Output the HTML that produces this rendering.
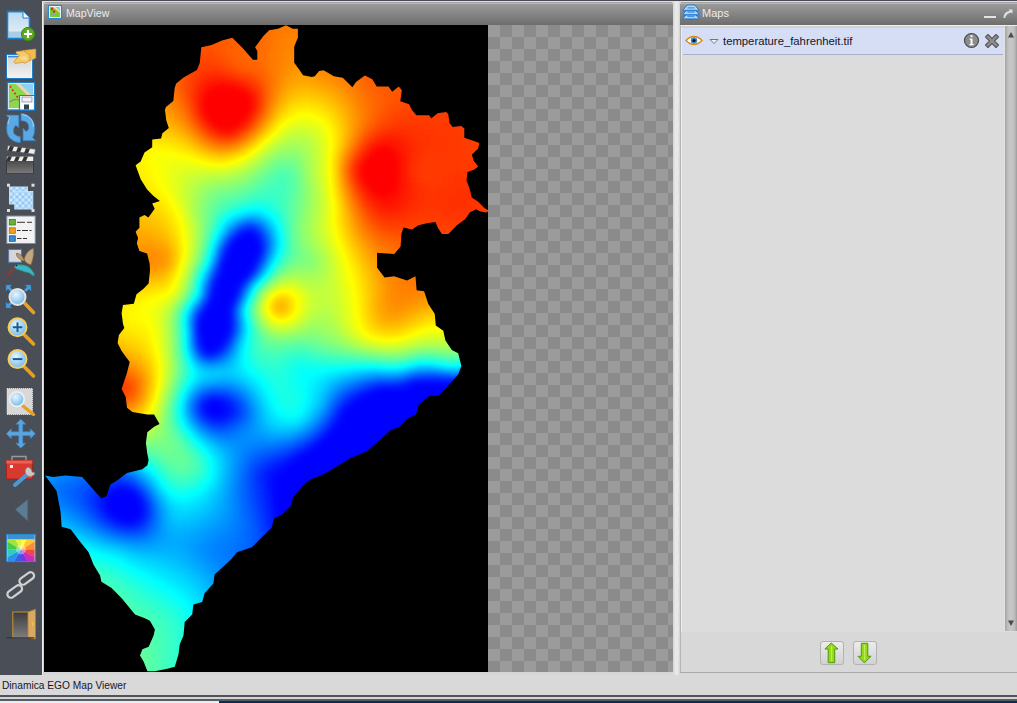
<!DOCTYPE html>
<html><head><meta charset="utf-8"><style>
*{margin:0;padding:0;box-sizing:border-box}
html,body{width:1017px;height:703px;overflow:hidden;background:#d9d9d9;font-family:"Liberation Sans",sans-serif}
body{position:relative}
.a{position:absolute}
.hdr{background:linear-gradient(#a2a2a2 0,#a2a2a2 1px,#b9b9b9 1px,#b9b9b9 2px,#9b9b9b 2px,#6d6d6d 100%)}
.chk{background-color:#8b8b8b;background-image:linear-gradient(45deg,#9b9b9b 25%,transparent 25%,transparent 75%,#9b9b9b 75%),linear-gradient(45deg,#9b9b9b 25%,transparent 25%,transparent 75%,#9b9b9b 75%);background-size:24px 24px;background-position:12px 0,0 12px}
.ttl{color:#ececec;font-size:11px;line-height:13px;white-space:nowrap}
</style></head><body>
<div class="a" style="left:0;top:0;width:1017px;height:1px;background:#474b53"></div>
<div class="a" style="left:0;top:0;width:42px;height:675px;background:#4a4f57"></div>
<div class="a" style="left:42px;top:1px;width:632px;height:674px;background:#d6d6d6;border-left:1px solid #ededed;border-top:1px solid #e2e2e2"></div>
<div class="a" style="left:43px;top:2px;width:1px;height:673px;background:#cfcfcf"></div>
<div class="a hdr" style="left:44px;top:2px;width:629px;height:23px;border-radius:2px 2px 0 0"></div>
<div class="a ttl" style="left:66px;top:7px;font-size:10.6px">MapView</div>
<div class="a chk" style="left:488px;top:25px;width:185px;height:647px"></div>
<svg id="map" width="444" height="647" viewBox="44 25 444 647" style="position:absolute;left:44px;top:25px">
<defs><clipPath id="cp"><path d="M164.4 111.4L165.9 107.0L173.3 101.1L174.7 87.8L176.2 83.4L183.6 77.5L196.9 70.1L199.8 62.8L201.3 47.3L211.6 45.1L222.0 40.6L232.3 37.7L242.6 48.0L252.9 59.8L257.3 59.8L257.3 51.0L255.1 47.3L263.2 36.2L269.1 30.3L278.0 28.8L286.1 25.2L292.7 28.8L297.9 28.8L297.9 37.7L294.2 46.5L294.2 62.8L298.6 68.7L303.1 75.3L311.8 77.0L314.7 76.2L319.2 71.1L323.6 70.3L333.9 76.2L342.8 77.7L352.4 87.3L356.0 82.1L364.9 75.5L372.3 79.2L376.7 86.5L388.5 86.5L392.2 91.7L398.8 86.5L401.8 90.2L400.3 101.3L409.1 104.2L412.0 110.0L416.3 115.3L429.1 115.3L431.2 118.5L437.7 113.2L446.2 112.1L448.3 114.3L449.4 122.8L452.6 127.1L461.1 126.0L464.3 128.2L464.3 137.8L474.0 141.0L479.3 143.1L478.2 148.4L471.8 154.8L474.0 161.2L478.2 166.6L474.0 169.8L467.5 171.9L466.5 180.5L469.7 189.0L471.8 197.5L478.2 201.8L484.6 208.2L488.9 210.4L486.8 212.5L480.4 211.4L476.1 209.3L469.7 212.5L465.4 218.9L456.9 225.3L448.3 233.9L441.9 233.9L437.7 227.4L435.5 222.1L427.0 223.2L418.4 225.3L412.0 229.6L403.5 227.4L401.4 233.9L400.6 246.4L394.2 253.9L377.1 252.8L377.1 267.8L384.6 277.4L394.2 276.3L407.0 280.6L415.5 276.3L416.6 290.2L424.1 291.2L428.3 304.1L434.7 313.7L435.8 325.4L443.3 330.8L445.4 340.4L451.8 350.0L458.2 353.2L461.4 366.0L458.2 374.5L443.0 391.6L438.9 395.7L429.5 395.7L418.6 405.1L415.9 414.6L407.8 418.6L399.7 426.8L391.6 429.5L378.1 441.6L367.3 451.1L351.1 457.8L337.6 465.9L324.1 474.1L310.5 479.5L305.1 483.5L293.0 497.0L291.6 505.1L282.2 514.6L274.1 518.6L271.8 527.4L261.9 537.3L251.9 547.3L237.0 552.3L230.8 559.7L214.6 574.6L213.4 583.4L204.6 593.3L202.2 602.0L193.4 604.5L192.2 614.5L184.7 621.9L183.5 635.6L179.8 644.3L178.5 654.3L174.8 666.7L167.3 668.7L154.9 671.2L147.4 671.2L143.7 661.7L140.0 655.5L142.4 649.3L148.7 646.8L153.6 635.6L154.9 629.4L149.9 620.7L144.9 618.2L135.0 614.5L133.4 612.4L121.9 598.4L111.6 588.1L101.4 581.7L100.1 575.4L93.7 565.1L88.6 552.3L78.4 539.5L70.7 529.3L61.7 526.7L60.5 511.4L56.6 490.9L45.1 475.6L52.8 476.9L65.6 475.6L82.2 476.9L101.4 498.6L106.5 496.0L110.4 484.5L116.7 480.7L127.0 473.0L142.3 469.2L147.4 465.3L148.6 460.0L147.3 453.8L145.9 443.0L147.3 432.2L154.1 426.8L159.5 424.1L154.1 414.6L147.3 414.6L132.4 411.9L127.0 407.8L125.7 397.0L121.6 388.9L127.0 372.7L129.7 361.9L121.6 351.1L117.6 343.0L118.9 334.9L124.3 328.1L123.0 324.1L121.6 313.2L123.0 305.1L133.8 303.8L136.5 294.3L143.2 288.9L148.6 283.5L150.0 270.0L149.6 263.6L147.1 253.4L139.4 250.9L136.8 243.2L138.1 238.1L135.6 231.7L139.4 227.8L139.4 217.6L144.5 215.1L148.4 217.6L154.7 208.7L152.2 203.6L159.9 201.0L153.5 195.9L147.1 189.5L140.7 179.3L135.6 165.2L140.7 161.4L144.5 152.4L152.2 147.3L152.2 139.6L161.1 138.4L162.4 133.2L168.8 128.1L166.3 120.5L165.0 110.2Z"/></clipPath>
<filter id="hf" filterUnits="userSpaceOnUse" x="24" y="5" width="484" height="687" color-interpolation-filters="sRGB">
<feGaussianBlur stdDeviation="3.5"/>
<feComponentTransfer><feFuncR type="table" tableValues="0 0 1 1"/><feFuncG type="table" tableValues="0 1 1 0"/><feFuncB type="table" tableValues="1 1 0 0"/><feFuncA type="discrete" tableValues="1"/></feComponentTransfer>
</filter></defs>
<rect x="44" y="25" width="444" height="647" fill="#000"/>
<g clip-path="url(#cp)"><g filter="url(#hf)"><path fill="#000000" d="M244 231h12v6h-12zM232 237h24v6h-24zM232 243h30v6h-30zM226 249h36v6h-36zM226 255h30v6h-30zM220 261h36v6h-36zM220 267h30v6h-30zM220 273h30v6h-30zM214 279h30v6h-30zM214 285h24v6h-24zM214 291h24v6h-24zM208 297h24v6h-24zM208 303h24v6h-24zM202 309h30v6h-30zM202 315h30v6h-30zM196 321h36v6h-36zM196 327h36v6h-36zM202 333h24v6h-24zM202 339h24v6h-24zM202 345h18v6h-18zM412 381h54v6h-54zM376 387h132v6h-132zM364 393h144v6h-144zM208 399h12v6h-12zM352 399h156v6h-156zM208 405h18v6h-18zM346 405h162v6h-162zM208 411h12v6h-12zM340 411h168v6h-168zM340 417h168v6h-168zM334 423h174v6h-174zM328 429h180v6h-180zM322 435h186v6h-186zM316 441h192v6h-192zM310 447h198v6h-198zM298 453h210v6h-210zM292 459h216v6h-216zM286 465h222v6h-222zM280 471h228v6h-228zM274 477h234v6h-234zM274 483h234v6h-234zM112 489h18v6h-18zM274 489h234v6h-234zM106 495h30v6h-30zM274 495h234v6h-234zM106 501h36v6h-36zM274 501h234v6h-234zM106 507h36v6h-36zM274 507h234v6h-234zM112 513h30v6h-30zM280 513h228v6h-228zM124 519h6v6h-6zM280 519h228v6h-228zM280 525h228v6h-228zM280 531h228v6h-228zM280 537h228v6h-228zM280 543h228v6h-228zM280 549h228v6h-228zM280 555h228v6h-228zM280 561h228v6h-228zM280 567h228v6h-228zM280 573h228v6h-228zM280 579h228v6h-228zM280 585h228v6h-228zM280 591h228v6h-228zM280 597h228v6h-228zM286 603h222v6h-222zM286 609h222v6h-222zM286 615h222v6h-222zM286 621h222v6h-222zM286 627h222v6h-222zM286 633h222v6h-222zM286 639h222v6h-222zM286 645h222v6h-222zM286 651h222v6h-222zM286 657h222v6h-222zM286 663h222v6h-222zM286 669h222v6h-222zM286 675h222v6h-222zM286 681h222v6h-222zM286 687h222v6h-222z"/><path fill="#010101" d="M220 411h6v6h-6zM280 603h6v6h-6zM280 609h6v6h-6z"/><path fill="#020202" d="M466 381h6v6h-6zM202 405h6v6h-6zM280 465h6v6h-6zM274 471h6v6h-6zM130 489h6v6h-6zM136 495h6v6h-6zM274 513h6v6h-6zM130 519h6v6h-6zM280 615h6v6h-6zM280 621h6v6h-6z"/><path fill="#030303" d="M238 231h6v6h-6zM256 237h6v6h-6zM226 243h6v6h-6zM196 333h6v6h-6zM406 381h6v6h-6zM118 519h6v6h-6zM274 519h6v6h-6zM280 627h6v6h-6zM280 633h6v6h-6z"/><path fill="#040404" d="M250 267h6v6h-6zM232 297h6v6h-6zM472 381h6v6h-6zM358 393h6v6h-6zM220 399h6v6h-6zM304 447h6v6h-6zM286 459h6v6h-6zM274 525h6v6h-6zM280 639h6v6h-6zM280 645h6v6h-6z"/><path fill="#050505" d="M256 255h6v6h-6zM226 333h6v6h-6zM208 351h6v6h-6zM370 387h6v6h-6zM226 405h6v6h-6zM334 417h6v6h-6zM268 477h6v6h-6zM268 483h6v6h-6zM106 489h6v6h-6zM268 489h6v6h-6zM100 501h6v6h-6zM274 531h6v6h-6zM274 537h6v6h-6zM274 543h6v6h-6zM274 549h6v6h-6zM274 555h6v6h-6zM274 561h6v6h-6zM274 567h6v6h-6zM280 651h6v6h-6zM280 657h6v6h-6zM280 663h6v6h-6z"/><path fill="#060606" d="M214 273h6v6h-6zM196 315h6v6h-6zM478 381h6v6h-6zM274 465h6v6h-6zM268 471h6v6h-6zM100 495h6v6h-6zM268 495h6v6h-6zM106 513h6v6h-6zM274 573h6v6h-6zM274 579h6v6h-6zM274 585h6v6h-6zM274 591h6v6h-6zM280 669h6v6h-6zM280 675h6v6h-6zM280 681h6v6h-6zM280 687h6v6h-6z"/><path fill="#070707" d="M220 255h6v6h-6zM208 291h6v6h-6zM196 339h6v6h-6zM202 399h6v6h-6zM202 411h6v6h-6zM226 411h6v6h-6zM292 453h6v6h-6zM118 483h6v6h-6zM268 501h6v6h-6zM136 519h6v6h-6zM274 597h6v6h-6zM274 603h6v6h-6z"/><path fill="#080808" d="M202 351h6v6h-6zM484 381h12v6h-12zM346 399h6v6h-6zM340 405h6v6h-6zM214 417h6v6h-6zM310 441h6v6h-6zM100 507h6v6h-6zM142 507h6v6h-6zM268 507h6v6h-6zM274 609h6v6h-6z"/><path fill="#090909" d="M202 303h6v6h-6zM220 345h6v6h-6zM496 381h12v6h-12zM220 417h6v6h-6zM328 423h6v6h-6zM280 459h6v6h-6zM262 477h6v6h-6zM112 483h6v6h-6zM124 483h6v6h-6zM268 513h6v6h-6zM112 519h6v6h-6zM274 615h6v6h-6zM274 621h6v6h-6z"/><path fill="#0a0a0a" d="M238 285h6v6h-6zM226 399h6v6h-6zM208 417h6v6h-6zM268 465h6v6h-6zM262 471h6v6h-6zM262 483h6v6h-6zM100 489h6v6h-6zM142 501h6v6h-6zM142 513h6v6h-6zM268 519h6v6h-6zM274 627h6v6h-6zM274 633h6v6h-6z"/><path fill="#0b0b0b" d="M400 381h6v6h-6zM364 387h6v6h-6zM352 393h6v6h-6zM322 429h6v6h-6zM316 435h6v6h-6zM262 489h6v6h-6zM268 525h6v6h-6zM274 639h6v6h-6zM274 645h6v6h-6zM274 651h6v6h-6z"/><path fill="#0c0c0c" d="M256 231h6v6h-6zM208 285h6v6h-6zM334 411h6v6h-6zM298 447h6v6h-6zM262 495h6v6h-6zM268 531h6v6h-6zM268 549h6v6h-6zM268 555h6v6h-6zM268 561h6v6h-6zM268 567h6v6h-6zM268 573h6v6h-6zM268 579h6v6h-6zM268 585h6v6h-6zM274 657h6v6h-6zM274 663h6v6h-6zM274 669h6v6h-6zM274 675h6v6h-6zM274 681h6v6h-6zM274 687h6v6h-6z"/><path fill="#0d0d0d" d="M244 225h6v6h-6zM196 345h6v6h-6zM214 351h6v6h-6zM232 405h6v6h-6zM286 453h6v6h-6zM274 459h6v6h-6zM106 483h6v6h-6zM136 489h6v6h-6zM94 495h6v6h-6zM94 501h6v6h-6zM262 501h6v6h-6zM268 537h6v6h-6zM268 543h6v6h-6zM268 591h6v6h-6zM268 597h6v6h-6z"/><path fill="#0e0e0e" d="M250 225h6v6h-6zM214 393h6v6h-6zM232 411h6v6h-6zM226 417h6v6h-6zM262 465h6v6h-6zM100 513h6v6h-6zM124 525h6v6h-6zM268 603h6v6h-6zM268 609h6v6h-6z"/><path fill="#0f0f0f" d="M424 375h24v6h-24zM394 381h6v6h-6zM208 393h6v6h-6zM256 477h6v6h-6zM262 507h6v6h-6zM106 519h6v6h-6zM130 525h6v6h-6zM268 615h6v6h-6z"/><path fill="#101010" d="M256 261h6v6h-6zM226 339h6v6h-6zM418 375h6v6h-6zM256 471h6v6h-6zM130 483h6v6h-6zM256 483h6v6h-6zM94 489h6v6h-6zM94 507h6v6h-6zM262 513h6v6h-6zM268 621h6v6h-6zM268 627h6v6h-6z"/><path fill="#111111" d="M220 249h6v6h-6zM214 267h6v6h-6zM232 303h6v6h-6zM196 309h6v6h-6zM448 375h6v6h-6zM382 381h12v6h-12zM220 393h6v6h-6zM340 399h6v6h-6zM196 405h6v6h-6zM304 441h6v6h-6zM268 459h6v6h-6zM100 483h6v6h-6zM256 489h6v6h-6zM142 495h6v6h-6zM142 519h6v6h-6zM262 519h6v6h-6zM118 525h6v6h-6zM268 633h6v6h-6zM268 639h6v6h-6zM268 645h6v6h-6z"/><path fill="#121212" d="M232 231h6v6h-6zM376 381h6v6h-6zM358 387h6v6h-6zM202 417h6v6h-6zM328 417h6v6h-6zM292 447h6v6h-6zM280 453h6v6h-6zM256 495h6v6h-6zM136 525h6v6h-6zM262 555h6v6h-6zM262 561h6v6h-6zM262 567h6v6h-6zM262 573h6v6h-6zM262 579h6v6h-6zM262 585h6v6h-6zM268 651h6v6h-6zM268 657h6v6h-6zM268 663h6v6h-6zM268 669h6v6h-6zM268 675h6v6h-6zM268 681h6v6h-6zM268 687h6v6h-6z"/><path fill="#131313" d="M232 321h6v6h-6zM412 375h6v6h-6zM346 393h6v6h-6zM232 399h6v6h-6zM334 405h6v6h-6zM256 465h6v6h-6zM118 477h6v6h-6zM88 495h6v6h-6zM262 525h6v6h-6zM262 531h6v6h-6zM262 543h6v6h-6zM262 549h6v6h-6zM262 591h6v6h-6zM262 597h6v6h-6z"/><path fill="#141414" d="M226 237h6v6h-6zM262 243h6v6h-6zM244 279h6v6h-6zM262 459h6v6h-6zM112 477h6v6h-6zM88 501h6v6h-6zM256 501h6v6h-6zM262 537h6v6h-6zM262 603h6v6h-6z"/><path fill="#151515" d="M196 399h6v6h-6zM196 411h6v6h-6zM232 417h6v6h-6zM214 423h12v6h-12zM310 435h6v6h-6zM88 489h6v6h-6zM256 507h6v6h-6zM112 525h6v6h-6zM262 609h6v6h-6zM262 615h6v6h-6z"/><path fill="#161616" d="M250 273h6v6h-6zM208 279h6v6h-6zM238 291h6v6h-6zM232 315h6v6h-6zM454 375h6v6h-6zM370 381h6v6h-6zM202 393h6v6h-6zM226 393h6v6h-6zM322 423h6v6h-6zM274 453h6v6h-6zM250 477h6v6h-6zM94 483h6v6h-6zM94 513h6v6h-6zM100 519h6v6h-6zM262 621h6v6h-6zM262 627h6v6h-6z"/><path fill="#171717" d="M238 225h6v6h-6zM262 237h6v6h-6zM262 249h6v6h-6zM232 327h6v6h-6zM238 411h6v6h-6zM316 429h6v6h-6zM250 471h6v6h-6zM106 477h6v6h-6zM124 477h6v6h-6zM250 483h6v6h-6zM88 507h6v6h-6zM256 513h6v6h-6zM256 567h6v6h-6zM256 573h6v6h-6zM262 633h6v6h-6zM262 639h6v6h-6z"/><path fill="#181818" d="M232 309h6v6h-6zM352 387h6v6h-6zM238 405h6v6h-6zM208 423h6v6h-6zM286 447h6v6h-6zM250 489h6v6h-6zM82 495h6v6h-6zM148 507h6v6h-6zM256 519h6v6h-6zM256 555h6v6h-6zM256 561h6v6h-6zM256 579h6v6h-6zM256 585h6v6h-6zM262 645h6v6h-6zM262 651h6v6h-6zM262 657h6v6h-6zM262 663h6v6h-6zM262 681h6v6h-6zM262 687h6v6h-6z"/><path fill="#191919" d="M460 375h6v6h-6zM502 375h6v6h-6zM226 423h6v6h-6zM298 441h6v6h-6zM268 453h6v6h-6zM256 459h6v6h-6zM88 483h6v6h-6zM82 489h6v6h-6zM250 495h6v6h-6zM148 513h6v6h-6zM142 525h6v6h-6zM256 525h6v6h-6zM256 543h6v6h-6zM256 549h6v6h-6zM256 591h6v6h-6zM256 597h6v6h-6zM262 669h6v6h-6zM262 675h6v6h-6z"/><path fill="#1a1a1a" d="M256 225h6v6h-6zM220 351h6v6h-6zM466 375h6v6h-6zM496 375h6v6h-6zM250 465h6v6h-6zM100 477h6v6h-6zM136 483h6v6h-6zM82 501h6v6h-6zM250 501h6v6h-6zM256 531h6v6h-6zM256 537h6v6h-6zM256 603h6v6h-6z"/><path fill="#1b1b1b" d="M406 375h6v6h-6zM472 375h24v6h-24zM328 411h6v6h-6zM250 507h6v6h-6zM106 525h6v6h-6zM256 609h6v6h-6zM256 615h6v6h-6z"/><path fill="#1c1c1c" d="M202 297h6v6h-6zM196 351h6v6h-6zM364 381h6v6h-6zM340 393h6v6h-6zM334 399h6v6h-6zM280 447h6v6h-6zM262 453h6v6h-6zM142 489h6v6h-6zM148 501h6v6h-6zM130 531h6v6h-6zM250 561h6v6h-6zM250 567h6v6h-6zM250 573h6v6h-6zM256 621h6v6h-6z"/><path fill="#1d1d1d" d="M214 261h6v6h-6zM226 345h6v6h-6zM208 357h6v6h-6zM232 393h6v6h-6zM238 399h6v6h-6zM238 417h6v6h-6zM94 477h6v6h-6zM82 483h6v6h-6zM76 489h6v6h-6zM76 495h6v6h-6zM88 513h6v6h-6zM250 513h6v6h-6zM148 519h6v6h-6zM124 531h6v6h-6zM250 549h6v6h-6zM250 555h6v6h-6zM250 579h6v6h-6zM250 585h6v6h-6zM256 627h6v6h-6zM256 633h6v6h-6z"/><path fill="#1e1e1e" d="M220 243h6v6h-6zM304 435h6v6h-6zM250 459h6v6h-6zM130 477h6v6h-6zM244 477h6v6h-6zM244 483h6v6h-6zM244 489h6v6h-6zM82 507h6v6h-6zM94 519h6v6h-6zM250 519h6v6h-6zM136 531h6v6h-6zM250 543h6v6h-6zM250 591h6v6h-6zM256 639h6v6h-6zM256 645h6v6h-6zM256 651h6v6h-6zM256 687h6v6h-6z"/><path fill="#1f1f1f" d="M262 231h6v6h-6zM256 267h6v6h-6zM232 333h6v6h-6zM346 387h6v6h-6zM232 423h6v6h-6zM292 441h6v6h-6zM274 447h6v6h-6zM256 453h6v6h-6zM244 471h6v6h-6zM76 483h6v6h-6zM244 495h6v6h-6zM76 501h6v6h-6zM250 525h6v6h-6zM118 531h6v6h-6zM250 531h6v6h-6zM250 537h6v6h-6zM250 597h6v6h-6zM256 657h6v6h-6zM256 663h6v6h-6zM256 669h6v6h-6zM256 675h6v6h-6zM256 681h6v6h-6z"/><path fill="#202020" d="M262 255h6v6h-6zM202 357h6v6h-6zM196 417h6v6h-6zM322 417h6v6h-6zM88 477h6v6h-6zM70 489h6v6h-6zM70 495h6v6h-6zM244 501h6v6h-6zM244 561h6v6h-6zM244 567h6v6h-6zM250 603h6v6h-6z"/><path fill="#212121" d="M358 381h6v6h-6zM214 387h6v6h-6zM196 393h6v6h-6zM202 423h6v6h-6zM220 429h6v6h-6zM244 465h6v6h-6zM112 471h12v6h-12zM244 507h6v6h-6zM100 525h6v6h-6zM244 549h6v6h-6zM244 555h6v6h-6zM244 573h6v6h-6zM250 609h6v6h-6zM250 615h6v6h-6z"/><path fill="#222222" d="M190 321h6v6h-6zM208 387h6v6h-6zM220 387h6v6h-6zM244 411h6v6h-6zM316 423h6v6h-6zM310 429h6v6h-6zM268 447h6v6h-6zM106 471h6v6h-6zM82 477h6v6h-6zM70 483h6v6h-6zM244 513h6v6h-6zM148 525h6v6h-6zM142 531h6v6h-6zM244 543h6v6h-6zM244 579h6v6h-6zM244 585h6v6h-6zM250 621h6v6h-6z"/><path fill="#232323" d="M208 273h6v6h-6zM214 357h6v6h-6zM400 375h6v6h-6zM328 405h6v6h-6zM214 429h6v6h-6zM226 429h6v6h-6zM250 453h6v6h-6zM64 489h6v6h-6zM148 495h6v6h-6zM70 501h6v6h-6zM76 507h6v6h-6zM244 519h6v6h-6zM244 525h6v6h-6zM112 531h6v6h-6zM244 531h6v6h-6zM244 537h6v6h-6zM244 591h6v6h-6zM250 627h6v6h-6zM250 633h6v6h-6z"/><path fill="#242424" d="M238 297h6v6h-6zM196 303h6v6h-6zM190 327h6v6h-6zM190 405h6v6h-6zM244 405h6v6h-6zM286 441h6v6h-6zM262 447h6v6h-6zM76 477h6v6h-6zM64 483h6v6h-6zM64 495h6v6h-6zM82 513h6v6h-6zM238 549h6v6h-6zM238 555h6v6h-6zM238 561h6v6h-6zM238 567h6v6h-6zM244 597h6v6h-6zM250 639h6v6h-6zM250 645h6v6h-6zM250 687h6v6h-6z"/><path fill="#252525" d="M226 387h6v6h-6zM244 417h6v6h-6zM244 459h6v6h-6zM100 471h6v6h-6zM124 471h6v6h-6zM238 483h6v6h-6zM58 489h6v6h-6zM238 489h6v6h-6zM88 519h6v6h-6zM238 543h6v6h-6zM238 573h6v6h-6zM244 603h6v6h-6zM250 651h6v6h-6zM250 657h6v6h-6zM250 663h6v6h-6zM250 669h6v6h-6zM250 675h6v6h-6zM250 681h6v6h-6z"/><path fill="#262626" d="M250 219h6v6h-6zM232 225h6v6h-6zM226 231h6v6h-6zM238 393h6v6h-6zM334 393h6v6h-6zM238 423h6v6h-6zM298 435h6v6h-6zM256 447h6v6h-6zM70 477h6v6h-6zM238 477h6v6h-6zM58 483h6v6h-6zM238 495h6v6h-6zM238 501h6v6h-6zM238 531h6v6h-6zM238 537h6v6h-6zM232 549h6v6h-6zM232 555h6v6h-6zM238 579h6v6h-6zM244 609h6v6h-6z"/><path fill="#272727" d="M244 219h6v6h-6zM190 315h6v6h-6zM352 381h6v6h-6zM340 387h6v6h-6zM190 399h6v6h-6zM208 429h6v6h-6zM232 429h6v6h-6zM280 441h6v6h-6zM94 471h6v6h-6zM238 471h6v6h-6zM58 495h6v6h-6zM64 501h6v6h-6zM238 507h6v6h-6zM238 513h6v6h-6zM238 519h6v6h-6zM238 525h6v6h-6zM232 543h6v6h-6zM232 561h6v6h-6zM232 567h6v6h-6zM238 585h6v6h-6zM244 615h6v6h-6z"/><path fill="#282828" d="M202 291h6v6h-6zM190 333h6v6h-6zM394 375h6v6h-6zM202 387h6v6h-6zM190 411h6v6h-6zM250 447h6v6h-6zM244 453h6v6h-6zM64 477h6v6h-6zM136 477h6v6h-6zM142 483h6v6h-6zM70 507h6v6h-6zM154 513h6v6h-6zM94 525h6v6h-6zM106 531h6v6h-6zM148 531h6v6h-6zM232 537h6v6h-6zM226 549h6v6h-6zM226 555h6v6h-6zM238 591h6v6h-6zM244 621h6v6h-6z"/><path fill="#292929" d="M214 255h6v6h-6zM244 285h6v6h-6zM190 339h6v6h-6zM376 375h18v6h-18zM244 399h6v6h-6zM322 411h6v6h-6zM238 465h6v6h-6zM88 471h6v6h-6zM58 477h6v6h-6zM52 483h6v6h-6zM52 489h6v6h-6zM154 507h6v6h-6zM76 513h6v6h-6zM154 519h6v6h-6zM232 531h6v6h-6zM130 537h6v6h-6zM226 543h6v6h-6zM226 561h6v6h-6zM232 573h6v6h-6zM244 627h6v6h-6zM244 633h6v6h-6z"/><path fill="#2a2a2a" d="M232 339h6v6h-6zM226 351h6v6h-6zM502 369h6v6h-6zM232 387h6v6h-6zM274 441h6v6h-6zM82 471h6v6h-6zM52 495h6v6h-6zM58 501h6v6h-6zM232 525h6v6h-6zM136 537h6v6h-6zM226 537h6v6h-6zM220 543h6v6h-6zM220 549h6v6h-6zM220 555h6v6h-6zM226 567h6v6h-6zM232 579h6v6h-6zM238 597h6v6h-6zM244 639h6v6h-6zM244 645h6v6h-6zM244 681h6v6h-6zM244 687h6v6h-6z"/><path fill="#2b2b2b" d="M262 225h6v6h-6zM424 369h6v6h-6zM496 369h6v6h-6zM328 399h6v6h-6zM244 423h6v6h-6zM238 429h6v6h-6zM226 435h6v6h-6zM262 441h12v6h-12zM244 447h6v6h-6zM238 459h6v6h-6zM76 471h6v6h-6zM82 519h6v6h-6zM232 519h6v6h-6zM154 525h6v6h-6zM226 531h6v6h-6zM124 537h6v6h-6zM220 537h6v6h-6zM214 543h6v6h-6zM214 549h6v6h-6zM220 561h6v6h-6zM232 585h6v6h-6zM238 603h6v6h-6zM244 651h6v6h-6zM244 657h6v6h-6zM244 663h6v6h-6zM244 669h6v6h-6zM244 675h6v6h-6z"/><path fill="#2c2c2c" d="M220 357h6v6h-6zM418 369h6v6h-6zM430 369h6v6h-6zM370 375h6v6h-6zM304 429h6v6h-6zM220 435h6v6h-6zM232 435h6v6h-6zM292 435h6v6h-6zM256 441h6v6h-6zM52 477h6v6h-6zM148 489h6v6h-6zM232 489h6v6h-6zM232 495h6v6h-6zM232 501h6v6h-6zM64 507h6v6h-6zM232 507h6v6h-6zM232 513h6v6h-6zM142 537h6v6h-6zM208 549h6v6h-6zM214 555h6v6h-6zM226 573h6v6h-6zM238 609h6v6h-6z"/><path fill="#2d2d2d" d="M262 261h6v6h-6zM490 369h6v6h-6zM346 381h6v6h-6zM316 417h6v6h-6zM196 423h6v6h-6zM250 441h6v6h-6zM238 453h6v6h-6zM70 471h6v6h-6zM130 471h6v6h-6zM46 483h6v6h-6zM232 483h6v6h-6zM46 489h6v6h-6zM154 501h6v6h-6zM226 525h6v6h-6zM100 531h6v6h-6zM220 531h6v6h-6zM214 537h6v6h-6zM208 543h6v6h-6zM220 567h6v6h-6zM232 591h6v6h-6zM238 615h6v6h-6z"/><path fill="#2e2e2e" d="M256 219h6v6h-6zM268 243h6v6h-6zM190 345h6v6h-6zM250 411h6v6h-6zM310 423h6v6h-6zM244 429h6v6h-6zM238 435h6v6h-6zM244 441h6v6h-6zM238 447h6v6h-6zM64 471h6v6h-6zM232 477h6v6h-6zM46 495h6v6h-6zM52 501h6v6h-6zM70 513h6v6h-6zM88 525h6v6h-6zM118 537h6v6h-6zM208 555h6v6h-6zM214 561h6v6h-6zM226 579h6v6h-6zM238 621h6v6h-6z"/><path fill="#2f2f2f" d="M220 237h6v6h-6zM268 237h6v6h-6zM202 285h6v6h-6zM196 357h6v6h-6zM436 369h6v6h-6zM484 369h6v6h-6zM364 375h6v6h-6zM250 417h6v6h-6zM214 435h6v6h-6zM244 435h6v6h-6zM238 441h6v6h-6zM58 471h6v6h-6zM58 507h6v6h-6zM226 519h6v6h-6zM154 531h6v6h-6zM214 531h6v6h-6zM148 537h6v6h-6zM208 537h6v6h-6zM202 543h6v6h-6zM202 549h6v6h-6zM220 573h6v6h-6zM232 597h6v6h-6zM238 627h6v6h-6zM238 633h6v6h-6z"/><path fill="#303030" d="M238 219h6v6h-6zM412 369h6v6h-6zM334 387h6v6h-6zM244 393h6v6h-6zM250 405h6v6h-6zM202 429h6v6h-6zM250 435h6v6h-6zM232 441h6v6h-6zM106 465h12v6h-12zM232 471h6v6h-6zM46 477h6v6h-6zM226 513h6v6h-6zM76 519h6v6h-6zM220 525h6v6h-6zM208 561h6v6h-6zM214 567h6v6h-6zM226 585h6v6h-6zM232 603h6v6h-6zM238 639h6v6h-6zM238 645h6v6h-6zM238 651h6v6h-6zM238 675h6v6h-6zM238 681h6v6h-6zM238 687h6v6h-6z"/><path fill="#313131" d="M208 267h6v6h-6zM190 309h6v6h-6zM478 369h6v6h-6zM196 387h6v6h-6zM238 387h6v6h-6zM190 417h6v6h-6zM250 423h6v6h-6zM250 429h6v6h-6zM256 435h6v6h-6zM286 435h6v6h-6zM100 465h6v6h-6zM118 465h6v6h-6zM232 465h6v6h-6zM40 483h6v6h-6zM40 489h6v6h-6zM46 501h6v6h-6zM208 531h6v6h-6zM112 537h6v6h-6zM202 537h6v6h-6zM202 555h6v6h-6zM232 609h6v6h-6zM238 657h6v6h-6zM238 663h6v6h-6zM238 669h6v6h-6z"/><path fill="#323232" d="M472 369h6v6h-6zM220 381h6v6h-6zM190 393h6v6h-6zM328 393h6v6h-6zM322 405h6v6h-6zM226 441h6v6h-6zM232 447h6v6h-6zM94 465h6v6h-6zM52 471h6v6h-6zM40 495h6v6h-6zM226 501h6v6h-6zM52 507h6v6h-6zM226 507h6v6h-6zM64 513h6v6h-6zM220 519h6v6h-6zM214 525h6v6h-6zM196 543h6v6h-6zM196 549h6v6h-6zM220 579h6v6h-6zM226 591h6v6h-6zM232 615h6v6h-6z"/><path fill="#333333" d="M214 249h6v6h-6zM268 249h6v6h-6zM250 279h6v6h-6zM238 321h6v6h-6zM442 369h6v6h-6zM358 375h6v6h-6zM214 381h6v6h-6zM340 381h6v6h-6zM262 435h6v6h-6zM280 435h6v6h-6zM232 453h6v6h-6zM232 459h6v6h-6zM88 465h6v6h-6zM226 495h6v6h-6zM82 525h6v6h-6zM94 531h6v6h-6zM202 531h6v6h-6zM154 537h6v6h-6zM196 537h6v6h-6zM202 561h6v6h-6zM208 567h6v6h-6zM214 573h6v6h-6zM226 597h6v6h-6zM232 621h6v6h-6z"/><path fill="#343434" d="M238 327h6v6h-6zM232 345h6v6h-6zM466 369h6v6h-6zM226 381h6v6h-6zM298 429h6v6h-6zM268 435h12v6h-12zM82 465h6v6h-6zM40 477h6v6h-6zM226 489h6v6h-6zM154 495h6v6h-6zM220 513h6v6h-6zM160 519h6v6h-6zM160 525h6v6h-6zM208 525h6v6h-6zM160 531h6v6h-6zM136 543h6v6h-6zM190 543h6v6h-6zM196 555h6v6h-6zM220 585h6v6h-6zM232 627h6v6h-6z"/><path fill="#353535" d="M268 231h6v6h-6zM256 273h6v6h-6zM208 363h6v6h-6zM460 369h6v6h-6zM208 381h6v6h-6zM250 399h6v6h-6zM256 429h6v6h-6zM208 435h6v6h-6zM220 441h6v6h-6zM70 465h12v6h-12zM124 465h6v6h-6zM46 471h6v6h-6zM142 477h6v6h-6zM226 483h6v6h-6zM34 489h6v6h-6zM40 501h6v6h-6zM46 507h6v6h-6zM58 513h6v6h-6zM160 513h6v6h-6zM70 519h6v6h-6zM214 519h6v6h-6zM106 537h6v6h-6zM190 537h6v6h-6zM142 543h6v6h-6zM190 549h6v6h-6zM214 579h6v6h-6zM226 603h6v6h-6zM232 633h6v6h-6zM232 687h6v6h-6z"/><path fill="#363636" d="M238 303h6v6h-6zM454 369h6v6h-6zM316 411h6v6h-6zM226 447h6v6h-6zM64 465h6v6h-6zM136 471h6v6h-6zM34 483h6v6h-6zM34 495h6v6h-6zM220 507h6v6h-6zM196 531h6v6h-6zM160 537h6v6h-6zM130 543h6v6h-6zM148 543h6v6h-6zM208 573h6v6h-6zM220 591h6v6h-6zM232 639h6v6h-6zM232 645h6v6h-6zM232 651h6v6h-6zM232 657h6v6h-6zM232 663h6v6h-6zM232 669h6v6h-6zM232 675h6v6h-6zM232 681h6v6h-6z"/><path fill="#373737" d="M202 279h6v6h-6zM226 357h6v6h-6zM406 369h6v6h-6zM448 369h6v6h-6zM352 375h6v6h-6zM232 381h6v6h-6zM256 423h6v6h-6zM58 465h6v6h-6zM226 477h6v6h-6zM148 483h6v6h-6zM160 507h6v6h-6zM52 513h6v6h-6zM208 519h6v6h-6zM202 525h6v6h-6zM184 537h6v6h-6zM154 543h6v6h-6zM184 543h6v6h-6zM190 555h6v6h-6zM196 561h6v6h-6zM202 567h6v6h-6zM226 609h6v6h-6z"/><path fill="#383838" d="M226 225h6v6h-6zM238 315h6v6h-6zM214 363h6v6h-6zM322 399h6v6h-6zM304 423h6v6h-6zM40 471h6v6h-6zM34 477h6v6h-6zM34 501h6v6h-6zM220 501h6v6h-6zM40 507h6v6h-6zM214 513h6v6h-6zM64 519h6v6h-6zM76 525h6v6h-6zM88 531h6v6h-6zM166 531h6v6h-6zM190 531h6v6h-6zM166 537h6v6h-6zM178 537h6v6h-6zM124 543h6v6h-6zM178 543h6v6h-6zM184 549h6v6h-6zM214 585h6v6h-6zM220 597h6v6h-6zM226 615h6v6h-6z"/><path fill="#393939" d="M244 291h6v6h-6zM190 351h6v6h-6zM202 363h6v6h-6zM202 381h6v6h-6zM328 387h6v6h-6zM256 417h6v6h-6zM310 417h6v6h-6zM262 429h6v6h-6zM226 453h6v6h-6zM52 465h6v6h-6zM226 471h6v6h-6zM28 489h6v6h-6zM220 495h6v6h-6zM196 525h6v6h-6zM184 531h6v6h-6zM100 537h6v6h-6zM172 537h6v6h-6zM160 543h18v6h-18zM208 579h6v6h-6zM226 621h6v6h-6z"/><path fill="#3a3a3a" d="M502 363h6v6h-6zM334 381h6v6h-6zM244 387h6v6h-6zM184 405h6v6h-6zM256 411h6v6h-6zM292 429h6v6h-6zM214 441h6v6h-6zM226 459h6v6h-6zM226 465h6v6h-6zM28 483h6v6h-6zM28 495h6v6h-6zM214 507h6v6h-6zM46 513h6v6h-6zM202 519h6v6h-6zM166 525h6v6h-6zM172 531h12v6h-12zM178 549h6v6h-6zM184 555h6v6h-6zM190 561h6v6h-6zM196 567h6v6h-6zM202 573h6v6h-6zM214 591h6v6h-6zM220 603h6v6h-6zM226 627h6v6h-6z"/><path fill="#3b3b3b" d="M262 219h6v6h-6zM238 333h6v6h-6zM220 363h6v6h-6zM250 393h6v6h-6zM46 465h6v6h-6zM220 489h6v6h-6zM160 501h6v6h-6zM208 513h6v6h-6zM58 519h6v6h-6zM190 525h6v6h-6zM172 549h6v6h-6zM226 633h6v6h-6zM226 639h6v6h-6zM226 681h6v6h-6zM226 687h6v6h-6z"/><path fill="#3c3c3c" d="M232 219h6v6h-6zM196 297h6v6h-6zM238 309h6v6h-6zM232 351h6v6h-6zM496 363h6v6h-6zM346 375h6v6h-6zM238 381h6v6h-6zM256 405h6v6h-6zM196 429h6v6h-6zM268 429h6v6h-6zM220 447h6v6h-6zM130 465h6v6h-6zM34 471h6v6h-6zM28 477h6v6h-6zM28 501h6v6h-6zM34 507h6v6h-6zM70 525h6v6h-6zM184 525h6v6h-6zM82 531h6v6h-6zM118 543h6v6h-6zM148 549h24v6h-24zM178 555h6v6h-6zM208 585h6v6h-6zM220 609h6v6h-6zM226 645h6v6h-6zM226 651h6v6h-6zM226 657h6v6h-6zM226 663h6v6h-6zM226 669h6v6h-6zM226 675h6v6h-6z"/><path fill="#3d3d3d" d="M268 255h6v6h-6zM262 267h6v6h-6zM322 393h6v6h-6zM184 411h6v6h-6zM190 423h6v6h-6zM286 429h6v6h-6zM220 483h6v6h-6zM154 489h6v6h-6zM214 501h6v6h-6zM40 513h6v6h-6zM52 519h6v6h-6zM166 519h6v6h-6zM196 519h6v6h-6zM172 525h12v6h-12zM142 549h6v6h-6zM184 561h6v6h-6zM190 567h6v6h-6zM202 579h6v6h-6zM214 597h6v6h-6zM220 615h6v6h-6z"/><path fill="#3e3e3e" d="M268 225h6v6h-6zM214 243h6v6h-6zM184 399h6v6h-6zM316 405h6v6h-6zM262 423h6v6h-6zM274 429h12v6h-12zM202 435h6v6h-6zM40 465h6v6h-6zM208 507h6v6h-6zM166 513h6v6h-6zM202 513h6v6h-6zM94 537h6v6h-6zM136 549h6v6h-6zM172 555h6v6h-6zM196 573h6v6h-6zM220 621h6v6h-6z"/><path fill="#3f3f3f" d="M250 213h6v6h-6zM220 231h6v6h-6zM490 363h6v6h-6zM400 369h6v6h-6zM220 375h12v6h-12zM190 387h6v6h-6zM70 459h42v6h-42zM28 471h6v6h-6zM214 495h6v6h-6zM28 507h6v6h-6zM46 519h6v6h-6zM190 519h6v6h-6zM64 525h6v6h-6zM112 543h6v6h-6zM166 555h6v6h-6zM178 561h6v6h-6zM208 591h6v6h-6zM214 603h6v6h-6zM220 627h6v6h-6z"/><path fill="#404040" d="M226 363h6v6h-6zM214 375h6v6h-6zM340 375h6v6h-6zM196 381h6v6h-6zM256 399h6v6h-6zM58 459h12v6h-12zM112 459h6v6h-6zM220 477h6v6h-6zM34 513h6v6h-6zM172 519h6v6h-6zM184 519h6v6h-6zM76 531h6v6h-6zM130 549h6v6h-6zM160 555h6v6h-6zM184 567h6v6h-6zM202 585h6v6h-6zM220 633h6v6h-6zM220 681h6v6h-6zM220 687h6v6h-6z"/><path fill="#414141" d="M208 261h6v6h-6zM232 375h6v6h-6zM328 381h6v6h-6zM310 411h6v6h-6zM262 417h6v6h-6zM298 423h6v6h-6zM220 453h6v6h-6zM52 459h6v6h-6zM34 465h6v6h-6zM208 501h6v6h-6zM166 507h6v6h-6zM196 513h6v6h-6zM178 519h6v6h-6zM58 525h6v6h-6zM172 561h6v6h-6zM190 573h6v6h-6zM196 579h6v6h-6zM208 597h6v6h-6zM214 609h6v6h-6zM220 639h6v6h-6zM220 645h6v6h-6zM220 651h6v6h-6zM220 657h6v6h-6zM220 663h6v6h-6zM220 669h6v6h-6zM220 675h6v6h-6z"/><path fill="#424242" d="M244 213h6v6h-6zM196 363h6v6h-6zM484 363h6v6h-6zM370 369h12v6h-12zM208 375h6v6h-6zM250 387h6v6h-6zM322 387h6v6h-6zM208 441h6v6h-6zM118 459h6v6h-6zM142 471h6v6h-6zM220 471h6v6h-6zM148 477h6v6h-6zM214 489h6v6h-6zM160 495h6v6h-6zM202 507h6v6h-6zM28 513h6v6h-6zM40 519h6v6h-6zM88 537h6v6h-6zM106 543h6v6h-6zM154 555h6v6h-6zM214 615h6v6h-6z"/><path fill="#434343" d="M256 213h6v6h-6zM202 273h6v6h-6zM190 303h6v6h-6zM232 357h6v6h-6zM208 369h6v6h-6zM220 369h6v6h-6zM382 369h6v6h-6zM244 381h6v6h-6zM316 399h6v6h-6zM304 417h6v6h-6zM268 423h6v6h-6zM214 447h6v6h-6zM46 459h6v6h-6zM220 459h6v6h-6zM220 465h6v6h-6zM190 513h6v6h-6zM52 525h6v6h-6zM124 549h6v6h-6zM148 555h6v6h-6zM166 561h6v6h-6zM178 567h6v6h-6zM202 591h6v6h-6z"/><path fill="#444444" d="M238 339h6v6h-6zM214 369h6v6h-6zM226 369h6v6h-6zM364 369h6v6h-6zM388 369h12v6h-12zM262 411h6v6h-6zM184 417h6v6h-6zM28 465h6v6h-6zM172 513h6v6h-6zM34 519h6v6h-6zM70 531h6v6h-6zM142 555h6v6h-6zM184 573h6v6h-6zM190 579h6v6h-6zM196 585h6v6h-6zM208 603h6v6h-6zM214 621h6v6h-6z"/><path fill="#454545" d="M478 363h6v6h-6zM202 375h6v6h-6zM334 375h6v6h-6zM256 393h6v6h-6zM40 459h6v6h-6zM136 465h6v6h-6zM208 495h6v6h-6zM196 507h6v6h-6zM178 513h12v6h-12zM46 525h6v6h-6zM100 543h6v6h-6zM160 561h6v6h-6zM172 567h6v6h-6zM214 627h6v6h-6zM214 687h6v6h-6z"/><path fill="#464646" d="M274 237h6v6h-6zM190 357h6v6h-6zM358 369h6v6h-6zM238 375h6v6h-6zM184 393h6v6h-6zM316 393h6v6h-6zM274 423h6v6h-6zM292 423h6v6h-6zM124 459h6v6h-6zM154 483h6v6h-6zM214 483h6v6h-6zM166 501h6v6h-6zM202 501h6v6h-6zM64 531h6v6h-6zM82 537h6v6h-6zM136 555h6v6h-6zM202 597h6v6h-6zM208 609h6v6h-6zM214 633h6v6h-6zM214 639h6v6h-6zM214 669h6v6h-6zM214 675h6v6h-6zM214 681h6v6h-6z"/><path fill="#474747" d="M274 243h6v6h-6zM232 363h6v6h-6zM424 363h6v6h-6zM202 369h6v6h-6zM232 369h6v6h-6zM322 381h6v6h-6zM262 405h6v6h-6zM34 459h6v6h-6zM172 507h6v6h-6zM190 507h6v6h-6zM28 519h6v6h-6zM40 525h6v6h-6zM118 549h6v6h-6zM154 561h6v6h-6zM166 567h6v6h-6zM178 573h6v6h-6zM196 591h6v6h-6zM208 615h6v6h-6zM214 645h6v6h-6zM214 651h6v6h-6zM214 657h6v6h-6zM214 663h6v6h-6z"/><path fill="#484848" d="M184 321h6v6h-6zM418 363h6v6h-6zM472 363h6v6h-6zM352 369h6v6h-6zM310 405h6v6h-6zM268 417h6v6h-6zM280 423h12v6h-12zM58 531h6v6h-6zM148 561h6v6h-6zM184 579h6v6h-6zM190 585h6v6h-6zM202 603h6v6h-6z"/><path fill="#494949" d="M238 213h6v6h-6zM226 219h6v6h-6zM268 219h6v6h-6zM244 297h6v6h-6zM184 315h6v6h-6zM502 357h6v6h-6zM430 363h6v6h-6zM328 375h6v6h-6zM316 387h6v6h-6zM196 435h6v6h-6zM214 453h6v6h-6zM28 459h6v6h-6zM214 477h6v6h-6zM208 489h6v6h-6zM196 501h6v6h-6zM178 507h12v6h-12zM34 525h6v6h-6zM76 537h6v6h-6zM94 543h6v6h-6zM130 555h6v6h-6zM160 567h6v6h-6zM172 573h6v6h-6zM208 621h6v6h-6z"/><path fill="#4a4a4a" d="M274 231h6v6h-6zM268 261h6v6h-6zM238 345h6v6h-6zM196 375h6v6h-6zM250 381h6v6h-6zM190 429h6v6h-6zM52 453h18v6h-18zM202 495h6v6h-6zM52 531h6v6h-6zM112 549h6v6h-6zM178 579h6v6h-6zM196 597h6v6h-6zM208 627h6v6h-6zM208 687h6v6h-6z"/><path fill="#4b4b4b" d="M262 213h6v6h-6zM214 237h6v6h-6zM250 285h6v6h-6zM346 369h6v6h-6zM244 375h6v6h-6zM190 381h6v6h-6zM256 387h6v6h-6zM262 399h6v6h-6zM304 411h6v6h-6zM202 441h6v6h-6zM208 447h6v6h-6zM46 453h6v6h-6zM70 453h12v6h-12zM160 489h6v6h-6zM28 525h6v6h-6zM46 531h6v6h-6zM70 537h6v6h-6zM142 561h6v6h-6zM154 567h6v6h-6zM166 573h6v6h-6zM184 585h6v6h-6zM190 591h6v6h-6zM202 609h6v6h-6zM208 633h6v6h-6zM208 639h6v6h-6zM208 669h6v6h-6zM208 675h6v6h-6zM208 681h6v6h-6z"/><path fill="#4c4c4c" d="M220 225h6v6h-6zM274 249h6v6h-6zM196 291h6v6h-6zM412 363h6v6h-6zM466 363h6v6h-6zM196 369h6v6h-6zM238 369h6v6h-6zM316 381h6v6h-6zM310 399h6v6h-6zM268 411h6v6h-6zM298 417h6v6h-6zM40 453h6v6h-6zM82 453h6v6h-6zM130 459h6v6h-6zM214 459h6v6h-6zM214 471h6v6h-6zM172 501h6v6h-6zM190 501h6v6h-6zM88 543h6v6h-6zM124 555h6v6h-6zM202 615h6v6h-6zM208 645h6v6h-6zM208 651h6v6h-6zM208 657h6v6h-6zM208 663h6v6h-6z"/><path fill="#4d4d4d" d="M208 255h6v6h-6zM184 327h6v6h-6zM184 339h6v6h-6zM238 351h6v6h-6zM496 357h6v6h-6zM436 363h6v6h-6zM340 369h6v6h-6zM322 375h6v6h-6zM274 417h6v6h-6zM184 423h6v6h-6zM88 453h6v6h-6zM214 465h6v6h-6zM166 495h6v6h-6zM40 531h6v6h-6zM64 537h6v6h-6zM106 549h6v6h-6zM136 561h6v6h-6zM172 579h6v6h-6zM196 603h6v6h-6z"/><path fill="#4e4e4e" d="M310 393h6v6h-6zM34 453h6v6h-6zM94 453h12v6h-12zM148 471h6v6h-6zM208 483h6v6h-6zM196 495h6v6h-6zM178 501h12v6h-12zM34 531h6v6h-6zM148 567h6v6h-6zM160 573h6v6h-6zM178 585h6v6h-6zM190 597h6v6h-6zM202 621h6v6h-6z"/><path fill="#4f4f4f" d="M244 327h6v6h-6zM184 333h6v6h-6zM184 345h6v6h-6zM238 357h6v6h-6zM238 363h6v6h-6zM310 387h6v6h-6zM262 393h6v6h-6zM106 453h6v6h-6zM142 465h6v6h-6zM202 489h6v6h-6zM58 537h6v6h-6zM82 543h6v6h-6zM100 549h6v6h-6zM166 579h6v6h-6zM184 591h6v6h-6zM196 609h6v6h-6zM202 627h6v6h-6zM202 681h6v6h-6zM202 687h6v6h-6z"/><path fill="#505050" d="M232 213h6v6h-6zM274 225h6v6h-6zM202 267h6v6h-6zM256 279h6v6h-6zM490 357h6v6h-6zM460 363h6v6h-6zM334 369h6v6h-6zM316 375h6v6h-6zM184 387h6v6h-6zM268 405h6v6h-6zM304 405h6v6h-6zM280 417h6v6h-6zM292 417h6v6h-6zM28 453h6v6h-6zM154 477h6v6h-6zM28 531h6v6h-6zM52 537h6v6h-6zM118 555h6v6h-6zM130 561h6v6h-6zM142 567h6v6h-6zM154 573h6v6h-6zM202 633h6v6h-6zM202 639h6v6h-6zM202 669h6v6h-6zM202 675h6v6h-6z"/><path fill="#515151" d="M262 273h6v6h-6zM244 321h6v6h-6zM190 363h6v6h-6zM250 375h6v6h-6zM256 381h6v6h-6zM310 381h6v6h-6zM178 405h6v6h-6zM286 417h6v6h-6zM112 453h6v6h-6zM190 495h6v6h-6zM46 537h6v6h-6zM76 543h6v6h-6zM172 585h6v6h-6zM190 603h6v6h-6zM196 615h6v6h-6zM202 645h6v6h-6zM202 651h6v6h-6zM202 657h6v6h-6zM202 663h6v6h-6z"/><path fill="#525252" d="M196 285h6v6h-6zM184 309h6v6h-6zM244 333h6v6h-6zM244 369h6v6h-6zM328 369h6v6h-6zM178 411h6v6h-6zM274 411h6v6h-6zM208 453h6v6h-6zM208 477h6v6h-6zM172 495h6v6h-6zM40 537h6v6h-6zM94 549h6v6h-6zM160 579h6v6h-6zM178 591h6v6h-6zM184 597h6v6h-6z"/><path fill="#535353" d="M250 207h12v6h-12zM406 363h6v6h-6zM442 363h6v6h-6zM310 375h6v6h-6zM262 387h6v6h-6zM268 399h6v6h-6zM304 399h6v6h-6zM298 411h6v6h-6zM118 453h6v6h-6zM34 537h6v6h-6zM70 543h6v6h-6zM112 555h6v6h-6zM124 561h6v6h-6zM136 567h6v6h-6zM148 573h6v6h-6zM196 621h6v6h-6zM196 687h6v6h-6z"/><path fill="#545454" d="M268 213h6v6h-6zM208 249h6v6h-6zM484 357h6v6h-6zM454 363h6v6h-6zM322 369h6v6h-6zM190 375h6v6h-6zM304 375h6v6h-6zM304 381h6v6h-6zM304 387h6v6h-6zM304 393h6v6h-6zM136 459h6v6h-6zM160 483h6v6h-6zM196 489h6v6h-6zM178 495h12v6h-12zM64 543h6v6h-6zM154 579h6v6h-6zM166 585h6v6h-6zM190 609h6v6h-6zM196 627h6v6h-6zM196 675h6v6h-6zM196 681h6v6h-6z"/><path fill="#555555" d="M274 255h6v6h-6zM316 369h6v6h-6zM178 399h6v6h-6zM196 441h6v6h-6zM40 447h24v6h-24zM202 447h6v6h-6zM202 483h6v6h-6zM166 489h6v6h-6zM28 537h6v6h-6zM58 543h6v6h-6zM88 549h6v6h-6zM106 555h6v6h-6zM142 573h6v6h-6zM172 591h6v6h-6zM184 603h6v6h-6zM196 633h6v6h-6zM196 639h6v6h-6zM196 657h6v6h-6zM196 663h6v6h-6zM196 669h6v6h-6z"/><path fill="#565656" d="M244 207h6v6h-6zM184 351h6v6h-6zM244 363h6v6h-6zM190 369h6v6h-6zM304 369h12v6h-12zM256 375h6v6h-6zM268 393h6v6h-6zM274 405h6v6h-6zM280 411h6v6h-6zM190 435h6v6h-6zM34 447h6v6h-6zM64 447h6v6h-6zM208 459h6v6h-6zM208 471h6v6h-6zM52 543h6v6h-6zM130 567h6v6h-6zM160 585h6v6h-6zM178 597h6v6h-6zM190 615h6v6h-6zM196 645h6v6h-6zM196 651h6v6h-6z"/><path fill="#575757" d="M220 219h6v6h-6zM274 219h6v6h-6zM214 231h6v6h-6zM268 267h6v6h-6zM244 303h6v6h-6zM244 315h6v6h-6zM244 339h6v6h-6zM448 363h6v6h-6zM250 369h6v6h-6zM298 369h6v6h-6zM298 375h6v6h-6zM262 381h6v6h-6zM298 381h6v6h-6zM298 405h6v6h-6zM292 411h6v6h-6zM178 417h6v6h-6zM28 447h6v6h-6zM70 447h6v6h-6zM124 453h6v6h-6zM208 465h6v6h-6zM190 489h6v6h-6zM46 543h6v6h-6zM82 549h6v6h-6zM100 555h6v6h-6zM118 561h6v6h-6zM148 579h6v6h-6zM190 621h6v6h-6z"/><path fill="#585858" d="M262 207h6v6h-6zM226 213h6v6h-6zM196 279h6v6h-6zM190 297h6v6h-6zM502 351h6v6h-6zM478 357h6v6h-6zM298 387h6v6h-6zM286 411h6v6h-6zM184 429h6v6h-6zM76 447h6v6h-6zM40 543h6v6h-6zM76 549h6v6h-6zM136 573h6v6h-6zM166 591h6v6h-6zM184 609h6v6h-6zM190 681h6v6h-6zM190 687h6v6h-6z"/><path fill="#595959" d="M244 357h6v6h-6zM298 363h6v6h-6zM352 363h24v6h-24zM292 369h6v6h-6zM292 375h6v6h-6zM268 387h6v6h-6zM298 393h6v6h-6zM274 399h6v6h-6zM298 399h6v6h-6zM148 465h6v6h-6zM154 471h6v6h-6zM34 543h6v6h-6zM112 561h6v6h-6zM124 567h6v6h-6zM154 585h6v6h-6zM172 597h6v6h-6zM178 603h6v6h-6zM190 627h6v6h-6zM190 633h6v6h-6zM190 669h6v6h-6zM190 675h6v6h-6z"/><path fill="#5a5a5a" d="M244 345h6v6h-6zM244 351h6v6h-6zM304 363h6v6h-6zM346 363h6v6h-6zM376 363h6v6h-6zM400 363h6v6h-6zM184 381h6v6h-6zM292 381h6v6h-6zM280 405h6v6h-6zM82 447h6v6h-6zM202 477h6v6h-6zM196 483h6v6h-6zM172 489h6v6h-6zM184 489h6v6h-6zM28 543h6v6h-6zM64 549h12v6h-12zM94 555h6v6h-6zM142 579h6v6h-6zM160 591h6v6h-6zM184 615h6v6h-6zM190 639h6v6h-6zM190 645h6v6h-6zM190 651h6v6h-6zM190 657h6v6h-6zM190 663h6v6h-6z"/><path fill="#5b5b5b" d="M238 207h6v6h-6zM280 237h6v6h-6zM208 243h6v6h-6zM280 243h6v6h-6zM292 363h6v6h-6zM310 363h6v6h-6zM340 363h6v6h-6zM382 363h6v6h-6zM262 375h6v6h-6zM268 381h6v6h-6zM292 387h6v6h-6zM178 393h6v6h-6zM274 393h6v6h-6zM292 405h6v6h-6zM88 447h6v6h-6zM160 477h6v6h-6zM178 489h6v6h-6zM58 549h6v6h-6zM130 573h6v6h-6zM148 585h6v6h-6z"/><path fill="#5c5c5c" d="M250 291h6v6h-6zM244 309h6v6h-6zM496 351h6v6h-6zM472 357h6v6h-6zM250 363h6v6h-6zM316 363h24v6h-24zM256 369h6v6h-6zM292 393h6v6h-6zM280 399h6v6h-6zM292 399h6v6h-6zM286 405h6v6h-6zM130 453h6v6h-6zM202 453h6v6h-6zM142 459h6v6h-6zM166 483h6v6h-6zM46 549h12v6h-12zM88 555h6v6h-6zM106 561h6v6h-6zM118 567h6v6h-6zM166 597h6v6h-6zM172 603h6v6h-6zM178 609h6v6h-6zM184 621h6v6h-6zM184 681h6v6h-6zM184 687h6v6h-6z"/><path fill="#5d5d5d" d="M268 207h6v6h-6zM274 213h6v6h-6zM280 231h6v6h-6zM184 357h6v6h-6zM388 363h12v6h-12zM286 369h6v6h-6zM286 375h6v6h-6zM286 381h6v6h-6zM274 387h6v6h-6zM286 387h6v6h-6zM280 393h12v6h-12zM286 399h6v6h-6zM94 447h6v6h-6zM40 549h6v6h-6zM136 579h6v6h-6zM154 591h6v6h-6zM184 627h6v6h-6zM184 669h6v6h-6zM184 675h6v6h-6z"/><path fill="#5e5e5e" d="M268 375h6v6h-6zM274 381h12v6h-12zM280 387h6v6h-6zM178 423h6v6h-6zM28 441h24v6h-24zM100 447h6v6h-6zM28 549h12v6h-12zM82 555h6v6h-6zM100 561h6v6h-6zM124 573h6v6h-6zM142 585h6v6h-6zM160 597h6v6h-6zM178 615h6v6h-6zM184 633h6v6h-6zM184 639h6v6h-6zM184 645h6v6h-6zM184 651h6v6h-6zM184 657h6v6h-6zM184 663h6v6h-6z"/><path fill="#5f5f5f" d="M256 201h6v6h-6zM214 225h6v6h-6zM280 249h6v6h-6zM202 261h6v6h-6zM298 357h6v6h-6zM286 363h6v6h-6zM262 369h6v6h-6zM274 375h12v6h-12zM52 441h6v6h-6zM196 447h6v6h-6zM202 471h6v6h-6zM190 483h6v6h-6zM76 555h6v6h-6zM112 567h6v6h-6zM130 579h6v6h-6zM148 591h6v6h-6zM166 603h6v6h-6z"/><path fill="#606060" d="M250 201h6v6h-6zM262 201h6v6h-6zM232 207h6v6h-6zM280 225h6v6h-6zM274 261h6v6h-6zM184 303h6v6h-6zM490 351h6v6h-6zM250 357h6v6h-6zM292 357h6v6h-6zM304 357h6v6h-6zM256 363h6v6h-6zM280 369h6v6h-6zM58 441h6v6h-6zM190 441h6v6h-6zM106 447h6v6h-6zM64 555h12v6h-12zM94 561h6v6h-6zM172 609h6v6h-6zM178 621h6v6h-6zM178 681h6v6h-6zM178 687h6v6h-6z"/><path fill="#616161" d="M196 273h6v6h-6zM424 357h6v6h-6zM466 357h6v6h-6zM268 369h12v6h-12zM184 375h6v6h-6zM202 459h6v6h-6zM202 465h6v6h-6zM196 477h6v6h-6zM172 483h6v6h-6zM52 555h12v6h-12zM106 567h6v6h-6zM118 573h6v6h-6zM136 585h6v6h-6zM154 597h6v6h-6zM178 627h6v6h-6zM178 669h6v6h-6zM178 675h6v6h-6z"/><path fill="#626262" d="M268 201h6v6h-6zM274 207h6v6h-6zM220 213h6v6h-6zM250 351h6v6h-6zM310 357h6v6h-6zM418 357h6v6h-6zM184 363h6v6h-6zM280 363h6v6h-6zM64 441h6v6h-6zM112 447h6v6h-6zM136 453h6v6h-6zM154 465h6v6h-6zM160 471h6v6h-6zM184 483h6v6h-6zM40 555h12v6h-12zM88 561h6v6h-6zM124 579h6v6h-6zM142 591h6v6h-6zM160 603h6v6h-6zM172 615h6v6h-6zM178 633h6v6h-6zM178 639h6v6h-6zM178 645h6v6h-6zM178 651h6v6h-6zM178 657h6v6h-6zM178 663h6v6h-6z"/><path fill="#636363" d="M244 201h6v6h-6zM280 219h6v6h-6zM250 333h6v6h-6zM286 357h6v6h-6zM430 357h6v6h-6zM262 363h6v6h-6zM178 387h6v6h-6zM184 435h6v6h-6zM166 477h6v6h-6zM178 483h6v6h-6zM28 555h12v6h-12zM82 561h6v6h-6zM100 567h6v6h-6zM112 573h6v6h-6zM130 585h6v6h-6zM148 597h6v6h-6zM166 609h6v6h-6z"/><path fill="#646464" d="M226 207h6v6h-6zM208 237h6v6h-6zM250 339h6v6h-6zM250 345h6v6h-6zM484 351h6v6h-6zM256 357h6v6h-6zM316 357h6v6h-6zM268 363h12v6h-12zM184 369h6v6h-6zM70 441h6v6h-6zM148 459h6v6h-6zM76 561h6v6h-6zM136 591h6v6h-6zM154 603h6v6h-6zM172 621h6v6h-6zM172 681h6v6h-6zM172 687h6v6h-6z"/><path fill="#656565" d="M280 255h6v6h-6zM250 327h6v6h-6zM280 357h6v6h-6zM322 357h6v6h-6zM118 447h6v6h-6zM70 561h6v6h-6zM94 567h6v6h-6zM118 579h6v6h-6zM142 597h6v6h-6zM160 609h6v6h-6zM166 615h6v6h-6zM172 627h6v6h-6zM172 663h6v6h-6zM172 669h6v6h-6zM172 675h6v6h-6z"/><path fill="#666666" d="M262 195h12v6h-12zM274 201h6v6h-6zM214 219h6v6h-6zM502 345h6v6h-6zM298 351h6v6h-6zM412 357h6v6h-6zM436 357h6v6h-6zM460 357h6v6h-6zM172 411h6v6h-6zM178 429h6v6h-6zM28 435h6v6h-6zM76 441h6v6h-6zM196 453h6v6h-6zM190 477h6v6h-6zM52 561h18v6h-18zM106 573h6v6h-6zM124 585h6v6h-6zM148 603h6v6h-6zM172 633h6v6h-6zM172 639h6v6h-6zM172 645h6v6h-6zM172 651h6v6h-6zM172 657h6v6h-6z"/><path fill="#676767" d="M256 195h6v6h-6zM238 201h6v6h-6zM280 213h6v6h-6zM190 291h6v6h-6zM178 321h6v6h-6zM292 351h6v6h-6zM262 357h6v6h-6zM274 357h6v6h-6zM328 357h12v6h-12zM172 405h6v6h-6zM34 435h12v6h-12zM196 471h6v6h-6zM34 561h18v6h-18zM88 567h6v6h-6zM112 579h6v6h-6zM130 591h6v6h-6zM136 597h6v6h-6zM154 609h6v6h-6zM166 621h6v6h-6zM166 687h6v6h-6z"/><path fill="#686868" d="M274 195h6v6h-6zM178 315h6v6h-6zM256 351h6v6h-6zM304 351h6v6h-6zM268 357h6v6h-6zM340 357h6v6h-6zM46 435h6v6h-6zM82 441h6v6h-6zM124 447h6v6h-6zM190 447h6v6h-6zM142 453h6v6h-6zM172 477h6v6h-6zM28 561h6v6h-6zM82 567h6v6h-6zM100 573h6v6h-6zM118 585h6v6h-6zM142 603h6v6h-6zM160 615h6v6h-6zM166 627h6v6h-6zM166 669h6v6h-6zM166 675h6v6h-6zM166 681h6v6h-6z"/><path fill="#696969" d="M268 189h6v6h-6zM250 195h6v6h-6zM280 207h6v6h-6zM202 255h6v6h-6zM268 273h6v6h-6zM262 279h6v6h-6zM256 285h6v6h-6zM178 327h6v6h-6zM286 351h6v6h-6zM478 351h6v6h-6zM346 357h6v6h-6zM172 417h6v6h-6zM184 477h6v6h-6zM76 567h6v6h-6zM124 591h6v6h-6zM148 609h6v6h-6zM166 633h6v6h-6zM166 639h6v6h-6zM166 645h6v6h-6zM166 651h6v6h-6zM166 657h6v6h-6zM166 663h6v6h-6z"/><path fill="#6a6a6a" d="M274 189h6v6h-6zM232 201h6v6h-6zM220 207h6v6h-6zM250 297h6v6h-6zM250 321h6v6h-6zM178 339h6v6h-6zM256 345h6v6h-6zM496 345h6v6h-6zM310 351h6v6h-6zM352 357h6v6h-6zM442 357h6v6h-6zM454 357h6v6h-6zM172 399h6v6h-6zM52 435h6v6h-6zM88 441h6v6h-6zM154 459h6v6h-6zM196 459h6v6h-6zM160 465h6v6h-6zM196 465h6v6h-6zM166 471h6v6h-6zM178 477h6v6h-6zM70 567h6v6h-6zM94 573h6v6h-6zM106 579h6v6h-6zM130 597h6v6h-6zM136 603h6v6h-6zM154 615h6v6h-6zM160 621h6v6h-6z"/><path fill="#6b6b6b" d="M274 183h12v6h-12zM262 189h6v6h-6zM280 189h6v6h-6zM280 195h6v6h-6zM280 201h6v6h-6zM208 231h6v6h-6zM286 237h6v6h-6zM286 243h6v6h-6zM178 333h6v6h-6zM178 345h6v6h-6zM262 351h6v6h-6zM280 351h6v6h-6zM358 357h6v6h-6zM406 357h6v6h-6zM178 381h6v6h-6zM184 441h6v6h-6zM130 447h6v6h-6zM40 567h30v6h-30zM88 573h6v6h-6zM112 585h6v6h-6zM142 609h6v6h-6zM160 627h6v6h-6zM160 633h6v6h-6zM160 675h6v6h-6zM160 681h6v6h-6zM160 687h6v6h-6z"/><path fill="#6c6c6c" d="M280 177h6v6h-6zM268 183h6v6h-6zM244 195h6v6h-6zM214 213h6v6h-6zM286 249h6v6h-6zM196 267h6v6h-6zM274 267h6v6h-6zM268 351h12v6h-12zM448 357h6v6h-6zM58 435h6v6h-6zM190 471h6v6h-6zM28 567h12v6h-12zM100 579h6v6h-6zM118 591h6v6h-6zM124 597h6v6h-6zM130 603h6v6h-6zM148 615h6v6h-6zM154 621h6v6h-6zM160 639h6v6h-6zM160 645h6v6h-6zM160 651h6v6h-6zM160 657h6v6h-6zM160 663h6v6h-6zM160 669h6v6h-6z"/><path fill="#6d6d6d" d="M274 177h6v6h-6zM256 189h6v6h-6zM286 231h6v6h-6zM256 339h6v6h-6zM316 351h6v6h-6zM364 357h6v6h-6zM172 423h6v6h-6zM94 441h6v6h-6zM148 453h6v6h-6zM82 573h6v6h-6zM94 579h6v6h-6zM106 585h6v6h-6zM136 609h6v6h-6zM154 627h6v6h-6z"/><path fill="#6e6e6e" d="M286 177h6v6h-6zM226 201h6v6h-6zM286 225h6v6h-6zM280 261h6v6h-6zM178 309h6v6h-6zM490 345h6v6h-6zM178 351h6v6h-6zM472 351h6v6h-6zM370 357h6v6h-6zM28 429h6v6h-6zM64 435h6v6h-6zM178 435h6v6h-6zM190 453h6v6h-6zM172 471h6v6h-6zM70 573h12v6h-12zM112 591h6v6h-6zM118 597h6v6h-6zM142 615h6v6h-6zM148 621h6v6h-6zM154 633h6v6h-6zM154 639h6v6h-6zM154 681h6v6h-6zM154 687h6v6h-6z"/><path fill="#6f6f6f" d="M280 171h6v6h-6zM262 183h6v6h-6zM286 183h6v6h-6zM286 189h6v6h-6zM286 219h6v6h-6zM202 249h6v6h-6zM190 285h6v6h-6zM262 345h6v6h-6zM292 345h12v6h-12zM322 351h6v6h-6zM34 429h6v6h-6zM100 441h6v6h-6zM136 447h6v6h-6zM166 465h6v6h-6zM184 471h6v6h-6zM46 573h24v6h-24zM88 579h6v6h-6zM100 585h6v6h-6zM124 603h6v6h-6zM130 609h6v6h-6zM148 627h6v6h-6zM154 645h6v6h-6zM154 651h6v6h-6zM154 657h6v6h-6zM154 663h6v6h-6zM154 669h6v6h-6zM154 675h6v6h-6z"/><path fill="#707070" d="M274 171h6v6h-6zM286 171h6v6h-6zM268 177h6v6h-6zM250 189h6v6h-6zM238 195h6v6h-6zM286 195h6v6h-6zM286 201h6v6h-6zM286 207h6v6h-6zM286 213h6v6h-6zM208 225h6v6h-6zM256 333h6v6h-6zM286 345h6v6h-6zM304 345h6v6h-6zM376 357h6v6h-6zM400 357h6v6h-6zM172 393h6v6h-6zM184 447h6v6h-6zM160 459h6v6h-6zM190 459h6v6h-6zM190 465h6v6h-6zM178 471h6v6h-6zM28 573h18v6h-18zM82 579h6v6h-6zM106 591h6v6h-6zM136 615h6v6h-6zM142 621h6v6h-6zM148 633h6v6h-6z"/><path fill="#717171" d="M220 201h6v6h-6zM214 207h6v6h-6zM286 255h6v6h-6zM184 297h6v6h-6zM250 315h6v6h-6zM328 351h6v6h-6zM178 375h6v6h-6zM40 429h6v6h-6zM70 435h6v6h-6zM106 441h6v6h-6zM76 579h6v6h-6zM94 585h6v6h-6zM112 597h6v6h-6zM118 603h6v6h-6zM124 609h6v6h-6zM142 627h6v6h-6zM148 639h6v6h-6zM148 645h6v6h-6zM148 681h6v6h-6zM148 687h6v6h-6z"/><path fill="#727272" d="M232 195h6v6h-6zM502 339h6v6h-6zM268 345h6v6h-6zM280 345h6v6h-6zM310 345h6v6h-6zM178 357h6v6h-6zM382 357h6v6h-6zM46 429h6v6h-6zM172 429h6v6h-6zM154 453h6v6h-6zM70 579h6v6h-6zM88 585h6v6h-6zM100 591h6v6h-6zM130 615h6v6h-6zM136 621h6v6h-6zM142 633h6v6h-6zM148 651h6v6h-6zM148 657h6v6h-6zM148 663h6v6h-6zM148 669h6v6h-6zM148 675h6v6h-6z"/><path fill="#737373" d="M256 183h6v6h-6zM208 219h6v6h-6zM274 345h6v6h-6zM484 345h6v6h-6zM334 351h6v6h-6zM466 351h6v6h-6zM388 357h12v6h-12zM112 441h6v6h-6zM142 447h6v6h-6zM172 465h6v6h-6zM184 465h6v6h-6zM28 579h42v6h-42zM106 597h6v6h-6zM112 603h6v6h-6zM118 609h6v6h-6zM136 627h6v6h-6zM142 639h6v6h-6z"/><path fill="#747474" d="M280 165h6v6h-6zM268 171h6v6h-6zM262 177h6v6h-6zM292 183h6v6h-6zM244 189h6v6h-6zM202 243h6v6h-6zM250 303h6v6h-6zM262 339h6v6h-6zM178 363h6v6h-6zM178 369h6v6h-6zM76 435h6v6h-6zM178 441h6v6h-6zM184 453h6v6h-6zM166 459h6v6h-6zM178 465h6v6h-6zM82 585h6v6h-6zM94 591h6v6h-6zM124 615h6v6h-6zM130 621h6v6h-6zM136 633h6v6h-6zM142 645h6v6h-6zM142 651h6v6h-6zM142 657h6v6h-6zM142 663h6v6h-6zM142 669h6v6h-6zM142 675h6v6h-6zM142 681h6v6h-6zM142 687h6v6h-6z"/><path fill="#757575" d="M286 165h6v6h-6zM292 177h6v6h-6zM292 189h6v6h-6zM226 195h6v6h-6zM190 279h6v6h-6zM316 345h6v6h-6zM340 351h6v6h-6zM52 429h6v6h-6zM184 459h6v6h-6zM70 585h12v6h-12zM88 591h6v6h-6zM100 597h6v6h-6zM106 603h6v6h-6zM130 627h6v6h-6zM136 639h6v6h-6z"/><path fill="#767676" d="M274 165h6v6h-6zM292 171h6v6h-6zM292 195h6v6h-6zM214 201h6v6h-6zM208 213h6v6h-6zM292 249h6v6h-6zM250 309h6v6h-6zM256 327h6v6h-6zM172 387h6v6h-6zM28 423h6v6h-6zM172 435h6v6h-6zM118 441h6v6h-6zM148 447h6v6h-6zM178 447h6v6h-6zM160 453h6v6h-6zM58 585h12v6h-12zM112 609h6v6h-6zM118 615h6v6h-6zM124 621h6v6h-6zM136 645h6v6h-6z"/><path fill="#777777" d="M250 183h6v6h-6zM238 189h6v6h-6zM220 195h6v6h-6zM292 201h6v6h-6zM292 207h6v6h-6zM292 243h6v6h-6zM196 261h6v6h-6zM496 339h6v6h-6zM346 351h6v6h-6zM424 351h6v6h-6zM58 429h6v6h-6zM82 435h6v6h-6zM178 453h6v6h-6zM172 459h12v6h-12zM28 585h30v6h-30zM82 591h6v6h-6zM94 597h6v6h-6zM100 603h6v6h-6zM124 627h6v6h-6zM130 633h6v6h-6zM136 651h6v6h-6zM136 657h6v6h-6zM136 663h6v6h-6zM136 669h6v6h-6zM136 675h6v6h-6zM136 681h6v6h-6zM136 687h6v6h-6z"/><path fill="#787878" d="M256 177h6v6h-6zM208 207h6v6h-6zM292 213h6v6h-6zM292 255h6v6h-6zM286 261h6v6h-6zM292 339h18v6h-18zM322 345h6v6h-6zM478 345h6v6h-6zM418 351h6v6h-6zM430 351h6v6h-6zM460 351h6v6h-6zM34 423h6v6h-6zM124 441h6v6h-6zM166 453h6v6h-6zM70 591h12v6h-12zM88 597h6v6h-6zM106 609h6v6h-6zM112 615h6v6h-6zM118 621h6v6h-6zM130 639h6v6h-6zM130 645h6v6h-6z"/><path fill="#797979" d="M262 171h6v6h-6zM292 219h6v6h-6zM292 225h6v6h-6zM292 231h6v6h-6zM202 237h6v6h-6zM292 237h6v6h-6zM280 267h6v6h-6zM178 303h6v6h-6zM268 339h6v6h-6zM166 411h6v6h-6zM166 417h6v6h-6zM166 423h6v6h-6zM172 441h6v6h-6zM154 447h6v6h-6zM172 453h6v6h-6zM58 591h12v6h-12zM82 597h6v6h-6zM94 603h6v6h-6zM100 609h6v6h-6zM112 621h6v6h-6zM118 627h6v6h-6zM124 633h6v6h-6zM130 651h6v6h-6zM130 657h6v6h-6zM130 663h6v6h-6zM130 681h6v6h-6zM130 687h6v6h-6z"/><path fill="#7a7a7a" d="M280 159h6v6h-6zM268 165h6v6h-6zM292 165h6v6h-6zM232 189h6v6h-6zM214 195h6v6h-6zM274 273h6v6h-6zM256 291h6v6h-6zM262 333h6v6h-6zM286 339h6v6h-6zM310 339h6v6h-6zM328 345h6v6h-6zM352 351h6v6h-6zM436 351h6v6h-6zM40 423h6v6h-6zM64 429h6v6h-6zM88 435h6v6h-6zM130 441h6v6h-6zM160 447h6v6h-6zM172 447h6v6h-6zM28 591h30v6h-30zM76 597h6v6h-6zM88 603h6v6h-6zM106 615h6v6h-6zM124 639h6v6h-6zM124 645h6v6h-6zM130 669h6v6h-6zM130 675h6v6h-6z"/><path fill="#7b7b7b" d="M286 159h6v6h-6zM244 183h6v6h-6zM208 201h6v6h-6zM274 339h12v6h-12zM412 351h6v6h-6zM454 351h6v6h-6zM166 405h6v6h-6zM166 429h6v6h-6zM166 447h6v6h-6zM70 597h6v6h-6zM94 609h6v6h-6zM100 615h6v6h-6zM106 621h6v6h-6zM112 627h6v6h-6zM118 633h6v6h-6zM124 651h6v6h-6z"/><path fill="#7c7c7c" d="M298 183h6v6h-6zM226 189h6v6h-6zM298 189h6v6h-6zM202 231h6v6h-6zM190 273h6v6h-6zM490 339h6v6h-6zM442 351h6v6h-6zM172 381h6v6h-6zM46 423h6v6h-6zM166 435h6v6h-6zM136 441h6v6h-6zM166 441h6v6h-6zM58 597h12v6h-12zM82 603h6v6h-6zM112 633h6v6h-6zM118 639h6v6h-6zM118 645h6v6h-6zM124 657h6v6h-6zM124 663h6v6h-6zM124 669h6v6h-6zM124 675h6v6h-6zM124 681h6v6h-6zM124 687h6v6h-6z"/><path fill="#7d7d7d" d="M274 159h6v6h-6zM250 177h6v6h-6zM298 177h6v6h-6zM220 189h6v6h-6zM298 195h6v6h-6zM298 249h6v6h-6zM298 255h6v6h-6zM292 261h6v6h-6zM268 279h6v6h-6zM316 339h6v6h-6zM334 345h6v6h-6zM472 345h6v6h-6zM358 351h6v6h-6zM448 351h6v6h-6zM94 435h6v6h-6zM160 441h6v6h-6zM28 597h30v6h-30zM76 603h6v6h-6zM88 609h6v6h-6zM94 615h6v6h-6zM100 621h6v6h-6zM106 627h6v6h-6zM118 651h6v6h-6z"/><path fill="#7e7e7e" d="M292 159h6v6h-6zM238 183h6v6h-6zM208 195h6v6h-6zM298 201h6v6h-6zM202 225h6v6h-6zM184 291h6v6h-6zM172 321h6v6h-6zM256 321h6v6h-6zM502 333h6v6h-6zM28 417h6v6h-6zM70 429h6v6h-6zM142 441h18v6h-18zM64 603h12v6h-12zM82 609h6v6h-6zM88 615h6v6h-6zM106 633h6v6h-6zM112 639h6v6h-6zM112 645h6v6h-6zM118 657h6v6h-6zM118 663h6v6h-6zM118 669h6v6h-6zM118 675h6v6h-6zM118 681h6v6h-6zM118 687h6v6h-6z"/><path fill="#7f7f7f" d="M256 171h6v6h-6zM298 171h6v6h-6zM214 189h6v6h-6zM298 207h6v6h-6zM202 213h6v6h-6zM202 219h6v6h-6zM298 243h6v6h-6zM262 285h6v6h-6zM172 315h6v6h-6zM172 327h6v6h-6zM364 351h6v6h-6zM166 399h6v6h-6zM52 423h6v6h-6zM46 603h18v6h-18zM76 609h6v6h-6zM94 621h6v6h-6zM100 627h6v6h-6zM106 639h6v6h-6zM112 651h6v6h-6z"/><path fill="#808080" d="M262 165h6v6h-6zM202 207h6v6h-6zM298 213h6v6h-6zM196 255h6v6h-6zM304 255h6v6h-6zM298 261h6v6h-6zM172 333h6v6h-6zM304 333h12v6h-12zM172 339h6v6h-6zM322 339h6v6h-6zM484 339h6v6h-6zM340 345h6v6h-6zM406 351h6v6h-6zM34 417h6v6h-6zM100 435h6v6h-6zM160 435h6v6h-6zM28 603h18v6h-18zM64 609h12v6h-12zM82 615h6v6h-6zM88 621h6v6h-6zM94 627h6v6h-6zM100 633h6v6h-6zM106 645h6v6h-6zM112 657h6v6h-6zM112 663h6v6h-6zM112 669h6v6h-6zM112 675h6v6h-6zM112 681h6v6h-6zM112 687h6v6h-6z"/><path fill="#818181" d="M286 153h6v6h-6zM298 165h6v6h-6zM232 183h6v6h-6zM202 201h6v6h-6zM298 219h6v6h-6zM298 237h6v6h-6zM304 261h6v6h-6zM286 267h6v6h-6zM298 333h6v6h-6zM172 345h6v6h-6zM172 375h6v6h-6zM76 429h6v6h-6zM52 609h12v6h-12zM76 615h6v6h-6zM82 621h6v6h-6zM100 639h6v6h-6zM106 651h6v6h-6z"/><path fill="#828282" d="M280 153h6v6h-6zM268 159h6v6h-6zM244 177h6v6h-6zM208 189h6v6h-6zM298 225h6v6h-6zM298 231h6v6h-6zM304 249h6v6h-6zM268 333h6v6h-6zM316 333h6v6h-6zM328 339h6v6h-6zM466 345h6v6h-6zM172 351h6v6h-6zM370 351h6v6h-6zM58 423h6v6h-6zM160 429h6v6h-6zM106 435h6v6h-6zM28 609h24v6h-24zM64 615h12v6h-12zM88 627h6v6h-6zM94 633h6v6h-6zM100 645h6v6h-6zM106 657h6v6h-6zM106 663h6v6h-6zM106 669h6v6h-6zM106 675h6v6h-6zM106 681h6v6h-6zM106 687h6v6h-6z"/><path fill="#838383" d="M292 153h6v6h-6zM298 159h6v6h-6zM226 183h6v6h-6zM202 195h6v6h-6zM310 261h6v6h-6zM292 333h6v6h-6zM496 333h6v6h-6zM40 417h6v6h-6zM154 435h6v6h-6zM58 615h6v6h-6zM70 621h12v6h-12zM82 627h6v6h-6zM88 633h6v6h-6zM94 639h6v6h-6zM100 651h6v6h-6zM100 657h6v6h-6z"/><path fill="#848484" d="M250 171h6v6h-6zM220 183h6v6h-6zM304 189h6v6h-6zM304 195h6v6h-6zM310 255h6v6h-6zM190 267h6v6h-6zM292 267h6v6h-6zM172 309h6v6h-6zM262 327h6v6h-6zM346 345h6v6h-6zM376 351h6v6h-6zM400 351h6v6h-6zM172 357h6v6h-6zM172 369h6v6h-6zM166 393h6v6h-6zM160 423h6v6h-6zM34 615h24v6h-24zM64 621h6v6h-6zM76 627h6v6h-6zM82 633h6v6h-6zM88 639h6v6h-6zM94 645h6v6h-6zM94 651h6v6h-6zM100 663h6v6h-6zM100 669h6v6h-6zM100 675h6v6h-6zM100 681h6v6h-6zM100 687h6v6h-6z"/><path fill="#858585" d="M274 153h6v6h-6zM304 183h6v6h-6zM304 201h6v6h-6zM304 243h6v6h-6zM196 249h6v6h-6zM298 267h6v6h-6zM322 333h6v6h-6zM334 339h6v6h-6zM478 339h6v6h-6zM172 363h6v6h-6zM28 411h6v6h-6zM82 429h6v6h-6zM112 435h6v6h-6zM28 615h6v6h-6zM52 621h12v6h-12zM70 627h6v6h-6zM76 633h6v6h-6zM82 639h6v6h-6zM88 645h6v6h-6zM94 657h6v6h-6zM94 663h6v6h-6z"/><path fill="#868686" d="M298 153h6v6h-6zM256 165h6v6h-6zM238 177h6v6h-6zM304 177h6v6h-6zM214 183h6v6h-6zM304 207h6v6h-6zM310 249h6v6h-6zM304 267h6v6h-6zM280 273h6v6h-6zM178 297h6v6h-6zM310 327h6v6h-6zM274 333h6v6h-6zM286 333h6v6h-6zM460 345h6v6h-6zM382 351h6v6h-6zM394 351h6v6h-6zM46 417h6v6h-6zM64 423h6v6h-6zM148 435h6v6h-6zM34 621h18v6h-18zM64 627h6v6h-6zM70 633h6v6h-6zM82 645h6v6h-6zM88 651h6v6h-6zM94 669h6v6h-6zM94 675h6v6h-6zM94 681h6v6h-6zM94 687h6v6h-6z"/><path fill="#878787" d="M286 147h6v6h-6zM202 189h6v6h-6zM196 207h6v6h-6zM304 213h6v6h-6zM304 237h6v6h-6zM310 267h6v6h-6zM184 285h6v6h-6zM256 297h6v6h-6zM256 315h6v6h-6zM316 327h6v6h-6zM280 333h6v6h-6zM490 333h6v6h-6zM388 351h6v6h-6zM160 417h6v6h-6zM118 435h6v6h-6zM28 621h6v6h-6zM52 627h12v6h-12zM64 633h6v6h-6zM76 639h6v6h-6zM82 651h6v6h-6zM88 657h6v6h-6zM88 663h6v6h-6zM88 669h6v6h-6z"/><path fill="#888888" d="M292 147h6v6h-6zM262 159h6v6h-6zM304 171h6v6h-6zM208 183h6v6h-6zM196 201h6v6h-6zM196 213h6v6h-6zM304 219h6v6h-6zM196 243h6v6h-6zM304 327h6v6h-6zM328 333h6v6h-6zM352 345h6v6h-6zM424 345h12v6h-12zM34 411h6v6h-6zM124 435h6v6h-6zM142 435h6v6h-6zM28 627h24v6h-24zM58 633h6v6h-6zM70 639h6v6h-6zM76 645h6v6h-6zM76 651h6v6h-6zM82 657h6v6h-6zM82 663h6v6h-6zM88 675h6v6h-6zM88 681h6v6h-6zM88 687h6v6h-6z"/><path fill="#898989" d="M280 147h6v6h-6zM304 165h6v6h-6zM232 177h6v6h-6zM196 195h6v6h-6zM304 225h6v6h-6zM304 231h6v6h-6zM316 255h6v6h-6zM316 261h6v6h-6zM322 327h6v6h-6zM502 327h6v6h-6zM340 339h6v6h-6zM436 345h6v6h-6zM454 345h6v6h-6zM166 387h6v6h-6zM52 417h6v6h-6zM88 429h6v6h-6zM154 429h6v6h-6zM130 435h12v6h-12zM46 633h12v6h-12zM58 639h12v6h-12zM70 645h6v6h-6zM76 657h6v6h-6zM82 669h6v6h-6zM82 675h6v6h-6zM82 681h6v6h-6zM82 687h6v6h-6z"/><path fill="#8a8a8a" d="M298 147h6v6h-6zM268 153h6v6h-6zM304 159h6v6h-6zM244 171h6v6h-6zM196 219h6v6h-6zM196 237h6v6h-6zM310 243h6v6h-6zM472 339h6v6h-6zM418 345h6v6h-6zM160 411h6v6h-6zM70 423h6v6h-6zM28 633h18v6h-18zM52 639h6v6h-6zM58 645h12v6h-12zM70 651h6v6h-6zM70 657h6v6h-6zM76 663h6v6h-6zM76 669h6v6h-6z"/><path fill="#8b8b8b" d="M202 183h6v6h-6zM196 225h6v6h-6zM196 231h6v6h-6zM316 267h6v6h-6zM286 273h6v6h-6zM274 279h6v6h-6zM316 321h6v6h-6zM298 327h6v6h-6zM442 345h12v6h-12zM40 411h6v6h-6zM34 639h18v6h-18zM52 645h6v6h-6zM58 651h12v6h-12zM64 657h6v6h-6zM70 663h6v6h-6zM70 669h6v6h-6zM76 675h6v6h-6zM76 681h6v6h-6zM76 687h6v6h-6z"/><path fill="#8c8c8c" d="M304 153h6v6h-6zM226 177h6v6h-6zM196 189h6v6h-6zM310 189h6v6h-6zM310 195h6v6h-6zM310 201h6v6h-6zM316 249h6v6h-6zM190 261h6v6h-6zM298 273h18v6h-18zM172 303h6v6h-6zM310 321h6v6h-6zM322 321h6v6h-6zM328 327h6v6h-6zM334 333h6v6h-6zM484 333h6v6h-6zM358 345h6v6h-6zM28 405h6v6h-6zM28 639h6v6h-6zM40 645h12v6h-12zM52 651h6v6h-6zM58 657h6v6h-6zM64 663h6v6h-6zM70 675h6v6h-6zM70 681h6v6h-6zM70 687h6v6h-6z"/><path fill="#8d8d8d" d="M292 141h6v6h-6zM274 147h6v6h-6zM250 165h6v6h-6zM220 177h6v6h-6zM310 183h6v6h-6zM310 207h6v6h-6zM310 237h6v6h-6zM292 273h6v6h-6zM184 279h6v6h-6zM496 327h6v6h-6zM412 345h6v6h-6zM160 405h6v6h-6zM58 417h6v6h-6zM94 429h6v6h-6zM28 645h12v6h-12zM40 651h12v6h-12zM52 657h6v6h-6zM58 663h6v6h-6zM64 669h6v6h-6zM64 675h6v6h-6zM64 681h6v6h-6zM64 687h6v6h-6z"/><path fill="#8e8e8e" d="M286 141h6v6h-6zM298 141h6v6h-6zM304 147h6v6h-6zM214 177h6v6h-6zM310 213h6v6h-6zM316 273h6v6h-6zM256 303h6v6h-6zM256 309h6v6h-6zM268 327h6v6h-6zM346 339h6v6h-6zM466 339h6v6h-6zM166 381h6v6h-6zM76 423h6v6h-6zM154 423h6v6h-6zM148 429h6v6h-6zM28 651h12v6h-12zM40 657h12v6h-12zM52 663h6v6h-6zM52 669h12v6h-12zM58 675h6v6h-6zM58 681h6v6h-6z"/><path fill="#8f8f8f" d="M256 159h6v6h-6zM238 171h6v6h-6zM310 177h6v6h-6zM196 183h6v6h-6zM310 219h6v6h-6zM310 225h6v6h-6zM310 231h6v6h-6zM322 261h6v6h-6zM316 315h12v6h-12zM166 321h6v6h-6zM262 321h6v6h-6zM304 321h6v6h-6zM328 321h6v6h-6zM166 327h6v6h-6zM292 327h6v6h-6zM34 405h6v6h-6zM46 411h6v6h-6zM28 657h12v6h-12zM40 663h12v6h-12zM46 669h6v6h-6zM52 675h6v6h-6zM52 681h6v6h-6zM58 687h6v6h-6z"/><path fill="#909090" d="M208 177h6v6h-6zM190 195h6v6h-6zM190 201h6v6h-6zM190 207h6v6h-6zM316 243h6v6h-6zM322 255h6v6h-6zM322 267h6v6h-6zM310 279h6v6h-6zM166 315h6v6h-6zM334 327h6v6h-6zM166 333h6v6h-6zM340 333h6v6h-6zM364 345h6v6h-6zM100 429h6v6h-6zM28 663h12v6h-12zM40 669h6v6h-6zM46 675h6v6h-6zM46 681h6v6h-6zM52 687h6v6h-6z"/><path fill="#919191" d="M280 141h6v6h-6zM304 141h6v6h-6zM262 153h6v6h-6zM310 159h6v6h-6zM310 165h6v6h-6zM310 171h6v6h-6zM190 189h6v6h-6zM316 279h6v6h-6zM268 285h6v6h-6zM262 291h6v6h-6zM310 315h6v6h-6zM478 333h6v6h-6zM166 339h6v6h-6zM406 345h6v6h-6zM64 417h6v6h-6zM28 669h12v6h-12zM34 675h12v6h-12zM40 681h6v6h-6zM40 687h12v6h-12z"/><path fill="#929292" d="M310 153h6v6h-6zM232 171h6v6h-6zM202 177h6v6h-6zM190 213h6v6h-6zM190 255h6v6h-6zM184 273h6v6h-6zM322 273h6v6h-6zM304 279h6v6h-6zM178 291h6v6h-6zM322 309h6v6h-6zM328 315h6v6h-6zM502 321h6v6h-6zM490 327h6v6h-6zM460 339h6v6h-6zM166 345h6v6h-6zM166 375h6v6h-6zM160 399h6v6h-6zM52 411h6v6h-6zM28 675h6v6h-6zM28 681h12v6h-12zM34 687h6v6h-6z"/><path fill="#939393" d="M292 135h12v6h-12zM268 147h6v6h-6zM310 147h6v6h-6zM244 165h6v6h-6zM316 237h6v6h-6zM322 249h6v6h-6zM166 309h6v6h-6zM316 309h6v6h-6zM334 321h6v6h-6zM274 327h6v6h-6zM286 327h6v6h-6zM370 345h6v6h-6zM166 351h6v6h-6zM28 399h6v6h-6zM40 405h6v6h-6zM154 417h6v6h-6zM82 423h6v6h-6zM106 429h6v6h-6zM142 429h6v6h-6zM28 687h6v6h-6z"/><path fill="#949494" d="M286 135h6v6h-6zM196 177h6v6h-6zM190 183h6v6h-6zM316 189h6v6h-6zM316 195h6v6h-6zM316 201h6v6h-6zM316 207h6v6h-6zM280 279h6v6h-6zM298 279h6v6h-6zM322 279h6v6h-6zM310 285h12v6h-12zM322 303h6v6h-6zM328 309h6v6h-6zM352 339h6v6h-6zM400 345h6v6h-6zM166 357h6v6h-6zM166 369h6v6h-6z"/><path fill="#959595" d="M304 135h6v6h-6zM310 141h6v6h-6zM226 171h6v6h-6zM316 213h6v6h-6zM190 219h6v6h-6zM316 231h6v6h-6zM322 285h6v6h-6zM316 291h6v6h-6zM316 303h6v6h-6zM310 309h6v6h-6zM298 321h6v6h-6zM280 327h6v6h-6zM340 327h6v6h-6zM472 333h6v6h-6zM430 339h6v6h-6zM454 339h6v6h-6zM376 345h6v6h-6zM166 363h6v6h-6zM112 429h6v6h-6z"/><path fill="#969696" d="M274 141h6v6h-6zM316 183h6v6h-6zM316 219h6v6h-6zM316 225h6v6h-6zM322 243h6v6h-6zM190 249h6v6h-6zM328 267h6v6h-6zM322 291h6v6h-6zM172 297h6v6h-6zM316 297h12v6h-12zM328 303h6v6h-6zM304 315h6v6h-6zM334 315h6v6h-6zM484 327h6v6h-6zM346 333h6v6h-6zM424 339h6v6h-6zM436 339h18v6h-18zM160 393h6v6h-6zM34 399h6v6h-6zM70 417h6v6h-6zM148 423h6v6h-6zM136 429h6v6h-6z"/><path fill="#979797" d="M250 159h6v6h-6zM220 171h6v6h-6zM190 177h6v6h-6zM316 177h6v6h-6zM184 189h6v6h-6zM184 195h6v6h-6zM190 225h6v6h-6zM328 261h6v6h-6zM328 273h6v6h-6zM286 279h12v6h-12zM328 279h6v6h-6zM304 285h6v6h-6zM310 291h6v6h-6zM328 297h6v6h-6zM496 321h6v6h-6zM382 345h6v6h-6zM394 345h6v6h-6zM46 405h6v6h-6zM58 411h6v6h-6zM88 423h6v6h-6zM118 429h6v6h-6z"/><path fill="#989898" d="M298 129h6v6h-6zM310 135h6v6h-6zM214 171h6v6h-6zM316 171h6v6h-6zM184 183h6v6h-6zM184 201h6v6h-6zM190 231h6v6h-6zM190 237h6v6h-6zM190 243h6v6h-6zM328 255h6v6h-6zM184 267h6v6h-6zM328 285h6v6h-6zM328 291h6v6h-6zM310 303h6v6h-6zM334 309h6v6h-6zM418 339h6v6h-6zM388 345h6v6h-6zM124 429h12v6h-12z"/><path fill="#999999" d="M292 129h6v6h-6zM280 135h6v6h-6zM316 147h6v6h-6zM256 153h6v6h-6zM316 153h6v6h-6zM316 159h6v6h-6zM238 165h6v6h-6zM316 165h6v6h-6zM202 171h12v6h-12zM322 237h6v6h-6zM310 297h6v6h-6zM166 303h6v6h-6zM334 303h6v6h-6zM340 321h6v6h-6zM466 333h6v6h-6zM358 339h6v6h-6zM28 393h6v6h-6zM154 411h6v6h-6z"/><path fill="#9a9a9a" d="M304 129h6v6h-6zM196 171h6v6h-6zM184 177h6v6h-6zM184 207h6v6h-6zM178 285h6v6h-6zM334 297h6v6h-6zM262 315h6v6h-6zM40 399h6v6h-6z"/><path fill="#9b9b9b" d="M286 129h6v6h-6zM316 141h6v6h-6zM262 147h6v6h-6zM190 171h6v6h-6zM328 249h6v6h-6zM334 285h6v6h-6zM304 291h6v6h-6zM334 291h6v6h-6zM304 309h6v6h-6zM160 315h6v6h-6zM340 315h6v6h-6zM502 315h6v6h-6zM160 321h6v6h-6zM268 321h6v6h-6zM292 321h6v6h-6zM490 321h6v6h-6zM346 327h6v6h-6zM478 327h6v6h-6zM412 339h6v6h-6zM160 387h6v6h-6zM52 405h6v6h-6zM76 417h6v6h-6z"/><path fill="#9c9c9c" d="M310 129h6v6h-6zM322 195h6v6h-6zM322 201h6v6h-6zM322 207h6v6h-6zM322 231h6v6h-6zM334 273h6v6h-6zM334 279h6v6h-6zM298 285h6v6h-6zM340 309h6v6h-6zM160 327h6v6h-6zM352 333h6v6h-6zM460 333h6v6h-6zM34 393h6v6h-6zM64 411h6v6h-6zM94 423h6v6h-6z"/><path fill="#9d9d9d" d="M316 135h6v6h-6zM268 141h6v6h-6zM232 165h6v6h-6zM184 171h6v6h-6zM178 177h6v6h-6zM178 183h6v6h-6zM178 189h6v6h-6zM322 189h6v6h-6zM184 213h6v6h-6zM322 213h6v6h-6zM322 219h6v6h-6zM322 225h6v6h-6zM334 267h6v6h-6zM274 285h6v6h-6zM304 303h6v6h-6zM340 303h6v6h-6zM160 309h6v6h-6zM298 315h6v6h-6zM160 333h6v6h-6zM142 423h6v6h-6z"/><path fill="#9e9e9e" d="M298 123h6v6h-6zM244 159h6v6h-6zM178 195h6v6h-6zM328 243h6v6h-6zM184 261h6v6h-6zM334 261h6v6h-6zM178 279h6v6h-6zM262 297h6v6h-6zM304 297h6v6h-6zM340 297h6v6h-6zM454 333h6v6h-6zM160 339h6v6h-6zM364 339h6v6h-6zM28 387h6v6h-6zM46 399h6v6h-6zM154 405h6v6h-6zM148 417h6v6h-6z"/><path fill="#9f9f9f" d="M292 123h6v6h-6zM304 123h6v6h-6zM274 135h6v6h-6zM178 171h6v6h-6zM322 177h6v6h-6zM322 183h6v6h-6zM340 291h6v6h-6zM496 315h6v6h-6zM346 321h6v6h-6zM484 321h6v6h-6zM472 327h6v6h-6zM430 333h6v6h-6zM406 339h6v6h-6zM160 345h6v6h-6zM160 381h6v6h-6z"/><path fill="#a0a0a0" d="M280 129h6v6h-6zM316 129h6v6h-6zM322 171h6v6h-6zM178 201h6v6h-6zM184 219h6v6h-6zM334 255h6v6h-6zM292 285h6v6h-6zM340 285h6v6h-6zM286 321h6v6h-6zM436 333h18v6h-18zM160 351h6v6h-6zM40 393h6v6h-6zM58 405h6v6h-6zM82 417h6v6h-6zM100 423h6v6h-6z"/><path fill="#a1a1a1" d="M310 123h6v6h-6zM322 141h6v6h-6zM322 147h6v6h-6zM322 153h6v6h-6zM322 159h6v6h-6zM184 165h18v6h-18zM226 165h6v6h-6zM322 165h6v6h-6zM172 177h6v6h-6zM172 183h6v6h-6zM328 237h6v6h-6zM340 279h6v6h-6zM172 291h6v6h-6zM166 297h6v6h-6zM160 303h6v6h-6zM346 315h6v6h-6zM424 333h6v6h-6zM70 411h6v6h-6z"/><path fill="#a2a2a2" d="M286 123h6v6h-6zM250 153h6v6h-6zM178 165h6v6h-6zM202 165h6v6h-6zM172 171h6v6h-6zM172 189h6v6h-6zM184 225h6v6h-6zM340 273h6v6h-6zM298 291h6v6h-6zM262 309h6v6h-6zM298 309h6v6h-6zM346 309h6v6h-6zM274 321h6v6h-6zM352 327h6v6h-6zM466 327h6v6h-6zM370 339h6v6h-6zM400 339h6v6h-6zM160 357h6v6h-6zM160 375h6v6h-6zM34 387h6v6h-6zM136 423h6v6h-6z"/><path fill="#a3a3a3" d="M322 135h6v6h-6zM172 165h6v6h-6zM208 165h6v6h-6zM220 165h6v6h-6zM178 207h6v6h-6zM184 231h6v6h-6zM328 231h6v6h-6zM334 249h6v6h-6zM184 255h6v6h-6zM178 273h6v6h-6zM280 285h6v6h-6zM268 291h6v6h-6zM346 297h6v6h-6zM346 303h6v6h-6zM154 309h6v6h-6zM502 309h6v6h-6zM154 315h6v6h-6zM154 321h6v6h-6zM280 321h6v6h-6zM478 321h6v6h-6zM358 333h6v6h-6zM418 333h6v6h-6zM160 363h6v6h-6zM160 369h6v6h-6zM28 381h6v6h-6zM52 399h6v6h-6zM154 399h6v6h-6zM106 423h6v6h-6z"/><path fill="#a4a4a4" d="M298 117h6v6h-6zM316 123h6v6h-6zM238 159h6v6h-6zM214 165h6v6h-6zM166 171h6v6h-6zM166 177h6v6h-6zM172 195h6v6h-6zM184 237h6v6h-6zM340 267h6v6h-6zM286 285h6v6h-6zM346 291h6v6h-6zM262 303h6v6h-6zM490 315h6v6h-6zM376 339h6v6h-6z"/><path fill="#a5a5a5" d="M304 117h6v6h-6zM322 129h6v6h-6zM256 147h6v6h-6zM172 159h12v6h-12zM166 165h6v6h-6zM166 183h6v6h-6zM328 201h6v6h-6zM328 207h6v6h-6zM328 213h6v6h-6zM328 219h6v6h-6zM328 225h6v6h-6zM184 243h6v6h-6zM184 249h6v6h-6zM340 261h6v6h-6zM346 285h6v6h-6zM298 297h6v6h-6zM154 303h6v6h-6zM298 303h6v6h-6zM292 315h6v6h-6zM154 327h6v6h-6zM460 327h6v6h-6zM394 339h6v6h-6zM46 393h6v6h-6zM64 405h6v6h-6zM88 417h6v6h-6z"/><path fill="#a6a6a6" d="M292 117h6v6h-6zM310 117h6v6h-6zM262 141h6v6h-6zM166 159h6v6h-6zM184 159h6v6h-6zM328 195h6v6h-6zM334 243h6v6h-6zM160 297h6v6h-6zM352 321h6v6h-6zM154 333h6v6h-6zM382 339h12v6h-12zM40 387h6v6h-6zM76 411h6v6h-6zM148 411h6v6h-6zM112 423h6v6h-6zM130 423h6v6h-6z"/><path fill="#a7a7a7" d="M268 135h6v6h-6zM160 159h6v6h-6zM190 159h6v6h-6zM160 165h6v6h-6zM160 171h6v6h-6zM166 189h6v6h-6zM172 201h6v6h-6zM178 213h6v6h-6zM346 279h6v6h-6zM172 285h6v6h-6zM148 309h6v6h-6zM496 309h6v6h-6zM148 315h6v6h-6zM352 315h6v6h-6zM472 321h6v6h-6zM454 327h6v6h-6zM412 333h6v6h-6zM154 339h6v6h-6zM28 375h6v6h-6zM34 381h6v6h-6zM142 417h6v6h-6zM118 423h12v6h-12z"/><path fill="#a8a8a8" d="M280 123h6v6h-6zM274 129h6v6h-6zM166 153h6v6h-6zM154 159h6v6h-6zM160 177h6v6h-6zM328 189h6v6h-6zM340 255h6v6h-6zM178 267h6v6h-6zM148 303h6v6h-6zM268 315h6v6h-6zM484 315h6v6h-6zM430 327h24v6h-24zM154 393h6v6h-6zM58 399h6v6h-6z"/><path fill="#a9a9a9" d="M316 117h6v6h-6zM322 123h6v6h-6zM154 153h12v6h-12zM172 153h6v6h-6zM196 159h6v6h-6zM232 159h6v6h-6zM154 165h6v6h-6zM160 183h6v6h-6zM334 237h6v6h-6zM346 273h6v6h-6zM166 291h6v6h-6zM292 291h6v6h-6zM154 297h6v6h-6zM352 303h6v6h-6zM142 309h6v6h-6zM352 309h6v6h-6zM148 321h6v6h-6zM358 327h6v6h-6zM424 327h6v6h-6zM364 333h6v6h-6zM154 345h6v6h-6zM52 393h6v6h-6z"/><path fill="#aaaaaa" d="M286 117h6v6h-6zM328 135h6v6h-6zM328 141h6v6h-6zM328 147h6v6h-6zM178 153h6v6h-6zM244 153h6v6h-6zM148 159h6v6h-6zM154 171h6v6h-6zM328 183h6v6h-6zM166 195h6v6h-6zM178 219h6v6h-6zM346 267h6v6h-6zM352 291h6v6h-6zM352 297h6v6h-6zM142 303h6v6h-6zM502 303h6v6h-6zM142 315h6v6h-6zM466 321h6v6h-6zM148 327h6v6h-6zM406 333h6v6h-6zM46 387h6v6h-6zM94 417h6v6h-6z"/><path fill="#ababab" d="M298 111h12v6h-12zM154 147h6v6h-6zM148 153h6v6h-6zM148 165h6v6h-6zM328 171h6v6h-6zM154 177h6v6h-6zM328 177h6v6h-6zM160 189h6v6h-6zM172 207h6v6h-6zM340 249h6v6h-6zM172 279h6v6h-6zM148 297h6v6h-6zM136 309h6v6h-6zM490 309h6v6h-6zM136 315h6v6h-6zM478 315h6v6h-6zM142 321h6v6h-6zM154 351h6v6h-6zM28 369h6v6h-6zM34 375h6v6h-6zM40 381h6v6h-6zM70 405h6v6h-6z"/><path fill="#acacac" d="M310 111h6v6h-6zM328 129h6v6h-6zM148 147h6v6h-6zM160 147h12v6h-12zM142 153h6v6h-6zM184 153h6v6h-6zM328 153h6v6h-6zM142 159h6v6h-6zM202 159h6v6h-6zM328 165h6v6h-6zM148 171h6v6h-6zM154 183h6v6h-6zM178 225h6v6h-6zM334 231h6v6h-6zM178 261h6v6h-6zM352 285h6v6h-6zM160 291h6v6h-6zM136 303h6v6h-6zM130 309h6v6h-6zM292 309h6v6h-6zM130 315h6v6h-6zM418 327h6v6h-6zM148 333h6v6h-6zM154 387h6v6h-6zM82 411h6v6h-6z"/><path fill="#adadad" d="M292 111h6v6h-6zM322 117h6v6h-6zM226 159h6v6h-6zM328 159h6v6h-6zM142 165h6v6h-6zM148 177h6v6h-6zM166 201h6v6h-6zM178 231h6v6h-6zM346 261h6v6h-6zM352 279h6v6h-6zM154 291h6v6h-6zM142 297h6v6h-6zM130 303h6v6h-6zM124 309h6v6h-6zM124 315h6v6h-6zM286 315h6v6h-6zM136 321h6v6h-6zM358 321h6v6h-6zM460 321h6v6h-6zM370 333h6v6h-6zM154 357h6v6h-6zM28 363h6v6h-6zM64 399h6v6h-6zM148 405h6v6h-6z"/><path fill="#aeaeae" d="M316 111h6v6h-6zM142 147h6v6h-6zM172 147h6v6h-6zM250 147h6v6h-6zM136 153h6v6h-6zM136 159h6v6h-6zM208 159h6v6h-6zM136 165h6v6h-6zM142 171h6v6h-6zM154 189h6v6h-6zM160 195h6v6h-6zM172 213h6v6h-6zM334 225h6v6h-6zM340 243h6v6h-6zM274 291h6v6h-6zM292 297h6v6h-6zM496 303h6v6h-6zM130 321h6v6h-6zM454 321h6v6h-6zM142 327h6v6h-6zM400 333h6v6h-6zM148 339h6v6h-6zM34 369h6v6h-6zM40 375h6v6h-6zM58 393h6v6h-6zM136 417h6v6h-6z"/><path fill="#afafaf" d="M328 123h6v6h-6zM136 147h6v6h-6zM190 153h6v6h-6zM136 171h6v6h-6zM142 177h6v6h-6zM148 183h6v6h-6zM334 213h6v6h-6zM334 219h6v6h-6zM178 237h6v6h-6zM352 273h6v6h-6zM166 285h6v6h-6zM286 291h6v6h-6zM136 297h6v6h-6zM124 303h6v6h-6zM292 303h6v6h-6zM118 309h6v6h-6zM484 309h6v6h-6zM358 315h6v6h-6zM472 315h6v6h-6zM124 321h6v6h-6zM430 321h12v6h-12zM448 321h6v6h-6zM136 327h6v6h-6zM154 363h6v6h-6zM46 381h6v6h-6zM154 381h6v6h-6zM52 387h6v6h-6zM100 417h6v6h-6z"/><path fill="#b0b0b0" d="M280 117h6v6h-6zM274 123h6v6h-6zM142 141h18v6h-18zM178 147h6v6h-6zM130 153h6v6h-6zM130 159h6v6h-6zM214 159h12v6h-12zM130 165h6v6h-6zM166 207h6v6h-6zM334 207h6v6h-6zM178 255h6v6h-6zM346 255h6v6h-6zM148 291h6v6h-6zM130 297h6v6h-6zM268 297h6v6h-6zM358 309h6v6h-6zM118 315h6v6h-6zM274 315h6v6h-6zM442 321h6v6h-6zM130 327h6v6h-6zM364 327h6v6h-6zM412 327h6v6h-6zM142 333h6v6h-6zM376 333h6v6h-6zM148 345h6v6h-6zM28 357h6v6h-6zM154 369h6v6h-6z"/><path fill="#b1b1b1" d="M298 105h12v6h-12zM286 111h6v6h-6zM136 141h6v6h-6zM160 141h6v6h-6zM256 141h6v6h-6zM130 147h6v6h-6zM124 153h6v6h-6zM238 153h6v6h-6zM124 159h6v6h-6zM124 165h6v6h-6zM130 171h6v6h-6zM136 177h6v6h-6zM142 183h6v6h-6zM148 189h6v6h-6zM154 195h6v6h-6zM160 201h6v6h-6zM334 201h6v6h-6zM172 219h6v6h-6zM178 243h6v6h-6zM352 267h6v6h-6zM172 273h6v6h-6zM124 297h6v6h-6zM358 297h6v6h-6zM502 297h6v6h-6zM118 303h6v6h-6zM358 303h6v6h-6zM466 315h6v6h-6zM118 321h6v6h-6zM424 321h6v6h-6zM394 333h6v6h-6zM34 363h6v6h-6zM154 375h6v6h-6zM76 405h6v6h-6zM142 411h6v6h-6z"/><path fill="#b2b2b2" d="M310 105h6v6h-6zM322 111h6v6h-6zM328 117h6v6h-6zM268 129h6v6h-6zM262 135h6v6h-6zM130 141h6v6h-6zM166 141h6v6h-6zM124 147h6v6h-6zM118 153h6v6h-6zM196 153h6v6h-6zM118 159h6v6h-6zM124 171h6v6h-6zM130 177h6v6h-6zM136 183h6v6h-6zM142 189h6v6h-6zM340 237h6v6h-6zM178 249h6v6h-6zM142 291h6v6h-6zM280 291h6v6h-6zM358 291h6v6h-6zM490 303h6v6h-6zM112 309h6v6h-6zM268 309h6v6h-6zM478 309h6v6h-6zM112 315h6v6h-6zM280 315h6v6h-6zM124 327h6v6h-6zM136 333h6v6h-6zM382 333h12v6h-12zM28 351h6v6h-6zM40 369h6v6h-6zM88 411h6v6h-6z"/><path fill="#b3b3b3" d="M292 105h6v6h-6zM334 135h6v6h-6zM124 141h6v6h-6zM118 147h6v6h-6zM184 147h6v6h-6zM118 165h6v6h-6zM118 171h6v6h-6zM124 177h6v6h-6zM130 183h6v6h-6zM148 195h6v6h-6zM334 195h6v6h-6zM166 213h6v6h-6zM172 225h6v6h-6zM346 249h6v6h-6zM160 285h6v6h-6zM358 285h6v6h-6zM136 291h6v6h-6zM118 297h6v6h-6zM112 303h6v6h-6zM460 315h6v6h-6zM112 321h6v6h-6zM142 339h6v6h-6zM28 345h6v6h-6zM148 351h6v6h-6zM34 357h6v6h-6zM46 375h6v6h-6zM52 381h6v6h-6zM70 399h6v6h-6zM148 399h6v6h-6zM106 417h6v6h-6zM130 417h6v6h-6z"/><path fill="#b4b4b4" d="M316 105h6v6h-6zM334 129h6v6h-6zM130 135h24v6h-24zM118 141h6v6h-6zM172 141h6v6h-6zM334 141h6v6h-6zM112 147h6v6h-6zM112 153h6v6h-6zM112 159h6v6h-6zM112 165h6v6h-6zM136 189h6v6h-6zM154 201h6v6h-6zM160 207h6v6h-6zM340 231h6v6h-6zM352 261h6v6h-6zM166 279h6v6h-6zM358 279h6v6h-6zM130 291h6v6h-6zM112 297h6v6h-6zM106 309h6v6h-6zM106 315h6v6h-6zM364 321h6v6h-6zM118 327h6v6h-6zM406 327h6v6h-6zM130 333h6v6h-6zM40 363h6v6h-6zM58 387h6v6h-6zM64 393h6v6h-6z"/><path fill="#b5b5b5" d="M334 123h6v6h-6zM118 135h12v6h-12zM154 135h6v6h-6zM112 141h6v6h-6zM106 147h6v6h-6zM106 153h6v6h-6zM106 159h6v6h-6zM106 165h6v6h-6zM112 171h6v6h-6zM118 177h6v6h-6zM124 183h6v6h-6zM130 189h6v6h-6zM142 195h6v6h-6zM154 285h6v6h-6zM124 291h6v6h-6zM496 297h6v6h-6zM106 303h6v6h-6zM472 309h6v6h-6zM454 315h6v6h-6zM418 321h6v6h-6zM370 327h6v6h-6zM124 333h6v6h-6zM28 339h6v6h-6zM136 339h6v6h-6zM34 351h6v6h-6zM112 417h6v6h-6z"/><path fill="#b6b6b6" d="M328 111h6v6h-6zM112 135h6v6h-6zM100 141h12v6h-12zM178 141h6v6h-6zM100 147h6v6h-6zM334 147h6v6h-6zM100 153h6v6h-6zM100 159h6v6h-6zM100 165h6v6h-6zM106 171h6v6h-6zM112 177h6v6h-6zM118 183h6v6h-6zM124 189h6v6h-6zM334 189h6v6h-6zM136 195h6v6h-6zM148 201h6v6h-6zM166 219h6v6h-6zM172 231h6v6h-6zM346 243h6v6h-6zM172 267h6v6h-6zM358 273h6v6h-6zM148 285h6v6h-6zM118 291h6v6h-6zM106 297h6v6h-6zM100 303h6v6h-6zM268 303h6v6h-6zM484 303h6v6h-6zM100 309h6v6h-6zM364 315h6v6h-6zM442 315h12v6h-12zM106 321h6v6h-6zM28 327h6v6h-6zM112 327h6v6h-6zM28 333h6v6h-6zM34 345h6v6h-6zM142 345h6v6h-6zM40 357h6v6h-6zM148 357h6v6h-6zM46 369h6v6h-6zM118 417h12v6h-12z"/><path fill="#b7b7b7" d="M298 99h12v6h-12zM286 105h6v6h-6zM322 105h6v6h-6zM280 111h6v6h-6zM112 129h30v6h-30zM100 135h12v6h-12zM160 135h6v6h-6zM94 141h6v6h-6zM94 147h6v6h-6zM190 147h6v6h-6zM88 153h12v6h-12zM202 153h6v6h-6zM232 153h6v6h-6zM94 159h6v6h-6zM94 165h6v6h-6zM100 171h6v6h-6zM106 177h6v6h-6zM112 183h6v6h-6zM130 195h6v6h-6zM154 207h6v6h-6zM160 213h6v6h-6zM340 225h6v6h-6zM352 255h6v6h-6zM112 291h6v6h-6zM502 291h6v6h-6zM100 297h6v6h-6zM286 309h6v6h-6zM100 315h6v6h-6zM430 315h12v6h-12zM28 321h6v6h-6zM118 333h6v6h-6zM34 339h6v6h-6zM130 339h6v6h-6zM40 351h6v6h-6zM52 375h6v6h-6zM82 405h6v6h-6zM94 411h6v6h-6z"/><path fill="#b8b8b8" d="M310 99h6v6h-6zM334 117h6v6h-6zM100 129h12v6h-12zM142 129h6v6h-6zM94 135h6v6h-6zM166 135h6v6h-6zM88 141h6v6h-6zM82 147h12v6h-12zM244 147h6v6h-6zM82 153h6v6h-6zM82 159h12v6h-12zM88 165h6v6h-6zM88 171h12v6h-12zM94 177h12v6h-12zM106 183h6v6h-6zM334 183h6v6h-6zM112 189h12v6h-12zM142 201h6v6h-6zM172 237h6v6h-6zM358 267h6v6h-6zM136 285h12v6h-12zM106 291h6v6h-6zM286 297h6v6h-6zM490 297h6v6h-6zM94 303h6v6h-6zM364 303h6v6h-6zM28 309h6v6h-6zM94 309h6v6h-6zM364 309h6v6h-6zM466 309h6v6h-6zM28 315h6v6h-6zM100 321h6v6h-6zM34 327h6v6h-6zM106 327h6v6h-6zM400 327h6v6h-6zM34 333h6v6h-6zM40 345h6v6h-6zM46 363h6v6h-6zM58 381h6v6h-6zM148 393h6v6h-6z"/><path fill="#b9b9b9" d="M292 99h6v6h-6zM316 99h6v6h-6zM274 117h6v6h-6zM106 123h30v6h-30zM88 129h12v6h-12zM148 129h6v6h-6zM82 135h12v6h-12zM76 141h12v6h-12zM76 147h6v6h-6zM76 153h6v6h-6zM334 153h6v6h-6zM76 159h6v6h-6zM76 165h12v6h-12zM82 171h6v6h-6zM88 177h6v6h-6zM94 183h12v6h-12zM106 189h6v6h-6zM118 195h12v6h-12zM136 201h6v6h-6zM148 207h6v6h-6zM340 219h6v6h-6zM166 225h6v6h-6zM124 285h12v6h-12zM100 291h6v6h-6zM364 291h6v6h-6zM28 297h6v6h-6zM94 297h6v6h-6zM364 297h6v6h-6zM28 303h6v6h-6zM88 303h6v6h-6zM478 303h6v6h-6zM34 309h6v6h-6zM34 315h6v6h-6zM94 315h6v6h-6zM424 315h6v6h-6zM34 321h6v6h-6zM412 321h6v6h-6zM376 327h6v6h-6zM40 333h6v6h-6zM112 333h6v6h-6zM40 339h6v6h-6zM124 339h6v6h-6zM136 345h6v6h-6zM142 351h6v6h-6zM46 357h6v6h-6zM148 363h6v6h-6zM76 399h6v6h-6z"/><path fill="#bababa" d="M88 123h18v6h-18zM136 123h6v6h-6zM76 129h12v6h-12zM154 129h6v6h-6zM70 135h12v6h-12zM172 135h6v6h-6zM64 141h12v6h-12zM64 147h12v6h-12zM64 153h12v6h-12zM208 153h6v6h-6zM64 159h12v6h-12zM64 165h12v6h-12zM70 171h12v6h-12zM76 177h12v6h-12zM334 177h6v6h-6zM82 183h12v6h-12zM94 189h12v6h-12zM112 195h6v6h-6zM130 201h6v6h-6zM154 213h6v6h-6zM340 213h6v6h-6zM160 219h6v6h-6zM346 237h6v6h-6zM352 249h6v6h-6zM28 279h6v6h-6zM160 279h6v6h-6zM28 285h6v6h-6zM106 285h18v6h-18zM364 285h6v6h-6zM28 291h12v6h-12zM94 291h6v6h-6zM34 297h6v6h-6zM88 297h6v6h-6zM34 303h12v6h-12zM40 309h6v6h-6zM88 309h6v6h-6zM460 309h6v6h-6zM40 315h6v6h-6zM88 315h6v6h-6zM40 321h6v6h-6zM94 321h6v6h-6zM370 321h6v6h-6zM40 327h6v6h-6zM100 327h6v6h-6zM394 327h6v6h-6zM46 351h6v6h-6zM52 369h6v6h-6zM64 387h6v6h-6zM70 393h6v6h-6zM142 405h6v6h-6zM136 411h6v6h-6z"/><path fill="#bbbbbb" d="M328 105h6v6h-6zM334 111h6v6h-6zM88 117h42v6h-42zM76 123h12v6h-12zM142 123h6v6h-6zM268 123h6v6h-6zM64 129h12v6h-12zM58 135h12v6h-12zM58 141h6v6h-6zM184 141h6v6h-6zM52 147h12v6h-12zM52 153h12v6h-12zM46 159h18v6h-18zM334 159h6v6h-6zM46 165h18v6h-18zM52 171h18v6h-18zM334 171h6v6h-6zM58 177h18v6h-18zM64 183h18v6h-18zM82 189h12v6h-12zM100 195h12v6h-12zM124 201h6v6h-6zM142 207h6v6h-6zM172 243h6v6h-6zM172 261h6v6h-6zM358 261h6v6h-6zM28 267h6v6h-6zM28 273h12v6h-12zM166 273h6v6h-6zM34 279h6v6h-6zM364 279h6v6h-6zM34 285h12v6h-12zM94 285h12v6h-12zM40 291h12v6h-12zM82 291h12v6h-12zM496 291h6v6h-6zM40 297h12v6h-12zM76 297h12v6h-12zM46 303h6v6h-6zM76 303h12v6h-12zM286 303h6v6h-6zM472 303h6v6h-6zM46 309h6v6h-6zM82 309h6v6h-6zM454 309h6v6h-6zM46 315h6v6h-6zM82 315h6v6h-6zM46 321h6v6h-6zM46 327h6v6h-6zM382 327h6v6h-6zM46 333h6v6h-6zM46 339h6v6h-6zM118 339h6v6h-6zM46 345h6v6h-6zM52 363h6v6h-6z"/><path fill="#bcbcbc" d="M304 93h6v6h-6zM322 99h6v6h-6zM100 111h12v6h-12zM76 117h12v6h-12zM130 117h6v6h-6zM64 123h12v6h-12zM52 129h12v6h-12zM160 129h6v6h-6zM340 129h6v6h-6zM46 135h12v6h-12zM40 141h18v6h-18zM250 141h6v6h-6zM40 147h12v6h-12zM34 153h18v6h-18zM226 153h6v6h-6zM28 159h18v6h-18zM28 165h18v6h-18zM334 165h6v6h-6zM28 171h24v6h-24zM28 177h30v6h-30zM28 183h36v6h-36zM28 189h54v6h-54zM28 195h6v6h-6zM70 195h30v6h-30zM112 201h12v6h-12zM136 207h6v6h-6zM340 207h6v6h-6zM148 213h6v6h-6zM166 231h6v6h-6zM28 243h6v6h-6zM28 249h6v6h-6zM28 255h12v6h-12zM28 261h12v6h-12zM34 267h12v6h-12zM40 273h6v6h-6zM40 279h12v6h-12zM46 285h18v6h-18zM76 285h18v6h-18zM52 291h30v6h-30zM52 297h24v6h-24zM274 297h6v6h-6zM484 297h6v6h-6zM52 303h24v6h-24zM52 309h30v6h-30zM448 309h6v6h-6zM52 315h12v6h-12zM76 315h6v6h-6zM418 315h6v6h-6zM52 321h6v6h-6zM88 321h6v6h-6zM406 321h6v6h-6zM52 327h6v6h-6zM94 327h6v6h-6zM388 327h6v6h-6zM106 333h6v6h-6zM130 345h6v6h-6zM148 369h6v6h-6zM58 375h6v6h-6zM148 387h6v6h-6zM100 411h6v6h-6z"/><path fill="#bdbdbd" d="M298 93h6v6h-6zM310 93h6v6h-6zM286 99h6v6h-6zM70 111h30v6h-30zM112 111h12v6h-12zM58 117h18v6h-18zM136 117h6v6h-6zM46 123h18v6h-18zM148 123h6v6h-6zM340 123h6v6h-6zM40 129h12v6h-12zM262 129h6v6h-6zM34 135h12v6h-12zM178 135h6v6h-6zM256 135h6v6h-6zM340 135h6v6h-6zM28 141h12v6h-12zM28 147h12v6h-12zM196 147h6v6h-6zM28 153h6v6h-6zM214 153h12v6h-12zM34 195h36v6h-36zM28 201h84v6h-84zM28 207h30v6h-30zM124 207h12v6h-12zM28 213h24v6h-24zM142 213h6v6h-6zM28 219h18v6h-18zM154 219h6v6h-6zM28 225h18v6h-18zM160 225h6v6h-6zM28 231h12v6h-12zM346 231h6v6h-6zM28 237h18v6h-18zM34 243h12v6h-12zM34 249h12v6h-12zM172 249h6v6h-6zM40 255h6v6h-6zM40 261h12v6h-12zM46 267h12v6h-12zM46 273h18v6h-18zM364 273h6v6h-6zM52 279h72v6h-72zM154 279h6v6h-6zM64 285h12v6h-12zM502 285h6v6h-6zM274 309h6v6h-6zM442 309h6v6h-6zM64 315h12v6h-12zM370 315h6v6h-6zM58 321h12v6h-12zM76 321h12v6h-12zM52 333h6v6h-6zM52 339h6v6h-6zM112 339h6v6h-6zM52 345h6v6h-6zM52 351h6v6h-6zM136 351h6v6h-6zM52 357h6v6h-6zM142 357h6v6h-6zM88 405h6v6h-6z"/><path fill="#bebebe" d="M292 93h6v6h-6zM70 105h42v6h-42zM280 105h6v6h-6zM52 111h18v6h-18zM124 111h12v6h-12zM40 117h18v6h-18zM142 117h6v6h-6zM34 123h12v6h-12zM28 129h12v6h-12zM166 129h6v6h-6zM28 135h6v6h-6zM340 201h6v6h-6zM58 207h66v6h-66zM52 213h18v6h-18zM46 219h18v6h-18zM46 225h12v6h-12zM40 231h18v6h-18zM46 237h12v6h-12zM46 243h12v6h-12zM352 243h6v6h-6zM46 249h12v6h-12zM46 255h12v6h-12zM172 255h6v6h-6zM358 255h6v6h-6zM52 261h12v6h-12zM58 267h12v6h-12zM64 273h30v6h-30zM124 279h30v6h-30zM490 291h6v6h-6zM280 297h6v6h-6zM466 303h6v6h-6zM436 309h6v6h-6zM70 321h6v6h-6zM58 327h12v6h-12zM82 327h12v6h-12zM58 333h6v6h-6zM100 333h6v6h-6zM124 345h6v6h-6zM58 369h6v6h-6zM148 375h6v6h-6zM64 381h6v6h-6zM148 381h6v6h-6z"/><path fill="#bfbfbf" d="M316 93h6v6h-6zM76 99h24v6h-24zM328 99h6v6h-6zM52 105h18v6h-18zM112 105h12v6h-12zM334 105h6v6h-6zM40 111h12v6h-12zM28 117h12v6h-12zM340 117h6v6h-6zM28 123h6v6h-6zM154 123h6v6h-6zM340 141h6v6h-6zM70 213h24v6h-24zM130 213h12v6h-12zM64 219h12v6h-12zM148 219h6v6h-6zM58 225h12v6h-12zM58 231h12v6h-12zM58 237h6v6h-6zM166 237h6v6h-6zM58 243h6v6h-6zM58 249h12v6h-12zM58 255h12v6h-12zM64 261h12v6h-12zM70 267h18v6h-18zM364 267h6v6h-6zM94 273h18v6h-18zM478 297h6v6h-6zM280 309h6v6h-6zM370 309h6v6h-6zM430 309h6v6h-6zM376 321h6v6h-6zM70 327h12v6h-12zM64 333h6v6h-6zM94 333h6v6h-6zM58 339h6v6h-6zM58 363h6v6h-6zM70 387h6v6h-6z"/><path fill="#c0c0c0" d="M52 99h24v6h-24zM100 99h18v6h-18zM34 105h18v6h-18zM124 105h6v6h-6zM28 111h12v6h-12zM136 111h6v6h-6zM274 111h6v6h-6zM148 117h6v6h-6zM172 129h6v6h-6zM190 141h6v6h-6zM238 147h6v6h-6zM94 213h36v6h-36zM76 219h18v6h-18zM142 219h6v6h-6zM70 225h12v6h-12zM154 225h6v6h-6zM346 225h6v6h-6zM70 231h6v6h-6zM160 231h6v6h-6zM64 237h12v6h-12zM64 243h12v6h-12zM70 249h6v6h-6zM70 255h12v6h-12zM76 261h12v6h-12zM88 267h12v6h-12zM112 273h6v6h-6zM496 285h6v6h-6zM370 291h6v6h-6zM370 297h6v6h-6zM370 303h6v6h-6zM460 303h6v6h-6zM424 309h6v6h-6zM412 315h6v6h-6zM400 321h6v6h-6zM70 333h6v6h-6zM88 333h6v6h-6zM106 339h6v6h-6zM58 345h6v6h-6zM118 345h6v6h-6zM58 351h6v6h-6zM58 357h6v6h-6zM76 393h6v6h-6zM82 399h6v6h-6zM130 411h6v6h-6z"/><path fill="#c1c1c1" d="M298 87h12v6h-12zM52 93h54v6h-54zM322 93h6v6h-6zM28 99h24v6h-24zM118 99h6v6h-6zM28 105h6v6h-6zM130 105h6v6h-6zM142 111h6v6h-6zM340 111h6v6h-6zM160 123h6v6h-6zM340 195h6v6h-6zM94 219h12v6h-12zM136 219h6v6h-6zM82 225h12v6h-12zM76 231h12v6h-12zM76 237h6v6h-6zM76 243h6v6h-6zM76 249h12v6h-12zM82 255h6v6h-6zM88 261h6v6h-6zM100 267h6v6h-6zM166 267h6v6h-6zM118 273h6v6h-6zM160 273h6v6h-6zM370 285h6v6h-6zM484 291h6v6h-6zM472 297h6v6h-6zM454 303h6v6h-6zM76 333h12v6h-12zM64 339h6v6h-6zM100 339h6v6h-6zM130 351h6v6h-6zM64 375h6v6h-6zM142 399h6v6h-6zM106 411h6v6h-6z"/><path fill="#c2c2c2" d="M52 87h42v6h-42zM310 87h6v6h-6zM28 93h24v6h-24zM106 93h12v6h-12zM286 93h6v6h-6zM124 99h6v6h-6zM136 105h6v6h-6zM154 117h6v6h-6zM184 135h6v6h-6zM202 147h6v6h-6zM106 219h30v6h-30zM94 225h12v6h-12zM148 225h6v6h-6zM88 231h6v6h-6zM82 237h12v6h-12zM352 237h6v6h-6zM82 243h12v6h-12zM88 249h6v6h-6zM358 249h6v6h-6zM88 255h6v6h-6zM94 261h12v6h-12zM364 261h6v6h-6zM106 267h6v6h-6zM124 273h6v6h-6zM370 279h6v6h-6zM502 279h6v6h-6zM274 303h6v6h-6zM448 303h6v6h-6zM382 321h6v6h-6zM394 321h6v6h-6zM70 339h6v6h-6zM64 345h6v6h-6zM136 357h6v6h-6zM142 363h6v6h-6zM64 369h6v6h-6z"/><path fill="#c3c3c3" d="M52 81h36v6h-36zM28 87h24v6h-24zM94 87h18v6h-18zM292 87h6v6h-6zM118 93h6v6h-6zM130 99h6v6h-6zM280 99h6v6h-6zM334 99h6v6h-6zM148 111h6v6h-6zM166 123h6v6h-6zM340 147h6v6h-6zM346 219h6v6h-6zM106 225h6v6h-6zM142 225h6v6h-6zM94 231h12v6h-12zM154 231h6v6h-6zM94 237h6v6h-6zM94 243h6v6h-6zM166 243h6v6h-6zM94 249h6v6h-6zM94 255h6v6h-6zM106 261h6v6h-6zM112 267h6v6h-6zM130 273h6v6h-6zM370 273h6v6h-6zM490 285h6v6h-6zM466 297h6v6h-6zM442 303h6v6h-6zM418 309h6v6h-6zM376 315h6v6h-6zM406 315h6v6h-6zM388 321h6v6h-6zM76 339h24v6h-24zM112 345h6v6h-6zM64 351h6v6h-6zM124 351h6v6h-6zM64 357h6v6h-6zM64 363h6v6h-6zM70 381h6v6h-6zM94 405h6v6h-6z"/><path fill="#c4c4c4" d="M28 81h24v6h-24zM88 81h12v6h-12zM112 87h6v6h-6zM316 87h6v6h-6zM124 93h6v6h-6zM328 93h6v6h-6zM142 105h6v6h-6zM340 105h6v6h-6zM268 117h6v6h-6zM178 129h6v6h-6zM112 225h30v6h-30zM106 231h6v6h-6zM100 237h6v6h-6zM160 237h6v6h-6zM100 243h6v6h-6zM100 249h6v6h-6zM100 255h6v6h-6zM118 267h6v6h-6zM136 273h6v6h-6zM154 273h6v6h-6zM478 291h6v6h-6zM436 303h6v6h-6zM70 345h6v6h-6zM136 405h6v6h-6zM112 411h6v6h-6zM124 411h6v6h-6z"/><path fill="#c5c5c5" d="M28 75h66v6h-66zM100 81h12v6h-12zM298 81h6v6h-6zM118 87h6v6h-6zM130 93h6v6h-6zM136 99h6v6h-6zM154 111h6v6h-6zM160 117h6v6h-6zM346 123h6v6h-6zM340 189h6v6h-6zM346 213h6v6h-6zM112 231h6v6h-6zM148 231h6v6h-6zM106 237h6v6h-6zM106 243h6v6h-6zM358 243h6v6h-6zM106 249h6v6h-6zM106 255h6v6h-6zM364 255h6v6h-6zM112 261h6v6h-6zM124 267h6v6h-6zM370 267h6v6h-6zM142 273h12v6h-12zM496 279h6v6h-6zM460 297h6v6h-6zM280 303h6v6h-6zM430 303h6v6h-6zM76 345h6v6h-6zM106 345h6v6h-6zM70 351h6v6h-6zM76 387h6v6h-6zM118 411h6v6h-6z"/><path fill="#c6c6c6" d="M28 69h60v6h-60zM94 75h12v6h-12zM112 81h6v6h-6zM304 81h6v6h-6zM124 87h6v6h-6zM286 87h6v6h-6zM322 87h6v6h-6zM142 99h6v6h-6zM148 105h6v6h-6zM274 105h6v6h-6zM346 117h6v6h-6zM172 123h6v6h-6zM346 129h6v6h-6zM244 141h6v6h-6zM118 231h12v6h-12zM142 231h6v6h-6zM352 231h6v6h-6zM112 237h6v6h-6zM154 237h6v6h-6zM112 255h6v6h-6zM118 261h6v6h-6zM484 285h6v6h-6zM472 291h6v6h-6zM454 297h6v6h-6zM376 309h6v6h-6zM412 309h6v6h-6zM400 315h6v6h-6zM82 345h6v6h-6zM100 345h6v6h-6zM118 351h6v6h-6zM70 357h6v6h-6zM130 357h6v6h-6zM142 369h6v6h-6zM70 375h6v6h-6zM88 399h6v6h-6z"/><path fill="#c7c7c7" d="M28 63h54v6h-54zM88 69h12v6h-12zM106 75h6v6h-6zM118 81h6v6h-6zM292 81h6v6h-6zM310 81h6v6h-6zM130 87h6v6h-6zM136 93h6v6h-6zM280 93h6v6h-6zM334 93h6v6h-6zM346 111h6v6h-6zM166 117h6v6h-6zM196 141h6v6h-6zM208 147h6v6h-6zM232 147h6v6h-6zM130 231h12v6h-12zM118 237h6v6h-6zM112 243h6v6h-6zM112 249h6v6h-6zM166 249h6v6h-6zM166 261h6v6h-6zM370 261h6v6h-6zM130 267h6v6h-6zM502 273h6v6h-6zM376 285h6v6h-6zM376 291h6v6h-6zM376 297h6v6h-6zM376 303h6v6h-6zM424 303h6v6h-6zM382 315h6v6h-6zM88 345h12v6h-12zM76 351h6v6h-6zM70 363h6v6h-6zM70 369h6v6h-6zM82 393h6v6h-6zM142 393h6v6h-6z"/><path fill="#c8c8c8" d="M28 57h42v6h-42zM82 63h12v6h-12zM100 69h12v6h-12zM112 75h6v6h-6zM124 81h6v6h-6zM328 87h6v6h-6zM148 99h6v6h-6zM340 99h6v6h-6zM154 105h6v6h-6zM160 111h6v6h-6zM262 123h6v6h-6zM346 135h6v6h-6zM340 153h6v6h-6zM346 207h6v6h-6zM124 237h6v6h-6zM148 237h6v6h-6zM118 243h6v6h-6zM160 243h6v6h-6zM118 249h6v6h-6zM364 249h6v6h-6zM118 255h6v6h-6zM124 261h6v6h-6zM136 267h6v6h-6zM160 267h6v6h-6zM376 279h6v6h-6zM490 279h6v6h-6zM466 291h6v6h-6zM442 297h12v6h-12zM394 315h6v6h-6zM112 351h6v6h-6zM136 363h6v6h-6z"/><path fill="#c9c9c9" d="M34 51h30v6h-30zM70 57h18v6h-18zM94 63h12v6h-12zM112 69h6v6h-6zM118 75h6v6h-6zM298 75h12v6h-12zM130 81h6v6h-6zM286 81h6v6h-6zM316 81h6v6h-6zM136 87h6v6h-6zM142 93h6v6h-6zM346 105h6v6h-6zM184 129h6v6h-6zM190 135h6v6h-6zM250 135h6v6h-6zM340 183h6v6h-6zM352 225h6v6h-6zM130 237h18v6h-18zM358 237h6v6h-6zM124 243h6v6h-6zM124 255h6v6h-6zM166 255h6v6h-6zM130 261h6v6h-6zM376 273h6v6h-6zM478 285h6v6h-6zM436 297h6v6h-6zM418 303h6v6h-6zM406 309h6v6h-6zM388 315h6v6h-6zM82 351h6v6h-6zM76 357h6v6h-6zM124 357h6v6h-6zM76 381h6v6h-6zM100 405h6v6h-6z"/><path fill="#cacaca" d="M28 51h6v6h-6zM64 51h24v6h-24zM88 57h12v6h-12zM106 63h6v6h-6zM118 69h6v6h-6zM124 75h6v6h-6zM292 75h6v6h-6zM322 81h6v6h-6zM178 123h6v6h-6zM256 129h6v6h-6zM130 243h6v6h-6zM124 249h6v6h-6zM370 255h6v6h-6zM142 267h6v6h-6zM376 267h6v6h-6zM496 273h6v6h-6zM460 291h6v6h-6zM430 297h6v6h-6zM382 309h6v6h-6zM106 351h6v6h-6zM142 375h6v6h-6zM142 387h6v6h-6z"/><path fill="#cbcbcb" d="M28 45h54v6h-54zM88 51h12v6h-12zM100 57h12v6h-12zM112 63h6v6h-6zM124 69h6v6h-6zM130 75h6v6h-6zM310 75h6v6h-6zM136 81h6v6h-6zM142 87h6v6h-6zM280 87h6v6h-6zM334 87h6v6h-6zM148 93h6v6h-6zM340 93h6v6h-6zM154 99h6v6h-6zM274 99h6v6h-6zM160 105h6v6h-6zM166 111h6v6h-6zM268 111h6v6h-6zM172 117h6v6h-6zM346 141h6v6h-6zM214 147h6v6h-6zM226 147h6v6h-6zM136 243h6v6h-6zM154 243h6v6h-6zM130 249h6v6h-6zM130 255h6v6h-6zM136 261h6v6h-6zM148 267h12v6h-12zM502 267h6v6h-6zM484 279h6v6h-6zM472 285h6v6h-6zM454 291h6v6h-6zM382 303h6v6h-6zM412 303h6v6h-6zM400 309h6v6h-6zM88 351h18v6h-18zM76 363h6v6h-6zM76 369h6v6h-6zM76 375h6v6h-6zM142 381h6v6h-6z"/><path fill="#cccccc" d="M28 39h48v6h-48zM82 45h12v6h-12zM100 51h6v6h-6zM112 57h6v6h-6zM118 63h6v6h-6zM292 69h18v6h-18zM286 75h6v6h-6zM328 81h6v6h-6zM346 99h6v6h-6zM340 159h6v6h-6zM340 177h6v6h-6zM346 201h6v6h-6zM142 243h12v6h-12zM364 243h6v6h-6zM160 249h6v6h-6zM376 261h6v6h-6zM490 273h6v6h-6zM382 285h6v6h-6zM382 291h6v6h-6zM448 291h6v6h-6zM382 297h6v6h-6zM424 297h6v6h-6zM82 357h6v6h-6zM118 357h6v6h-6zM82 387h6v6h-6zM130 405h6v6h-6z"/><path fill="#cdcdcd" d="M28 33h42v6h-42zM76 39h12v6h-12zM94 45h12v6h-12zM106 51h6v6h-6zM118 57h6v6h-6zM124 63h6v6h-6zM130 69h6v6h-6zM136 75h6v6h-6zM316 75h6v6h-6zM142 81h6v6h-6zM148 87h6v6h-6zM154 93h6v6h-6zM352 111h6v6h-6zM352 117h6v6h-6zM352 123h6v6h-6zM220 147h6v6h-6zM352 219h6v6h-6zM136 249h6v6h-6zM136 255h6v6h-6zM142 261h6v6h-6zM160 261h6v6h-6zM382 279h6v6h-6zM478 279h6v6h-6zM466 285h6v6h-6zM442 291h6v6h-6zM418 297h6v6h-6zM406 303h6v6h-6zM388 309h12v6h-12zM130 363h6v6h-6zM88 393h6v6h-6zM94 399h6v6h-6zM136 399h6v6h-6zM106 405h6v6h-6z"/><path fill="#cecece" d="M28 27h36v6h-36zM70 33h18v6h-18zM88 39h12v6h-12zM106 45h6v6h-6zM112 51h6v6h-6zM130 63h6v6h-6zM292 63h12v6h-12zM286 69h6v6h-6zM310 69h6v6h-6zM322 75h6v6h-6zM280 81h6v6h-6zM340 87h6v6h-6zM160 99h6v6h-6zM166 105h6v6h-6zM202 141h6v6h-6zM358 231h6v6h-6zM142 249h6v6h-6zM154 249h6v6h-6zM370 249h6v6h-6zM160 255h6v6h-6zM496 267h6v6h-6zM382 273h6v6h-6zM460 285h6v6h-6zM436 291h6v6h-6zM388 303h6v6h-6zM88 357h6v6h-6zM82 363h6v6h-6zM136 369h6v6h-6z"/><path fill="#cfcfcf" d="M28 21h24v6h-24zM64 27h18v6h-18zM88 33h12v6h-12zM100 39h6v6h-6zM112 45h6v6h-6zM118 51h6v6h-6zM124 57h6v6h-6zM304 63h6v6h-6zM136 69h6v6h-6zM316 69h6v6h-6zM142 75h6v6h-6zM280 75h6v6h-6zM148 81h6v6h-6zM334 81h6v6h-6zM274 93h6v6h-6zM346 93h6v6h-6zM352 105h6v6h-6zM172 111h6v6h-6zM352 129h6v6h-6zM340 165h6v6h-6zM340 171h6v6h-6zM148 249h6v6h-6zM142 255h6v6h-6zM376 255h6v6h-6zM148 261h12v6h-12zM502 261h6v6h-6zM382 267h6v6h-6zM484 273h6v6h-6zM472 279h6v6h-6zM430 291h6v6h-6zM388 297h6v6h-6zM412 297h6v6h-6zM394 303h12v6h-12zM112 357h6v6h-6zM82 381h6v6h-6z"/><path fill="#d0d0d0" d="M52 21h24v6h-24zM82 27h12v6h-12zM100 33h6v6h-6zM106 39h12v6h-12zM118 45h6v6h-6zM124 51h6v6h-6zM130 57h6v6h-6zM292 57h18v6h-18zM136 63h6v6h-6zM286 63h6v6h-6zM310 63h6v6h-6zM142 69h6v6h-6zM328 75h6v6h-6zM154 87h6v6h-6zM160 93h6v6h-6zM178 117h6v6h-6zM184 123h6v6h-6zM238 141h6v6h-6zM346 195h6v6h-6zM352 213h6v6h-6zM364 237h6v6h-6zM148 255h12v6h-12zM490 267h6v6h-6zM388 285h6v6h-6zM454 285h6v6h-6zM388 291h6v6h-6zM424 291h6v6h-6zM406 297h6v6h-6zM94 357h18v6h-18zM124 363h6v6h-6zM82 369h6v6h-6zM82 375h6v6h-6zM124 405h6v6h-6z"/><path fill="#d1d1d1" d="M28 15h48v6h-48zM76 21h18v6h-18zM94 27h12v6h-12zM106 33h6v6h-6zM118 39h6v6h-6zM124 45h6v6h-6zM130 51h6v6h-6zM292 51h12v6h-12zM136 57h6v6h-6zM286 57h6v6h-6zM310 57h6v6h-6zM316 63h6v6h-6zM280 69h6v6h-6zM322 69h6v6h-6zM148 75h6v6h-6zM340 81h6v6h-6zM274 87h6v6h-6zM166 99h6v6h-6zM352 99h6v6h-6zM268 105h6v6h-6zM346 147h6v6h-6zM370 243h6v6h-6zM382 261h6v6h-6zM388 273h6v6h-6zM478 273h6v6h-6zM388 279h6v6h-6zM466 279h6v6h-6zM448 285h6v6h-6zM418 291h6v6h-6zM394 297h12v6h-12zM88 363h6v6h-6zM112 405h6v6h-6z"/><path fill="#d2d2d2" d="M28 9h42v6h-42zM76 15h12v6h-12zM94 21h6v6h-6zM106 27h6v6h-6zM112 33h6v6h-6zM124 39h6v6h-6zM292 45h12v6h-12zM286 51h6v6h-6zM304 51h6v6h-6zM142 63h6v6h-6zM280 63h6v6h-6zM148 69h6v6h-6zM328 69h6v6h-6zM334 75h6v6h-6zM154 81h6v6h-6zM346 87h6v6h-6zM172 105h6v6h-6zM262 117h6v6h-6zM190 129h6v6h-6zM196 135h6v6h-6zM352 135h6v6h-6zM358 225h6v6h-6zM376 249h6v6h-6zM502 255h6v6h-6zM496 261h6v6h-6zM388 267h6v6h-6zM460 279h6v6h-6zM436 285h12v6h-12zM394 291h6v6h-6zM412 291h6v6h-6zM88 387h6v6h-6zM118 405h6v6h-6z"/><path fill="#d3d3d3" d="M70 9h18v6h-18zM88 15h12v6h-12zM100 21h12v6h-12zM112 27h6v6h-6zM118 33h6v6h-6zM286 39h18v6h-18zM130 45h6v6h-6zM286 45h6v6h-6zM304 45h6v6h-6zM136 51h6v6h-6zM280 51h6v6h-6zM310 51h6v6h-6zM142 57h6v6h-6zM280 57h6v6h-6zM316 57h6v6h-6zM322 63h6v6h-6zM154 75h6v6h-6zM274 81h6v6h-6zM160 87h6v6h-6zM352 93h6v6h-6zM358 111h6v6h-6zM358 117h6v6h-6zM382 255h6v6h-6zM484 267h6v6h-6zM472 273h6v6h-6zM394 279h6v6h-6zM394 285h6v6h-6zM430 285h6v6h-6zM400 291h12v6h-12zM136 393h6v6h-6zM100 399h6v6h-6z"/><path fill="#d4d4d4" d="M88 9h12v6h-12zM100 15h12v6h-12zM112 21h6v6h-6zM118 27h6v6h-6zM124 33h6v6h-6zM286 33h18v6h-18zM130 39h6v6h-6zM280 39h6v6h-6zM304 39h6v6h-6zM136 45h6v6h-6zM280 45h6v6h-6zM310 45h6v6h-6zM142 51h6v6h-6zM316 51h6v6h-6zM322 57h6v6h-6zM148 63h6v6h-6zM328 63h6v6h-6zM274 69h6v6h-6zM334 69h6v6h-6zM274 75h6v6h-6zM340 75h6v6h-6zM346 81h6v6h-6zM166 93h6v6h-6zM358 105h6v6h-6zM178 111h6v6h-6zM346 189h6v6h-6zM352 207h6v6h-6zM388 261h6v6h-6zM490 261h6v6h-6zM394 273h6v6h-6zM454 279h6v6h-6zM400 285h6v6h-6zM418 285h12v6h-12zM94 363h6v6h-6zM118 363h6v6h-6zM88 369h6v6h-6zM136 375h6v6h-6zM94 393h6v6h-6z"/><path fill="#d5d5d5" d="M100 9h12v6h-12zM112 15h6v6h-6zM118 21h6v6h-6zM124 27h6v6h-6zM286 27h18v6h-18zM130 33h6v6h-6zM280 33h6v6h-6zM304 33h6v6h-6zM136 39h6v6h-6zM310 39h6v6h-6zM142 45h6v6h-6zM316 45h6v6h-6zM274 51h6v6h-6zM322 51h6v6h-6zM148 57h6v6h-6zM274 57h6v6h-6zM274 63h6v6h-6zM154 69h6v6h-6zM160 81h6v6h-6zM352 87h6v6h-6zM268 99h6v6h-6zM358 99h6v6h-6zM256 123h6v6h-6zM358 123h6v6h-6zM244 135h6v6h-6zM208 141h6v6h-6zM364 231h6v6h-6zM496 255h6v6h-6zM394 267h6v6h-6zM478 267h6v6h-6zM466 273h6v6h-6zM400 279h6v6h-6zM442 279h12v6h-12zM406 285h12v6h-12zM130 369h6v6h-6zM88 375h6v6h-6zM88 381h6v6h-6z"/><path fill="#d6d6d6" d="M112 9h6v6h-6zM118 15h6v6h-6zM124 21h6v6h-6zM286 21h18v6h-18zM130 27h6v6h-6zM280 27h6v6h-6zM304 27h12v6h-12zM136 33h6v6h-6zM310 33h6v6h-6zM142 39h6v6h-6zM274 39h6v6h-6zM316 39h6v6h-6zM274 45h6v6h-6zM322 45h6v6h-6zM148 51h6v6h-6zM328 57h6v6h-6zM154 63h6v6h-6zM334 63h6v6h-6zM340 69h6v6h-6zM160 75h6v6h-6zM166 87h6v6h-6zM172 99h6v6h-6zM358 219h6v6h-6zM370 237h6v6h-6zM376 243h6v6h-6zM382 249h6v6h-6zM502 249h6v6h-6zM388 255h6v6h-6zM484 261h6v6h-6zM400 273h6v6h-6zM460 273h6v6h-6zM406 279h6v6h-6zM430 279h12v6h-12zM100 363h6v6h-6zM112 363h6v6h-6zM130 399h6v6h-6z"/><path fill="#d7d7d7" d="M118 9h6v6h-6zM124 15h6v6h-6zM286 15h18v6h-18zM130 21h6v6h-6zM280 21h6v6h-6zM304 21h12v6h-12zM136 27h6v6h-6zM274 27h6v6h-6zM316 27h6v6h-6zM142 33h6v6h-6zM274 33h6v6h-6zM316 33h6v6h-6zM322 39h6v6h-6zM148 45h6v6h-6zM268 51h6v6h-6zM328 51h6v6h-6zM154 57h6v6h-6zM268 57h6v6h-6zM334 57h6v6h-6zM268 63h6v6h-6zM346 75h6v6h-6zM352 81h6v6h-6zM358 93h6v6h-6zM184 117h6v6h-6zM250 129h6v6h-6zM232 141h6v6h-6zM352 141h6v6h-6zM346 153h6v6h-6zM490 255h6v6h-6zM394 261h6v6h-6zM400 267h6v6h-6zM472 267h6v6h-6zM454 273h6v6h-6zM412 279h18v6h-18zM106 363h6v6h-6zM136 381h6v6h-6zM136 387h6v6h-6z"/><path fill="#d8d8d8" d="M124 9h12v6h-12zM286 9h18v6h-18zM130 15h6v6h-6zM280 15h6v6h-6zM304 15h12v6h-12zM136 21h6v6h-6zM274 21h6v6h-6zM316 21h6v6h-6zM142 27h6v6h-6zM268 33h6v6h-6zM322 33h6v6h-6zM148 39h6v6h-6zM268 39h6v6h-6zM328 39h6v6h-6zM268 45h6v6h-6zM328 45h6v6h-6zM154 51h6v6h-6zM334 51h6v6h-6zM340 63h6v6h-6zM160 69h6v6h-6zM268 69h6v6h-6zM346 69h6v6h-6zM166 81h6v6h-6zM172 93h6v6h-6zM268 93h6v6h-6zM178 105h6v6h-6zM364 105h6v6h-6zM364 111h6v6h-6zM358 129h6v6h-6zM352 201h6v6h-6zM388 249h6v6h-6zM496 249h6v6h-6zM394 255h6v6h-6zM478 261h6v6h-6zM466 267h6v6h-6zM406 273h6v6h-6zM448 273h6v6h-6zM94 369h6v6h-6zM94 387h6v6h-6zM106 399h6v6h-6z"/><path fill="#d9d9d9" d="M136 9h6v6h-6zM274 9h12v6h-12zM304 9h12v6h-12zM136 15h12v6h-12zM274 15h6v6h-6zM316 15h6v6h-6zM142 21h6v6h-6zM268 21h6v6h-6zM322 21h6v6h-6zM148 27h6v6h-6zM268 27h6v6h-6zM322 27h6v6h-6zM148 33h6v6h-6zM328 33h6v6h-6zM154 39h6v6h-6zM154 45h6v6h-6zM334 45h6v6h-6zM160 57h6v6h-6zM340 57h6v6h-6zM160 63h6v6h-6zM268 75h6v6h-6zM352 75h6v6h-6zM268 81h6v6h-6zM268 87h6v6h-6zM358 87h6v6h-6zM364 99h6v6h-6zM262 111h6v6h-6zM364 117h6v6h-6zM346 183h6v6h-6zM364 225h6v6h-6zM382 243h6v6h-6zM502 243h6v6h-6zM400 261h6v6h-6zM406 267h6v6h-6zM460 267h6v6h-6zM412 273h36v6h-36zM124 369h6v6h-6z"/><path fill="#dadada" d="M142 9h6v6h-6zM268 9h6v6h-6zM316 9h6v6h-6zM148 15h6v6h-6zM268 15h6v6h-6zM322 15h6v6h-6zM148 21h6v6h-6zM262 27h6v6h-6zM328 27h6v6h-6zM154 33h6v6h-6zM262 33h6v6h-6zM262 39h6v6h-6zM334 39h6v6h-6zM262 45h6v6h-6zM160 51h6v6h-6zM262 51h6v6h-6zM340 51h6v6h-6zM262 57h6v6h-6zM262 63h6v6h-6zM346 63h6v6h-6zM166 75h6v6h-6zM358 81h6v6h-6zM364 93h6v6h-6zM190 123h6v6h-6zM202 135h6v6h-6zM214 141h6v6h-6zM358 213h6v6h-6zM376 237h6v6h-6zM394 249h6v6h-6zM400 255h6v6h-6zM484 255h6v6h-6zM406 261h6v6h-6zM472 261h6v6h-6zM412 267h6v6h-6zM454 267h6v6h-6zM94 375h6v6h-6zM94 381h6v6h-6zM100 393h6v6h-6z"/><path fill="#dbdbdb" d="M148 9h6v6h-6zM262 9h6v6h-6zM322 9h6v6h-6zM154 15h6v6h-6zM262 15h6v6h-6zM328 15h6v6h-6zM154 21h6v6h-6zM262 21h6v6h-6zM328 21h6v6h-6zM154 27h6v6h-6zM334 27h6v6h-6zM160 33h6v6h-6zM334 33h6v6h-6zM160 39h6v6h-6zM340 39h6v6h-6zM160 45h6v6h-6zM340 45h6v6h-6zM256 51h6v6h-6zM256 57h6v6h-6zM346 57h6v6h-6zM166 63h6v6h-6zM166 69h6v6h-6zM352 69h6v6h-6zM172 87h6v6h-6zM178 99h6v6h-6zM184 111h6v6h-6zM196 129h6v6h-6zM226 141h6v6h-6zM370 231h6v6h-6zM502 237h6v6h-6zM388 243h6v6h-6zM496 243h6v6h-6zM490 249h6v6h-6zM478 255h6v6h-6zM466 261h6v6h-6zM418 267h12v6h-12zM442 267h12v6h-12zM100 369h6v6h-6zM124 399h6v6h-6z"/><path fill="#dcdcdc" d="M154 9h6v6h-6zM256 9h6v6h-6zM328 9h6v6h-6zM160 15h6v6h-6zM256 15h6v6h-6zM334 15h6v6h-6zM160 21h6v6h-6zM256 21h6v6h-6zM334 21h6v6h-6zM160 27h6v6h-6zM256 27h6v6h-6zM340 27h6v6h-6zM256 33h6v6h-6zM340 33h6v6h-6zM256 39h6v6h-6zM166 45h6v6h-6zM256 45h6v6h-6zM346 45h6v6h-6zM166 51h6v6h-6zM346 51h6v6h-6zM166 57h6v6h-6zM352 57h6v6h-6zM352 63h6v6h-6zM262 69h6v6h-6zM358 75h6v6h-6zM172 81h6v6h-6zM364 87h6v6h-6zM370 99h6v6h-6zM370 105h6v6h-6zM364 123h6v6h-6zM220 141h6v6h-6zM394 243h6v6h-6zM400 249h6v6h-6zM406 255h6v6h-6zM412 261h6v6h-6zM460 261h6v6h-6zM430 267h12v6h-12zM118 369h6v6h-6zM130 375h6v6h-6zM112 399h6v6h-6z"/><path fill="#dddddd" d="M160 9h6v6h-6zM250 9h6v6h-6zM334 9h6v6h-6zM166 15h6v6h-6zM250 15h6v6h-6zM166 21h6v6h-6zM250 21h6v6h-6zM340 21h6v6h-6zM166 27h6v6h-6zM250 27h6v6h-6zM166 33h6v6h-6zM250 33h6v6h-6zM346 33h6v6h-6zM166 39h6v6h-6zM250 39h6v6h-6zM346 39h6v6h-6zM244 45h12v6h-12zM244 51h12v6h-12zM352 51h6v6h-6zM244 57h12v6h-12zM256 63h6v6h-6zM358 69h6v6h-6zM172 75h6v6h-6zM364 81h6v6h-6zM370 93h6v6h-6zM370 111h6v6h-6zM358 135h6v6h-6zM346 159h6v6h-6zM352 195h6v6h-6zM382 237h6v6h-6zM490 243h6v6h-6zM484 249h6v6h-6zM412 255h6v6h-6zM472 255h6v6h-6zM418 261h12v6h-12zM454 261h6v6h-6zM106 369h6v6h-6zM118 399h6v6h-6z"/><path fill="#dedede" d="M166 9h12v6h-12zM238 9h12v6h-12zM340 9h6v6h-6zM172 15h6v6h-6zM238 15h12v6h-12zM340 15h6v6h-6zM172 21h6v6h-6zM238 21h12v6h-12zM346 21h6v6h-6zM172 27h6v6h-6zM238 27h12v6h-12zM346 27h6v6h-6zM172 33h6v6h-6zM238 33h12v6h-12zM172 39h6v6h-6zM238 39h12v6h-12zM352 39h6v6h-6zM172 45h6v6h-6zM238 45h6v6h-6zM352 45h6v6h-6zM172 51h6v6h-6zM238 51h6v6h-6zM172 57h6v6h-6zM238 57h6v6h-6zM358 57h6v6h-6zM172 63h6v6h-6zM250 63h6v6h-6zM358 63h6v6h-6zM172 69h6v6h-6zM262 75h6v6h-6zM364 75h6v6h-6zM370 87h6v6h-6zM178 93h6v6h-6zM262 105h6v6h-6zM370 117h6v6h-6zM352 147h6v6h-6zM346 177h6v6h-6zM364 219h6v6h-6zM502 231h6v6h-6zM496 237h6v6h-6zM400 243h6v6h-6zM406 249h6v6h-6zM478 249h6v6h-6zM418 255h6v6h-6zM466 255h6v6h-6zM430 261h24v6h-24zM112 369h6v6h-6zM100 375h6v6h-6zM130 393h6v6h-6z"/><path fill="#dfdfdf" d="M178 9h12v6h-12zM226 9h12v6h-12zM346 9h6v6h-6zM178 15h6v6h-6zM226 15h12v6h-12zM346 15h6v6h-6zM178 21h6v6h-6zM226 21h12v6h-12zM352 21h6v6h-6zM178 27h6v6h-6zM226 27h12v6h-12zM352 27h6v6h-6zM178 33h6v6h-6zM226 33h12v6h-12zM352 33h6v6h-6zM232 39h6v6h-6zM358 39h6v6h-6zM232 45h6v6h-6zM358 45h6v6h-6zM232 51h6v6h-6zM358 51h6v6h-6zM244 63h6v6h-6zM364 63h6v6h-6zM256 69h6v6h-6zM364 69h6v6h-6zM370 81h6v6h-6zM376 93h6v6h-6zM376 99h6v6h-6zM184 105h6v6h-6zM376 105h6v6h-6zM256 117h6v6h-6zM238 135h6v6h-6zM358 207h6v6h-6zM376 231h6v6h-6zM388 237h6v6h-6zM484 243h6v6h-6zM412 249h6v6h-6zM424 255h6v6h-6zM460 255h6v6h-6zM100 387h6v6h-6z"/><path fill="#e0e0e0" d="M190 9h36v6h-36zM352 9h6v6h-6zM184 15h42v6h-42zM352 15h6v6h-6zM184 21h12v6h-12zM214 21h12v6h-12zM358 21h6v6h-6zM184 27h6v6h-6zM220 27h6v6h-6zM358 27h6v6h-6zM184 33h6v6h-6zM220 33h6v6h-6zM358 33h6v6h-6zM178 39h6v6h-6zM226 39h6v6h-6zM178 45h6v6h-6zM226 45h6v6h-6zM364 45h6v6h-6zM178 51h6v6h-6zM226 51h6v6h-6zM364 51h6v6h-6zM232 57h6v6h-6zM364 57h6v6h-6zM238 63h6v6h-6zM370 63h6v6h-6zM370 69h6v6h-6zM370 75h6v6h-6zM262 81h6v6h-6zM178 87h6v6h-6zM376 87h6v6h-6zM376 111h6v6h-6zM364 129h6v6h-6zM370 225h6v6h-6zM502 225h6v6h-6zM496 231h6v6h-6zM394 237h6v6h-6zM490 237h6v6h-6zM406 243h6v6h-6zM418 249h6v6h-6zM472 249h6v6h-6zM430 255h30v6h-30zM100 381h6v6h-6zM106 393h6v6h-6z"/><path fill="#e1e1e1" d="M358 9h6v6h-6zM358 15h6v6h-6zM196 21h18v6h-18zM364 21h6v6h-6zM190 27h30v6h-30zM364 27h6v6h-6zM190 33h6v6h-6zM214 33h6v6h-6zM364 33h6v6h-6zM184 39h6v6h-6zM220 39h6v6h-6zM364 39h6v6h-6zM220 45h6v6h-6zM370 45h6v6h-6zM370 51h6v6h-6zM178 57h6v6h-6zM370 57h6v6h-6zM178 63h6v6h-6zM376 63h6v6h-6zM178 69h6v6h-6zM250 69h6v6h-6zM376 69h6v6h-6zM178 75h6v6h-6zM376 75h12v6h-12zM178 81h6v6h-6zM376 81h18v6h-18zM382 87h12v6h-12zM382 93h6v6h-6zM262 99h6v6h-6zM382 99h6v6h-6zM190 117h6v6h-6zM370 123h6v6h-6zM346 165h6v6h-6zM346 171h6v6h-6zM400 237h6v6h-6zM412 243h6v6h-6zM478 243h6v6h-6zM424 249h6v6h-6zM466 249h6v6h-6zM130 381h6v6h-6z"/><path fill="#e2e2e2" d="M364 9h6v6h-6zM364 15h6v6h-6zM370 21h6v6h-6zM370 27h6v6h-6zM196 33h18v6h-18zM370 33h6v6h-6zM190 39h6v6h-6zM208 39h12v6h-12zM370 39h12v6h-12zM184 45h6v6h-6zM376 45h6v6h-6zM184 51h6v6h-6zM220 51h6v6h-6zM376 51h6v6h-6zM226 57h6v6h-6zM376 57h12v6h-12zM232 63h6v6h-6zM382 63h6v6h-6zM382 69h12v6h-12zM256 75h6v6h-6zM388 75h6v6h-6zM394 81h6v6h-6zM262 87h6v6h-6zM394 87h6v6h-6zM262 93h6v6h-6zM388 93h6v6h-6zM382 105h6v6h-6zM376 117h6v6h-6zM208 135h6v6h-6zM502 219h6v6h-6zM496 225h6v6h-6zM382 231h6v6h-6zM490 231h6v6h-6zM406 237h6v6h-6zM484 237h6v6h-6zM418 243h6v6h-6zM472 243h6v6h-6zM430 249h12v6h-12zM454 249h12v6h-12zM106 375h6v6h-6zM124 375h6v6h-6zM130 387h6v6h-6z"/><path fill="#e3e3e3" d="M370 9h6v6h-6zM370 15h6v6h-6zM376 21h6v6h-6zM376 27h6v6h-6zM376 33h6v6h-6zM196 39h12v6h-12zM382 39h6v6h-6zM190 45h6v6h-6zM214 45h6v6h-6zM382 45h6v6h-6zM382 51h12v6h-12zM184 57h6v6h-6zM388 57h6v6h-6zM388 63h12v6h-12zM244 69h6v6h-6zM394 69h6v6h-6zM394 75h12v6h-12zM400 81h6v6h-6zM394 93h6v6h-6zM184 99h6v6h-6zM388 99h6v6h-6zM382 111h6v6h-6zM250 123h6v6h-6zM244 129h6v6h-6zM358 141h6v6h-6zM352 189h6v6h-6zM364 213h6v6h-6zM502 213h6v6h-6zM388 231h6v6h-6zM412 237h6v6h-6zM478 237h6v6h-6zM424 243h6v6h-6zM466 243h6v6h-6zM442 249h12v6h-12z"/><path fill="#e4e4e4" d="M376 9h6v6h-6zM376 15h12v6h-12zM382 21h6v6h-6zM382 27h12v6h-12zM382 33h12v6h-12zM388 39h6v6h-6zM196 45h18v6h-18zM388 45h12v6h-12zM190 51h6v6h-6zM214 51h6v6h-6zM394 51h6v6h-6zM220 57h6v6h-6zM394 57h12v6h-12zM184 63h6v6h-6zM226 63h6v6h-6zM400 63h6v6h-6zM238 69h6v6h-6zM400 69h12v6h-12zM406 75h6v6h-6zM406 81h6v6h-6zM400 87h6v6h-6zM400 93h6v6h-6zM394 99h6v6h-6zM388 105h6v6h-6zM196 123h6v6h-6zM358 201h6v6h-6zM496 219h6v6h-6zM376 225h6v6h-6zM490 225h6v6h-6zM394 231h6v6h-6zM484 231h6v6h-6zM418 237h6v6h-6zM430 243h12v6h-12zM460 243h6v6h-6zM112 375h6v6h-6zM106 387h6v6h-6zM112 393h6v6h-6zM124 393h6v6h-6z"/><path fill="#e5e5e5" d="M382 9h12v6h-12zM388 15h6v6h-6zM388 21h12v6h-12zM394 27h6v6h-6zM394 33h12v6h-12zM394 39h12v6h-12zM400 45h12v6h-12zM196 51h18v6h-18zM400 51h12v6h-12zM190 57h6v6h-6zM406 57h12v6h-12zM406 63h12v6h-12zM184 69h6v6h-6zM412 69h6v6h-6zM412 75h6v6h-6zM412 81h6v6h-6zM406 87h6v6h-6zM184 93h6v6h-6zM406 93h6v6h-6zM400 99h6v6h-6zM394 105h6v6h-6zM202 129h6v6h-6zM352 153h6v6h-6zM502 207h6v6h-6zM370 219h6v6h-6zM400 231h12v6h-12zM424 237h6v6h-6zM472 237h6v6h-6zM442 243h18v6h-18zM118 375h6v6h-6zM106 381h6v6h-6z"/><path fill="#e6e6e6" d="M394 9h6v6h-6zM394 15h12v6h-12zM400 21h12v6h-12zM400 27h12v6h-12zM406 33h12v6h-12zM406 39h12v6h-12zM412 45h12v6h-12zM412 51h12v6h-12zM214 57h6v6h-6zM418 57h6v6h-6zM418 63h12v6h-12zM418 69h12v6h-12zM184 75h6v6h-6zM250 75h6v6h-6zM418 75h6v6h-6zM184 81h6v6h-6zM418 81h6v6h-6zM184 87h6v6h-6zM412 87h12v6h-12zM412 93h6v6h-6zM406 99h6v6h-6zM190 111h6v6h-6zM388 111h6v6h-6zM382 117h6v6h-6zM376 123h6v6h-6zM370 129h6v6h-6zM364 135h6v6h-6zM502 201h6v6h-6zM496 213h6v6h-6zM490 219h6v6h-6zM484 225h6v6h-6zM412 231h12v6h-12zM478 231h6v6h-6zM430 237h12v6h-12zM460 237h12v6h-12zM118 393h6v6h-6z"/><path fill="#e7e7e7" d="M400 9h12v6h-12zM406 15h12v6h-12zM412 21h12v6h-12zM412 27h12v6h-12zM418 33h12v6h-12zM418 39h12v6h-12zM424 45h12v6h-12zM424 51h12v6h-12zM196 57h18v6h-18zM424 57h12v6h-12zM190 63h6v6h-6zM220 63h6v6h-6zM430 63h12v6h-12zM232 69h6v6h-6zM430 69h6v6h-6zM424 75h12v6h-12zM256 81h6v6h-6zM424 81h12v6h-12zM424 87h6v6h-6zM418 93h6v6h-6zM412 99h6v6h-6zM400 105h6v6h-6zM256 111h6v6h-6zM394 111h6v6h-6zM232 135h6v6h-6zM502 189h6v6h-6zM502 195h6v6h-6zM496 207h6v6h-6zM490 213h6v6h-6zM382 225h6v6h-6zM478 225h6v6h-6zM424 231h12v6h-12zM472 231h6v6h-6zM442 237h18v6h-18z"/><path fill="#e8e8e8" d="M412 9h18v6h-18zM418 15h12v6h-12zM424 21h12v6h-12zM424 27h18v6h-18zM430 33h18v6h-18zM430 39h18v6h-18zM436 45h18v6h-18zM436 51h18v6h-18zM436 57h18v6h-18zM502 57h6v6h-6zM442 63h12v6h-12zM496 63h12v6h-12zM190 69h6v6h-6zM436 69h18v6h-18zM496 69h12v6h-12zM436 75h18v6h-18zM496 75h12v6h-12zM436 81h12v6h-12zM496 81h12v6h-12zM430 87h12v6h-12zM496 87h12v6h-12zM424 93h12v6h-12zM496 93h12v6h-12zM418 99h12v6h-12zM496 99h12v6h-12zM406 105h12v6h-12zM496 105h12v6h-12zM400 111h6v6h-6zM496 111h12v6h-12zM388 117h6v6h-6zM496 117h12v6h-12zM496 123h12v6h-12zM496 129h12v6h-12zM214 135h6v6h-6zM496 135h12v6h-12zM496 141h12v6h-12zM496 147h12v6h-12zM502 153h6v6h-6zM502 159h6v6h-6zM502 165h6v6h-6zM502 171h6v6h-6zM502 177h6v6h-6zM352 183h6v6h-6zM502 183h6v6h-6zM496 195h6v6h-6zM496 201h6v6h-6zM364 207h6v6h-6zM484 219h6v6h-6zM388 225h36v6h-36zM436 231h12v6h-12zM460 231h12v6h-12zM112 381h6v6h-6zM124 381h6v6h-6zM112 387h6v6h-6z"/><path fill="#e9e9e9" d="M430 9h18v6h-18zM430 15h24v6h-24zM436 21h24v6h-24zM442 27h24v6h-24zM502 27h6v6h-6zM448 33h30v6h-30zM484 33h24v6h-24zM448 39h60v6h-60zM454 45h54v6h-54zM454 51h54v6h-54zM454 57h48v6h-48zM196 63h6v6h-6zM214 63h6v6h-6zM454 63h42v6h-42zM454 69h42v6h-42zM454 75h42v6h-42zM448 81h48v6h-48zM442 87h54v6h-54zM436 93h60v6h-60zM430 99h18v6h-18zM472 99h24v6h-24zM190 105h6v6h-6zM418 105h12v6h-12zM478 105h18v6h-18zM406 111h6v6h-6zM478 111h18v6h-18zM478 117h18v6h-18zM382 123h6v6h-6zM484 123h12v6h-12zM484 129h12v6h-12zM484 135h12v6h-12zM484 141h12v6h-12zM490 147h6v6h-6zM490 153h12v6h-12zM496 159h6v6h-6zM496 165h6v6h-6zM496 171h6v6h-6zM496 177h6v6h-6zM496 183h6v6h-6zM496 189h6v6h-6zM358 195h6v6h-6zM490 201h6v6h-6zM490 207h6v6h-6zM484 213h6v6h-6zM376 219h6v6h-6zM478 219h6v6h-6zM424 225h12v6h-12zM472 225h6v6h-6zM448 231h12v6h-12z"/><path fill="#eaeaea" d="M448 9h60v6h-60zM454 15h54v6h-54zM460 21h48v6h-48zM466 27h36v6h-36zM478 33h6v6h-6zM202 63h12v6h-12zM226 69h6v6h-6zM190 75h6v6h-6zM244 75h6v6h-6zM448 99h24v6h-24zM430 105h48v6h-48zM412 111h24v6h-24zM454 111h24v6h-24zM394 117h6v6h-6zM466 117h12v6h-12zM466 123h18v6h-18zM472 129h12v6h-12zM472 135h12v6h-12zM472 141h12v6h-12zM358 147h6v6h-6zM472 147h18v6h-18zM478 153h12v6h-12zM484 159h12v6h-12zM490 165h6v6h-6zM490 171h6v6h-6zM490 177h6v6h-6zM490 183h6v6h-6zM490 189h6v6h-6zM490 195h6v6h-6zM484 207h6v6h-6zM370 213h6v6h-6zM418 219h12v6h-12zM472 219h6v6h-6zM436 225h36v6h-36zM118 381h6v6h-6zM124 387h6v6h-6z"/><path fill="#ebebeb" d="M196 69h6v6h-6zM256 87h6v6h-6zM436 111h18v6h-18zM400 117h66v6h-66zM388 123h6v6h-6zM454 123h12v6h-12zM376 129h6v6h-6zM460 129h12v6h-12zM460 135h12v6h-12zM460 141h12v6h-12zM460 147h12v6h-12zM466 153h12v6h-12zM472 159h12v6h-12zM478 165h12v6h-12zM484 171h6v6h-6zM484 177h6v6h-6zM484 201h6v6h-6zM478 213h6v6h-6zM406 219h12v6h-12zM430 219h18v6h-18zM466 219h6v6h-6zM118 387h6v6h-6z"/><path fill="#ececec" d="M220 69h6v6h-6zM238 75h6v6h-6zM190 81h6v6h-6zM190 99h6v6h-6zM196 117h6v6h-6zM424 123h30v6h-30zM436 129h24v6h-24zM220 135h12v6h-12zM448 135h12v6h-12zM448 141h12v6h-12zM448 147h12v6h-12zM430 153h36v6h-36zM352 159h6v6h-6zM424 159h48v6h-48zM418 165h36v6h-36zM460 165h18v6h-18zM418 171h30v6h-30zM472 171h12v6h-12zM424 177h18v6h-18zM478 177h6v6h-6zM484 183h6v6h-6zM484 189h6v6h-6zM484 195h6v6h-6zM478 201h6v6h-6zM478 207h6v6h-6zM418 213h24v6h-24zM472 213h6v6h-6zM382 219h6v6h-6zM394 219h12v6h-12zM448 219h18v6h-18z"/><path fill="#ededed" d="M202 69h6v6h-6zM250 81h6v6h-6zM190 87h6v6h-6zM190 93h6v6h-6zM256 105h6v6h-6zM250 117h6v6h-6zM394 123h30v6h-30zM238 129h6v6h-6zM424 129h12v6h-12zM370 135h6v6h-6zM430 135h18v6h-18zM364 141h6v6h-6zM430 141h18v6h-18zM424 147h24v6h-24zM424 153h6v6h-6zM418 159h6v6h-6zM454 165h6v6h-6zM448 171h24v6h-24zM352 177h6v6h-6zM418 177h6v6h-6zM442 177h12v6h-12zM466 177h12v6h-12zM424 183h24v6h-24zM472 183h12v6h-12zM430 189h6v6h-6zM478 189h6v6h-6zM478 195h6v6h-6zM364 201h6v6h-6zM424 207h18v6h-18zM472 207h6v6h-6zM412 213h6v6h-6zM442 213h30v6h-30zM388 219h6v6h-6z"/><path fill="#eeeeee" d="M208 69h12v6h-12zM196 75h6v6h-6zM256 93h6v6h-6zM208 129h6v6h-6zM382 129h6v6h-6zM412 129h12v6h-12zM418 135h12v6h-12zM424 141h6v6h-6zM418 153h6v6h-6zM412 165h6v6h-6zM412 171h6v6h-6zM454 177h12v6h-12zM418 183h6v6h-6zM448 183h24v6h-24zM358 189h6v6h-6zM424 189h6v6h-6zM436 189h18v6h-18zM472 189h6v6h-6zM424 195h24v6h-24zM472 195h6v6h-6zM424 201h24v6h-24zM466 201h12v6h-12zM370 207h6v6h-6zM418 207h6v6h-6zM442 207h30v6h-30zM376 213h6v6h-6zM406 213h6v6h-6z"/><path fill="#efefef" d="M232 75h6v6h-6zM256 99h6v6h-6zM202 123h6v6h-6zM244 123h6v6h-6zM406 129h6v6h-6zM418 141h6v6h-6zM418 147h6v6h-6zM412 159h6v6h-6zM412 177h6v6h-6zM418 189h6v6h-6zM454 189h18v6h-18zM418 195h6v6h-6zM448 195h24v6h-24zM418 201h6v6h-6zM448 201h18v6h-18zM412 207h6v6h-6zM400 213h6v6h-6z"/><path fill="#f0f0f0" d="M388 129h18v6h-18zM412 135h6v6h-6zM412 141h6v6h-6zM412 153h6v6h-6zM352 165h6v6h-6zM412 183h6v6h-6zM412 201h6v6h-6zM406 207h6v6h-6zM382 213h6v6h-6zM394 213h6v6h-6z"/><path fill="#f1f1f1" d="M202 75h6v6h-6zM226 75h6v6h-6zM196 81h6v6h-6zM244 81h6v6h-6zM406 135h6v6h-6zM412 147h6v6h-6zM358 153h6v6h-6zM352 171h6v6h-6zM412 189h6v6h-6zM412 195h6v6h-6zM388 213h6v6h-6z"/><path fill="#f2f2f2" d="M196 111h6v6h-6zM376 135h6v6h-6zM406 141h6v6h-6zM406 165h6v6h-6zM406 171h6v6h-6zM364 195h6v6h-6zM406 201h6v6h-6zM400 207h6v6h-6z"/><path fill="#f3f3f3" d="M208 75h6v6h-6zM220 75h6v6h-6zM196 87h6v6h-6zM250 87h6v6h-6zM400 135h6v6h-6zM406 147h6v6h-6zM406 153h6v6h-6zM406 159h6v6h-6zM406 177h6v6h-6zM406 195h6v6h-6zM370 201h6v6h-6zM376 207h6v6h-6z"/><path fill="#f4f4f4" d="M214 75h6v6h-6zM382 135h6v6h-6zM394 135h6v6h-6zM370 141h6v6h-6zM364 147h6v6h-6zM358 183h6v6h-6zM406 183h6v6h-6zM406 189h6v6h-6zM394 207h6v6h-6z"/><path fill="#f5f5f5" d="M202 81h6v6h-6zM238 81h6v6h-6zM196 93h6v6h-6zM196 105h6v6h-6zM250 111h6v6h-6zM214 129h6v6h-6zM232 129h6v6h-6zM388 135h6v6h-6zM400 141h6v6h-6zM400 201h6v6h-6zM382 207h12v6h-12z"/><path fill="#f6f6f6" d="M196 99h6v6h-6zM400 195h6v6h-6z"/><path fill="#f7f7f7" d="M202 117h6v6h-6zM394 141h6v6h-6zM400 147h6v6h-6zM364 189h6v6h-6zM400 189h6v6h-6zM376 201h6v6h-6zM394 201h6v6h-6z"/><path fill="#f8f8f8" d="M208 81h6v6h-6zM232 81h6v6h-6zM250 93h6v6h-6zM208 123h6v6h-6zM400 153h6v6h-6zM358 159h6v6h-6zM400 159h6v6h-6zM400 165h6v6h-6zM400 171h6v6h-6zM400 177h6v6h-6zM400 183h6v6h-6zM370 195h6v6h-6zM388 201h6v6h-6z"/><path fill="#f9f9f9" d="M202 87h6v6h-6zM244 87h6v6h-6zM244 117h6v6h-6zM238 123h6v6h-6zM376 141h6v6h-6zM388 141h6v6h-6zM358 177h6v6h-6zM394 195h6v6h-6zM382 201h6v6h-6z"/><path fill="#fafafa" d="M214 81h6v6h-6zM226 81h6v6h-6zM220 129h12v6h-12zM382 141h6v6h-6zM394 147h6v6h-6z"/><path fill="#fbfbfb" d="M220 81h6v6h-6zM250 105h6v6h-6zM370 147h6v6h-6zM364 153h6v6h-6zM394 189h6v6h-6zM376 195h6v6h-6zM388 195h6v6h-6z"/><path fill="#fcfcfc" d="M250 99h6v6h-6zM394 153h6v6h-6zM358 165h6v6h-6zM394 183h6v6h-6zM382 195h6v6h-6z"/><path fill="#fdfdfd" d="M238 87h6v6h-6zM202 93h6v6h-6zM202 111h6v6h-6zM388 147h6v6h-6zM394 159h6v6h-6zM358 171h6v6h-6zM394 177h6v6h-6zM364 183h6v6h-6zM370 189h6v6h-6z"/><path fill="#fefefe" d="M208 87h6v6h-6zM394 165h6v6h-6zM394 171h6v6h-6zM388 189h6v6h-6z"/><path fill="#ffffff" d="M214 87h24v6h-24zM208 93h42v6h-42zM202 99h48v6h-48zM202 105h48v6h-48zM208 111h42v6h-42zM208 117h36v6h-36zM214 123h24v6h-24zM376 147h12v6h-12zM370 153h24v6h-24zM364 159h30v6h-30zM364 165h30v6h-30zM364 171h30v6h-30zM364 177h30v6h-30zM370 183h24v6h-24zM376 189h12v6h-12z"/></g></g>
</svg>
<div class="a" style="left:673px;top:1px;width:7px;height:674px;background:linear-gradient(90deg,#d2d2d2,#e8e8e8 30%,#e8e8e8 70%,#d0d0d0)"></div>
<div class="a" style="left:680px;top:1px;width:337px;height:674px;background:#d9d9d9;border-top:1px solid #e2e2e2"></div>
<div class="a hdr" style="left:680px;top:2px;width:337px;height:23px;border-radius:2px 0 0 0"></div>
<div class="a ttl" style="left:702px;top:7px">Maps</div>
<div class="a" style="left:680px;top:25px;width:337px;height:648px;border-left:1px solid #b4b4b4;border-top:1px solid #eeeeee;border-bottom:1px solid #a8a8a8;background:#d8d8d8"></div>
<div class="a" style="left:681px;top:26px;width:336px;height:606px;background:#dcdcdc;border-left:1px solid #ececec;border-top:2px solid #d2d2d2"></div>
<div class="a" style="left:682px;top:28px;width:323px;height:27px;background:#d6def6;border-bottom:1px solid #d6def6"></div>
<div class="a" style="left:683px;top:54px;width:320px;height:1px;background:#a9b1c9"></div>
<div class="a" style="left:723px;top:34px;color:#141428;font-size:11.3px;line-height:14px;white-space:nowrap">temperature_fahrenheit.tif</div>
<div class="a" style="left:1004px;top:26px;width:1px;height:606px;background:#e2e2e2"></div><div class="a" style="left:1005px;top:26px;width:12px;height:605px;background:linear-gradient(90deg,#a4a4a4 0,#c0c0c0 25%,#c8c8c8 50%,#bcbcbc 80%,#9c9c9c 100%)"></div>
<div class="a" style="left:0;top:675px;width:1017px;height:20px;background:#d9d9d9"></div>
<div class="a" style="left:2px;top:679px;color:#16162a;font-size:10.2px;line-height:13px;white-space:nowrap">Dinamica EGO Map Viewer</div>
<div class="a" style="left:0;top:695px;width:1017px;height:2px;background:#50555c"></div>
<div class="a" style="left:0;top:697px;width:1017px;height:2px;background:#d4d4d4"></div>
<div class="a" style="left:0;top:699px;width:1017px;height:2px;background:#585d64"></div>
<div class="a" style="left:0;top:701px;width:219px;height:2px;background:#e8eff3"></div>
<div class="a" style="left:219px;top:701px;width:798px;height:2px;background:#0b2b52"></div>
<svg class="a" style="left:0;top:0" width="42" height="675" viewBox="0 0 42 675">
<defs>
<linearGradient id="gDoc" x1="0" y1="0" x2="0" y2="1"><stop offset="0" stop-color="#bcd9ec"/><stop offset="1" stop-color="#e6f2fa"/></linearGradient>
<linearGradient id="gWin" x1="0" y1="0" x2="0" y2="1"><stop offset="0" stop-color="#cfcfcf"/><stop offset="1" stop-color="#f4f4f4"/></linearGradient>
<linearGradient id="gClap" x1="0" y1="0" x2="0" y2="1"><stop offset="0" stop-color="#3a3a3a"/><stop offset="1" stop-color="#7a7a7a"/></linearGradient>
<linearGradient id="gDoor" x1="0" y1="0" x2="0" y2="1"><stop offset="0" stop-color="#3c3c3c"/><stop offset="1" stop-color="#7c7c7c"/></linearGradient>
<radialGradient id="gLens" cx="0.4" cy="0.35" r="0.7"><stop offset="0" stop-color="#e8f6ff"/><stop offset="1" stop-color="#6cb6e8"/></radialGradient>
<pattern id="pChk" width="6" height="6" patternUnits="userSpaceOnUse" x="0.5" y="0.5"><rect width="6" height="6" fill="#d0e8fc"/><rect width="3" height="3" fill="#92c8f4"/><rect x="3" y="3" width="3" height="3" fill="#92c8f4"/></pattern>
</defs>
<!-- 1 new doc -->
<path d="M7.5 11.5h15.5l6.5 6.5v20.5h-22z" fill="url(#gDoc)" stroke="#1c7ec8" stroke-width="1.3"/>
<path d="M7.5 31.5h22v7h-22z" fill="#a9cde6"/>
<path d="M7.5 11.5h15.5l6.5 6.5v20.5h-22z" fill="none" stroke="#1c7ec8" stroke-width="1.3"/>
<path d="M23 11.5v6.5h6.5" fill="#fff" stroke="#1c7ec8" stroke-width="1"/>
<circle cx="28" cy="34" r="6.6" fill="#5aa820" stroke="#3d8a12" stroke-width="1"/>
<path d="M28 30v8M24 34h8" stroke="#fff" stroke-width="2.2"/>
<!-- 2 window + hand -->
<rect x="6.8" y="54.6" width="25.6" height="23.6" fill="url(#gWin)" stroke="#1a7ac8" stroke-width="1.5"/>
<rect x="7.6" y="55.4" width="24" height="22" fill="none" stroke="#fff" stroke-width="0.9"/>
<rect x="8" y="55.8" width="23.2" height="1.6" fill="#3a8ad0"/>
<path d="M22.5 50.6L35.8 49L35.8 58L29.6 61z" fill="#f0bc50" stroke="#d0962e" stroke-width="0.5"/>
<path d="M16.5 51.5L23.5 50.8L29.8 55L30 59.8L25.5 63.2L22.5 62.2L19.5 62.8L15.3 63.3Q13.6 63 14.2 61.6L19.2 55.4L16.2 53.6Q15.6 52 16.5 51.5z" fill="#f6c96a" stroke="#c88a2a" stroke-width="0.7"/>
<path d="M20.8 56.8l2 3.2M22.8 56.2l2.2 3.6M24.8 56l2.2 3.8" stroke="#fff2c8" stroke-width="0.8"/>
<!-- 3 map + floppy -->
<rect x="7.5" y="82.5" width="27" height="27.5" fill="#fff" stroke="#1c7ec8" stroke-width="1.4"/>
<path d="M9 84h24v24h-24z" fill="#8cd0f4"/>
<path d="M9 84h7l17 17v7h-24z" fill="#8cd84a"/>
<path d="M16 84h4l13 13v4z" fill="#f4d4a0"/>
<path d="M10 86l8 12" stroke="#e02020" stroke-width="1.5" stroke-dasharray="2 2"/>
<path d="M9.5 102q5-4 9.5-2" stroke="#8a8a8a" stroke-width="1.2" fill="none"/>
<path d="M19.5 95.5h15v14.5h-15z" fill="#fff" stroke="#1c7ec8" stroke-width="1.2"/>
<rect x="22" y="97" width="10" height="5" fill="#eef" stroke="#555" stroke-width="0.5"/>
<rect x="24" y="104.5" width="5" height="5" fill="#345"/>
<!-- 4 refresh -->
<path d="M6.1 115.1H18.9V127.9L15.8 125.4Q12.8 127.5 13.8 133Q15.5 136.2 20.4 136.6V142.8Q14 142.5 9.5 138Q6.3 134 6.6 128Q6.6 122 9.2 118.7Z" fill="#5aa8e4" stroke="#3478b4" stroke-width="0.7"/>
<path d="M20.9 113.1Q26.5 113.5 30.5 117.5Q34.8 122 34.8 129Q34.8 134.5 32.7 137.6L35.8 140.7H23V127.9L26.1 131.5Q28.6 130 28.6 127.9Q28.8 123.5 26 121.8Q23.8 120.8 20.9 120.8Z" fill="#5aa8e4" stroke="#3478b4" stroke-width="0.7"/>
<path d="M8 124Q8 119.5 10 117.5M22 114.5Q28 115 31.5 119.5Q33.5 122.5 33.5 127" fill="none" stroke="#c8e6fa" stroke-width="0.7"/>
<!-- 5 clapper -->
<path d="M8 145.5l27.5 3.8-1 5-27.5-3.8z" fill="#eee" stroke="#555" stroke-width="0.6"/>
<path d="M10 146l4 0.6-2 4.8-4-0.6zM18 147l4 0.6-2 4.8-4-0.6zM26 148.2l4 0.6-2 4.8-4-0.6z" fill="#333"/>
<rect x="6.7" y="156.5" width="26.6" height="17" fill="url(#gClap)" stroke="#2a2a2a" stroke-width="0.6"/>
<rect x="6.7" y="156.5" width="26.6" height="4.5" fill="#eee"/>
<path d="M8 156.5h4l-2 4.5h-4zM16 156.5h4l-2 4.5h-4zM24 156.5h4l-2 4.5h-4z" fill="#333"/>
<!-- 6 checker squares -->
<rect x="9.5" y="187" width="18" height="17" fill="url(#pChk)" stroke="#bfe0fc" stroke-width="1"/>
<rect x="14.8" y="191.5" width="18" height="17.5" fill="url(#pChk)" stroke="#bfe0fc" stroke-width="1"/>
<rect x="7" y="183.7" width="3" height="3" fill="#ddd"/><rect x="31.5" y="183.7" width="3" height="3" fill="#ddd"/>
<rect x="7" y="209" width="3" height="3" fill="#ddd"/><rect x="31.5" y="209" width="3" height="3" fill="#ddd"/>
<!-- 7 legend -->
<rect x="6.8" y="216" width="28.4" height="27.5" fill="#f2f2f2" stroke="#7c8ea0" stroke-width="1"/>
<rect x="9.3" y="219.5" width="6" height="5.5" fill="#6ab040" stroke="#3a7a20" stroke-width="0.8"/>
<rect x="9.3" y="227.8" width="6" height="5.5" fill="#f0a020" stroke="#b07010" stroke-width="0.8"/>
<rect x="9.3" y="235.8" width="6" height="5.5" fill="#3a8ad0" stroke="#1a5a98" stroke-width="0.8"/>
<path d="M17 222.3h8M27 222.3h5M17 230.5h3.5M22 230.5h6M29.5 230.5h2M17 238.5h4.5M23 238.5h4" stroke="#333" stroke-width="1"/>
<!-- 8 hummingbird -->
<rect x="8.6" y="249.5" width="12.8" height="12.8" fill="#d6d6da" stroke="#5a78a6" stroke-width="1"/>
<path d="M33.4 248.3Q26 251 24.2 259.5Q25.5 263.5 31 264.8Q34.5 256 33.4 248.3z" fill="#c4a880" stroke="#8a6a40" stroke-width="0.6"/>
<path d="M16.4 253.4Q15.8 256 19.5 259Q22.5 261.5 24.8 261L22 256Q18.5 252.5 16.4 253.4z" fill="#b89870" stroke="#7a5a30" stroke-width="0.6"/>
<path d="M14.3 267.2Q15.5 264.3 19 264.8Q24 264.3 27.5 266.2Q31.5 268.5 33.5 272.5Q35.2 275.2 33.8 276Q31.5 275 29.8 273.2Q24 272 19.5 270Q16 269.5 14.3 267.2z" fill="#3ab4c8" stroke="#2a8a60" stroke-width="0.7"/>
<circle cx="16.6" cy="265.6" r="0.7" fill="#000"/>
<path d="M6.3 276.4L14 268.2" stroke="#c02818" stroke-width="1.3"/>
<!-- 9 zoom extent -->
<path d="M6 285h6l-2 2 3 3-2 2-3-3-2 2zM31 285h-6l2 2-3 3 2 2 3-3 2 2zM6 308h6l-2-2 3-3-2-2-3 3-2-2z" fill="#4c9ad6" stroke="#2a78b8" stroke-width="0.5"/>
<path d="M24.5 303l9 9.5" stroke="#e8a020" stroke-width="3.6" stroke-linecap="round"/>
<circle cx="17.5" cy="297" r="8" fill="url(#gLens)" stroke="#e4e4e4" stroke-width="2"/>
<!-- 10 zoom in -->
<path d="M24.5 335l9 9" stroke="#e8a020" stroke-width="3.6" stroke-linecap="round"/>
<circle cx="17.5" cy="327.3" r="9" fill="url(#gLens)" stroke="#f4cc60" stroke-width="2"/>
<path d="M17.5 322.5v9.5M12.8 327.3h9.5" stroke="#1a5a98" stroke-width="2"/>
<!-- 11 zoom out -->
<path d="M24.5 367l9 9" stroke="#e8a020" stroke-width="3.6" stroke-linecap="round"/>
<circle cx="17.5" cy="359.1" r="9" fill="url(#gLens)" stroke="#f4cc60" stroke-width="2"/>
<path d="M12.8 359.1h9.5" stroke="#1a5a98" stroke-width="2"/>
<!-- 12 zoom box -->
<rect x="7" y="388.5" width="25.5" height="26" fill="#d8d8d8" stroke="#f0f0f0" stroke-width="0.8" stroke-dasharray="1 1"/>
<path d="M23 406l10.5 8.5" stroke="#e8a020" stroke-width="3.4" stroke-linecap="round"/>
<circle cx="16.9" cy="399.2" r="7.3" fill="url(#gLens)" stroke="#eeeeee" stroke-width="1.8"/>
<!-- 13 pan -->
<path d="M20.8 419.2l5 5h-3v7.5h7.5v-3l5 5-5 5v-3h-7.5v7.5h3l-5 5-5-5h3v-7.5h-7.5v3l-5-5 5-5v3h7.5v-7.5h-3z" fill="#5aa4e0" stroke="#3a84c0" stroke-width="0.7"/>
<!-- 14 toolbox -->
<path d="M12 460v-3.5h14v3.5" fill="none" stroke="#9a9a9a" stroke-width="1.4"/>
<rect x="6.3" y="460.5" width="26" height="18.5" fill="#d83a30" stroke="#a02018" stroke-width="0.8"/>
<rect x="6.3" y="460.5" width="26" height="3" fill="#f06050"/>
<rect x="10" y="465" width="3" height="3" fill="#f4f4f4"/>
<path d="M15 485l14-12" stroke="#4a9ad8" stroke-width="4" stroke-linecap="round"/>
<path d="M28 467a5 5 0 1 0 7 6l-3-1-1-3z" fill="#c8c8c8" stroke="#888" stroke-width="0.6"/>
<!-- 15 back triangle -->
<path d="M15.4 509.5l12.3-10v21.6z" fill="#5d7b94" stroke="#4a6478" stroke-width="0.6"/>
<!-- 16 color window -->
<rect x="6.8" y="534.5" width="28.4" height="27" fill="#fff" stroke="#2a88cc" stroke-width="1.2"/>
<rect x="7.4" y="535" width="27.2" height="4.5" fill="#3a90d0"/>
<clipPath id="cpW"><rect x="7.5" y="540" width="27" height="21"/></clipPath><g clip-path="url(#cpW)"><path d="M21 549.5L21.0 519.5L36.5 523.8Z" fill="#ffff40"/><path d="M21 549.5L36.0 523.5L47.3 535.0Z" fill="#ffc830"/><path d="M21 549.5L47.0 534.5L51.0 550.1Z" fill="#ff8c30"/><path d="M21 549.5L51.0 549.5L46.7 565.0Z" fill="#f04848"/><path d="M21 549.5L47.0 564.5L35.5 575.8Z" fill="#d02ab8"/><path d="M21 549.5L36.0 575.5L20.4 579.5Z" fill="#7a34e0"/><path d="M21 549.5L21.0 579.5L5.5 575.2Z" fill="#3a5ee0"/><path d="M21 549.5L6.0 575.5L-5.3 564.0Z" fill="#2a90f0"/><path d="M21 549.5L-5.0 564.5L-9.0 548.9Z" fill="#30ccc0"/><path d="M21 549.5L-9.0 549.5L-4.7 534.0Z" fill="#44d044"/><path d="M21 549.5L-5.0 534.5L6.5 523.2Z" fill="#a8e040"/><path d="M21 549.5L6.0 523.5L21.6 519.5Z" fill="#e8f040"/><circle cx="21" cy="549.5" r="5" fill="#fff" opacity="0.35"/></g>
<!-- 17 chain -->
<rect x="18.5" y="575" width="16.5" height="7" rx="3.5" transform="rotate(-36 26.7 578.5)" fill="none" stroke="#d0d0d0" stroke-width="2.2"/>
<rect x="6.5" y="588" width="16.5" height="7" rx="3.5" transform="rotate(-36 14.7 591.5)" fill="none" stroke="#d0d0d0" stroke-width="2.2"/>
<!-- 18 door -->
<rect x="12.8" y="612" width="15.5" height="25.5" fill="url(#gDoor)" stroke="#c8922a" stroke-width="1"/>
<path d="M28 612l7.5-2.8v29.8l-7.5-1.5z" fill="#d9a862" stroke="#b07a30" stroke-width="0.7"/>
<rect x="32" y="622" width="1.5" height="4" fill="#f4c040"/>
<path d="M6.4 637.8h28" stroke="#2e2e2e" stroke-width="1"/>
</svg>
<!-- MapView header icon -->
<svg class="a" style="left:47px;top:4px" width="16" height="16" viewBox="0 0 16 16">
<rect x="1.5" y="1.5" width="13" height="13" fill="#fff" stroke="#2a88cc" stroke-width="1.2"/>
<rect x="3" y="3" width="10" height="10" fill="#7ccc30"/>
<path d="M6 3h3l4 4v2z" fill="#f4dcb0"/><path d="M9 3h4v4z" fill="#80d0f4"/>
<circle cx="5" cy="5" r="1.2" fill="#e02020"/><circle cx="7" cy="7.5" r="1.2" fill="#e02020"/>
<path d="M3 12q3-3 6-1" stroke="#9a9ab8" stroke-width="1" fill="none"/>
</svg>
<!-- Maps header icon -->
<svg class="a" style="left:680px;top:2px" width="20" height="20" viewBox="0 0 20 20">
<path d="M7.2 11.2H14.8L19 16.3V17.5H3V16.3Z" fill="#3a8ad8" stroke="#2a6ab8" stroke-width="0.5"/>
<path d="M7.8 12.0H14.2L17.6 16.2H4.4Z" fill="#a6d6f8"/>
<path d="M7.5 14.3H14.5" stroke="#2a78d0" stroke-width="0.9"/>
<path d="M4.2 16.6L7.6 12.2M17.8 16.6L14.4 12.2" stroke="#e8f6ff" stroke-width="0.6"/>
<path d="M7.2 7.0H14.8L19 12.1V13.3H3V12.1Z" fill="#3a8ad8" stroke="#2a6ab8" stroke-width="0.5"/>
<path d="M7.8 7.8H14.2L17.6 12.0H4.4Z" fill="#a6d6f8"/>
<path d="M7.5 10.1H14.5" stroke="#2a78d0" stroke-width="0.9"/>
<path d="M4.2 12.4L7.6 8.0M17.8 12.4L14.4 8.0" stroke="#e8f6ff" stroke-width="0.6"/>
<path d="M7.2 2.8H14.8L19 7.9V9.1H3V7.9Z" fill="#3a8ad8" stroke="#2a6ab8" stroke-width="0.5"/>
<path d="M7.8 3.6H14.2L17.6 7.8H4.4Z" fill="#a6d6f8"/>
<path d="M7.5 5.9H14.5" stroke="#2a78d0" stroke-width="0.9"/>
<path d="M4.2 8.2L7.6 3.8M17.8 8.2L14.4 3.8" stroke="#e8f6ff" stroke-width="0.6"/>
</svg>
<!-- minimize / float -->
<div class="a" style="left:984px;top:16px;width:12px;height:2px;background:#e4e4e4"></div>
<svg class="a" style="left:1002px;top:7px" width="12" height="12" viewBox="0 0 12 12"><path d="M1.5 11c0-4 2-6.5 6-7l-1-1.5h4v4l-1.5-1c-3 0.5-5 2.5-6 5.5" fill="#e0e0e0"/></svg>
<!-- eye -->
<svg class="a" style="left:685px;top:34px" width="18" height="13" viewBox="0 0 18 13">
<path d="M1 6.5q8-8 16 0q-8 8-16 0z" fill="#fff" stroke="#d88a10" stroke-width="1.4"/>
<circle cx="9" cy="6.5" r="3.2" fill="#3a88c8"/><circle cx="9" cy="6.5" r="1.6" fill="#111"/>
</svg>
<svg class="a" style="left:709px;top:38px" width="10" height="7" viewBox="0 0 10 7"><path d="M1 1.5h8l-4 4z" fill="#f2f2f2" stroke="#6a6a6a" stroke-width="0.9"/></svg>
<!-- info / close -->
<svg class="a" style="left:963px;top:32px" width="18" height="18" viewBox="0 0 18 18">
<circle cx="8.5" cy="8.5" r="7" fill="#8c8c8c" stroke="#4a4a4a" stroke-width="1.2"/>
<rect x="7.6" y="3.2" width="1.9" height="1.9" fill="#fff"/><path d="M6.6 6.5h2.9v5.5h1.2v1.3h-4.2v-1.3h1.1v-4.2h-1z" fill="#fff"/>
</svg>
<svg class="a" style="left:983px;top:32px" width="18" height="18" viewBox="0 0 18 18">
<path d="M2.5 5l2.5-2.5 4 4 4-4 2.5 2.5-4 4 4 4-2.5 2.5-4-4-4 4-2.5-2.5 4-4z" fill="#8e8e8e" stroke="#5a5a5a" stroke-width="1.1" stroke-linejoin="round"/>
</svg>
<!-- scrollbar arrows -->
<svg class="a" style="left:1006px;top:30px" width="10" height="10" viewBox="0 0 10 10"><path d="M2 7.5h6l-3-5.5z" fill="#4c4c4c"/></svg>
<svg class="a" style="left:1006px;top:618px" width="10" height="10" viewBox="0 0 10 10"><path d="M2 2.5h6l-3 5.5z" fill="#4c4c4c"/></svg>
<!-- bottom buttons -->
<div class="a" style="left:820px;top:641px;width:24px;height:24px;border:1px solid #b2b2b2;border-radius:3px;background:linear-gradient(#ececec,#d2d2d2)"></div>
<div class="a" style="left:853px;top:641px;width:24px;height:24px;border:1px solid #b2b2b2;border-radius:3px;background:linear-gradient(#ececec,#d2d2d2)"></div>
<svg class="a" style="left:820px;top:641px" width="24" height="24" viewBox="820 641 24 24"><path d="M831.2 643l6.8 6h-3.3v13.7h-6.5v-13.7h-3.3z" fill="#98d818" stroke="#4a9a10" stroke-width="1"/><path d="M831.6 646v15" stroke="#d8f880" stroke-width="1" opacity="0.7"/></svg>
<svg class="a" style="left:853px;top:641px" width="24" height="24" viewBox="853 641 24 24"><path d="M864.3 662.8l6.8-6.5h-3.3v-13h-6.5v13h-3.3z" fill="#98d818" stroke="#4a9a10" stroke-width="1"/><path d="M864.6 645v15" stroke="#d8f880" stroke-width="1" opacity="0.7"/></svg>

</body></html>
